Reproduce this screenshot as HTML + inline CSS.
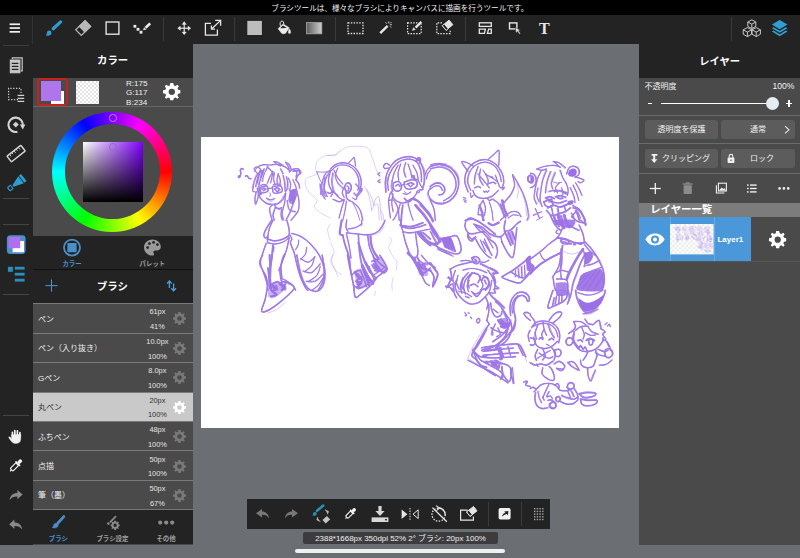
<!DOCTYPE html>
<html lang="ja"><head><meta charset="utf-8"><title>MediBang</title>
<style>
html,body{margin:0;padding:0;}
body{width:800px;height:558px;overflow:hidden;background:#6b6e73;position:relative;font-family:"Liberation Sans","Noto Sans CJK JP",sans-serif;color:#fff;}
.a{position:absolute;}
.t{position:absolute;white-space:nowrap;line-height:1;}
.c{transform:translate(-50%,-50%);}
svg{position:absolute;overflow:visible;}
#status{left:0;top:0;width:800px;height:14.5px;background:#000;}
#toolbar{left:0;top:14.5px;width:800px;height:29.5px;background:#232323;}
#sidebar{left:0;top:44px;width:32.5px;height:500.5px;background:#232323;}
.vsep{position:absolute;top:17px;width:1px;height:24px;background:#3a3a3a;}
.hsep{position:absolute;left:3px;width:26px;height:1px;background:#444;}
#lp{left:33px;top:44px;width:160px;height:500.5px;background:#4a4a4a;}
#rp{left:639px;top:44px;width:161px;height:500.5px;background:#4a4a4a;}
.hdr{position:absolute;left:0;top:0;width:100%;height:33.5px;background:#232323;}
.brow{position:absolute;left:0;width:160px;height:28.6px;border-top:1px solid #7a7a7a;background:#4a4a4a;}
.brow .n{position:absolute;left:5px;top:50%;margin-top:1.4px;transform:translateY(-50%);font-size:8px;line-height:1;color:#eee;white-space:nowrap;}
.brow .v{position:absolute;left:124.4px;transform:translate(-50%,-50%);font-size:7.4px;line-height:1;color:#e4e4e4;white-space:nowrap;}
.brow.sel{background:#c9c9c9;}
.brow.sel .n,.brow.sel .v{color:#333;}
.btn{position:absolute;height:19.3px;background:#5c5c5c;border-radius:3px;}
</style></head><body>
<svg width="0" height="0" style="position:absolute;left:0;top:0"><defs>
<symbol id="gear" viewBox="-10 -10 20 20"><path fill-rule="evenodd" d="M-1.7,-10H1.7L2.3,-7.3L4.1,-6.5L6.4,-8L8,-6.4L6.5,-4.1L7.3,-2.3L10,-1.7V1.7L7.3,2.3L6.5,4.1L8,6.4L6.4,8L4.1,6.5L2.3,7.3L1.7,10H-1.7L-2.3,7.3L-4.1,6.5L-6.4,8L-8,6.4L-6.5,4.1L-7.3,2.3L-10,1.7V-1.7L-7.3,-2.3L-6.5,-4.1L-8,-6.4L-6.4,-8L-4.1,-6.5L-2.3,-7.3ZM0,-3.6A3.6,3.6 0 1 0 0,3.6A3.6,3.6 0 1 0 0,-3.6Z"/></symbol>
<pattern id="chk" width="4" height="4" patternUnits="userSpaceOnUse"><rect width="4" height="4" fill="#fff"/><rect width="2" height="2" fill="#e3e3e3"/><rect x="2" y="2" width="2" height="2" fill="#e3e3e3"/></pattern>
<pattern id="chk2" width="44" height="44" patternUnits="userSpaceOnUse"><rect width="44" height="44" fill="#fff"/><rect width="22" height="22" fill="#ececec"/><rect x="22" y="22" width="22" height="22" fill="#ececec"/></pattern>
</defs></svg>

<div class="a" id="status"><div class="t c" style="left:399.8px;top:8.6px;font-size:7.6px;color:#f2f2f2;">ブラシツールは、様々なブラシによりキャンバスに描画を行うツールです。</div></div>
<div class="a" id="toolbar">
<div class="vsep" style="left:32px;top:1px;height:28px;background:#333"></div>
<div class="vsep" style="left:163px;top:2.5px"></div>
<div class="vsep" style="left:233.5px;top:2.5px"></div>
<div class="vsep" style="left:334.5px;top:2.5px"></div>
<div class="vsep" style="left:464.5px;top:2.5px"></div>
<div class="vsep" style="left:730.5px;top:2.5px"></div>
<svg style="left:0;top:-14.5px" width="800" height="44" viewBox="0 0 800 44">
<!-- hamburger -->
<g fill="#f0f0f0"><rect x="9.6" y="23.4" width="10.4" height="1.7"/><rect x="9.6" y="27.2" width="10.4" height="1.7"/><rect x="9.6" y="31" width="10.4" height="1.7"/></g>
<!-- brush -->
<g stroke="#2f9bd2" fill="#2f9bd2"><line x1="60.6" y1="21.9" x2="53.2" y2="28.7" stroke-width="3.3" stroke-linecap="round"/><circle cx="49.2" cy="32.9" r="2.3" stroke="none"/><path d="M47.4,33 C47.2,34.2 46.8,34.8 46,35.2 C47.4,35.8 49,35.6 50,34.8Z" stroke-width="0.5"/></g>
<!-- eraser -->
<g transform="translate(83.2,28.05) rotate(-44)"><rect x="-6.5" y="-4" width="13" height="8" fill="none" stroke="#b8b8b8" stroke-width="1.2"/><rect x="-2.2" y="-4.5" width="9.2" height="9" fill="#b8b8b8"/></g>
<!-- square -->
<rect x="106.1" y="22" width="12.8" height="12.2" fill="none" stroke="#e0e0e0" stroke-width="1.4"/>
<!-- polyline pen -->
<g fill="#ececec" stroke="#ececec"><rect x="133.5" y="24.9" width="2.8" height="2.8" stroke="none"/><rect x="136.6" y="27.9" width="2.8" height="2.8" stroke="none"/><rect x="139.6" y="30.8" width="2.8" height="2.8" stroke="none"/><line x1="145.6" y1="27.8" x2="150.2" y2="23.4" stroke-width="2.6"/><path d="M143.2,30 L144.2,27.4 L146.2,29.4Z" stroke-width="0.3"/></g>
<!-- move -->
<g fill="#e6e6e6" stroke="#e6e6e6" stroke-width="1.2"><line x1="178.6" y1="28.2" x2="189.8" y2="28.2"/><line x1="184.2" y1="22.6" x2="184.2" y2="33.8"/><path d="M184.2,21.6 L186.4,24.4 H182Z M184.2,34.8 L186.4,32 H182Z M177.6,28.2 L180.4,26 V30.4Z M190.8,28.2 L188,26 V30.4Z" stroke-width="0.3"/></g>
<!-- transform -->
<g fill="none" stroke="#e6e6e6" stroke-width="1.3"><path d="M211,23.4 H205.4 V35.2 H217.4 V29.4"/><path d="M211.6,29 L220.4,20.6 M215.2,20.4 H220.6 V25.8"/><path d="M211.4,25.6 V29.2 H215"/></g>
<!-- fill square -->
<rect x="247.3" y="20.9" width="14.6" height="14.1" fill="#bdbdbd"/>
<!-- bucket -->
<g fill="#ececec" stroke="#ececec"><path d="M278,28.8 L281.8,24.9 L283.4,24.1 L289.2,27.7 L288.6,28.8 L285.6,33.2 Q283.6,34.4 281.8,33.4 Z" stroke-width="0.4"/><path d="M280.2,28.3 L283,25.6 L286.8,27.9Z" fill="#232323" stroke="none"/><path d="M280.4,25.8 C279.6,23 280.4,21.4 281.8,21.1 C283.4,20.9 284,22.6 283.7,24.2" fill="none" stroke-width="1"/><path d="M288.9,28.6 C290.6,29.8 291,32 290.5,33.2 C289.7,33.9 288.4,33.5 288.2,32.4 C288.2,31 289,30 288.9,28.6Z" stroke-width="0.3"/></g>
<!-- gradient -->
<linearGradient id="tg" x1="0" x2="1" y1="0" y2="0"><stop offset="0" stop-color="#5a5a5a"/><stop offset="1" stop-color="#d0d0d0"/></linearGradient>
<rect x="306.4" y="22.6" width="15.4" height="11.2" fill="url(#tg)" stroke="#a8a8a8" stroke-width="0.8"/>
<!-- dotted select -->
<rect x="348" y="22.9" width="15" height="10.6" fill="none" stroke="#e0e0e0" stroke-width="1.3" stroke-dasharray="1.5 1.3"/>
<!-- magic wand -->
<g stroke="#e6e6e6" fill="#e6e6e6"><line x1="380.2" y1="33.2" x2="387.6" y2="25.8" stroke-width="2.4"/><g stroke-width="0.9"><line x1="388.8" y1="21.4" x2="388.8" y2="23.4"/><line x1="391.8" y1="24.8" x2="389.8" y2="24.8"/><line x1="385.6" y1="22.2" x2="386.8" y2="23.6"/><line x1="391.4" y1="22.2" x2="390.2" y2="23.4"/><line x1="391.2" y1="27.6" x2="390" y2="26.4"/></g></g>
<!-- select pen -->
<g stroke="#e6e6e6" fill="#e6e6e6"><rect x="407.6" y="22.8" width="13.6" height="10.8" fill="none" stroke-width="1.2" stroke-dasharray="1.5 1.3"/><line x1="415.4" y1="27.8" x2="421.6" y2="21.4" stroke-width="3.2" stroke="#232323"/><line x1="415.6" y1="27.6" x2="421.4" y2="21.8" stroke-width="2.4"/><path d="M412.4,30.6 L413.4,27.6 L415.4,29.6Z" stroke-width="0.4"/></g>
<!-- select eraser -->
<g stroke="#e6e6e6" fill="#e6e6e6"><path d="M442,22.8 H436.8 V33.6 H450.2 V30" fill="none" stroke-width="1.2" stroke-dasharray="1.5 1.3"/><g transform="translate(447.6,25.2) rotate(-40)"><rect x="-4.4" y="-3" width="8.8" height="6" stroke-width="0.8"/><rect x="-4.4" y="-3" width="2.6" height="6" fill="#232323" stroke-width="0.8"/></g></g>
<!-- panel layout -->
<g fill="none" stroke="#e6e6e6" stroke-width="1.3"><rect x="479.3" y="22.8" width="12" height="3.6"/><path d="M479.3,29.2 H485.4 L484.4,33.4 H479.3Z"/><path d="M488.6,29.2 H491.3 V33.4 H487.4Z"/></g>
<!-- select cursor -->
<g fill="none" stroke="#e6e6e6"><rect x="509.5" y="22.9" width="7.4" height="6" stroke-width="1.4"/><path d="M515.2,27.6 L516,33.2 L517.4,31.6 L519.6,34.2 L520.6,33.4 L518.6,30.8 L520.6,30.2Z" fill="#e6e6e6" stroke="#232323" stroke-width="0.5"/></g>
<!-- cubes -->
<g fill="none" stroke="#d8d8d8" stroke-width="0.9" stroke-linejoin="round"><path d="M751.8,19.8 L755.8,22 V26.4 L751.8,28.6 L747.8,26.4 V22Z M747.8,22 L751.8,24.2 L755.8,22 M751.8,24.2 V28.6"/><path d="M747.4,27.6 L751.6,29.8 V34.2 L747.4,36.6 L743.2,34.2 V29.8Z M743.2,29.8 L747.4,32 L751.6,29.8 M747.4,32 V36.6"/><path d="M756.2,27.6 L760.4,29.8 V34.2 L756.2,36.6 L752,34.2 V29.8Z M752,29.8 L756.2,32 L760.4,29.8 M756.2,32 V36.6"/></g>
<!-- layers -->
<g fill="#2f9fd4" stroke="none"><path d="M779.7,20 L787.5,24.6 L779.7,29.2 L771.9,24.6Z"/><path d="M773.6,27.2 L779.7,30.8 L785.8,27.2 L787.5,28.2 L779.7,32.8 L771.9,28.2Z"/><path d="M773.6,30.6 L779.7,34.2 L785.8,30.6 L787.5,31.6 L779.7,36.2 L771.9,31.6Z"/></g>
</svg>
<div class="t c" style="left:544.3px;top:14.1px;font-family:'Liberation Serif',serif;font-weight:bold;font-size:16px;color:#e8e8e8;">T</div>
</div>
<div class="a" id="sidebar">
<div class="hsep" style="top:1px;background:#3c3c3c"></div>
<div class="hsep" style="top:154px"></div>
<div class="hsep" style="top:179.5px"></div>
<div class="hsep" style="top:250px"></div>
<div class="hsep" style="top:371px"></div>
<svg style="left:0;top:-44px" width="33" height="545" viewBox="0 0 33 545">
<!-- pages -->
<g fill="none" stroke="#c8c8c8" stroke-width="1.2"><path d="M12.4,59 V57.8 H22.2 V70.8 H20.6"/><rect x="10.3" y="60" width="9.6" height="12.8" fill="#c8c8c8" stroke-width="1"/><g stroke="#232323" stroke-width="1.3"><line x1="11.8" y1="63.4" x2="18.4" y2="63.4"/><line x1="11.8" y1="66.4" x2="18.4" y2="66.4"/><line x1="11.8" y1="69.4" x2="18.4" y2="69.4"/></g></g>
<!-- select list -->
<g fill="none" stroke="#d0d0d0"><path d="M18,99.6 H8.6 V88.4 H21 V93" stroke-width="1.2" stroke-dasharray="1.3 1.5"/><g stroke-width="1.3"><line x1="17.6" y1="95.4" x2="24.2" y2="95.4"/><line x1="17.6" y1="98.4" x2="24.2" y2="98.4"/><line x1="17.6" y1="101.4" x2="24.2" y2="101.4"/></g></g>
<!-- rotate -->
<g fill="none" stroke="#d4d4d4"><path d="M22.6,126.6 A7.2,7.2 0 1 0 17.4,131.8" stroke-width="2.1"/><path d="M19.8,124.4 L25.4,124.6 L22.8,129.6Z" fill="#d4d4d4" stroke="none"/><rect x="-2.1" y="-2.1" width="4.2" height="4.2" transform="translate(15.8,124.6) rotate(45)" fill="#d4d4d4" stroke="none"/></g>
<!-- ruler -->
<g transform="translate(16.1,153.6) rotate(-38)" fill="none" stroke="#d4d4d4"><rect x="-8.8" y="-3.6" width="17.6" height="7.2" stroke-width="1.5" rx="0.6"/><g stroke-width="0.9"><line x1="-5.6" y1="-3.6" x2="-5.6" y2="-0.8"/><line x1="-2.8" y1="-3.6" x2="-2.8" y2="-1.4"/><line x1="0" y1="-3.6" x2="0" y2="-0.8"/><line x1="2.8" y1="-3.6" x2="2.8" y2="-1.4"/><line x1="5.6" y1="-3.6" x2="5.6" y2="-0.8"/></g></g>
<!-- marker -->
<g transform="translate(15.9,183.7) rotate(-38)" fill="#2f9bd0" stroke="none"><rect x="7.3" y="-4.5" width="2.7" height="9"/><path d="M6.5,-4.5 L6.5,4.5 L-3.6,1 L-3.6,-1Z"/><path d="M-4.8,-2.6 H-8.8 L-9.6,-1.8 V1.8 L-8.8,2.6 H-4.8Z M-5.8,-1.5 V1.5 H-8.4 V-1.5Z" fill-rule="evenodd"/></g>
<!-- color -->
<rect x="6.9" y="235.3" width="18.7" height="18.7" rx="3.4" fill="#4a90c9"/><rect x="12.6" y="241" width="11.4" height="11.2" fill="#fff"/><rect x="8.6" y="237" width="11.6" height="11.2" fill="#b26ef0"/>
<!-- list -->
<g fill="#2a8fba"><rect x="7.9" y="266.8" width="5" height="5"/><rect x="14.8" y="266.8" width="9.8" height="2.8"/><rect x="14.8" y="272.8" width="9.8" height="2.8"/><rect x="14.8" y="278.8" width="9.8" height="2.8"/></g>
<!-- hand -->
<g fill="#f2f2f2" stroke="#f2f2f2" stroke-linecap="round"><path d="M11.6,436.4 L11.6,440.2 C11.8,442.4 13.2,443.4 15.8,443.4 C18.6,443.4 20.4,442.4 20.6,439.6 L20.8,434.6 L11.6,434.8Z" stroke-width="0.5"/><line x1="12.4" y1="432.4" x2="12.6" y2="437" stroke-width="1.7"/><line x1="14.8" y1="430.6" x2="14.9" y2="437" stroke-width="1.7"/><line x1="17.4" y1="430.9" x2="17.3" y2="437" stroke-width="1.7"/><line x1="19.9" y1="432.6" x2="19.7" y2="437" stroke-width="1.7"/><path d="M11.8,440.6 L9.4,437.4" stroke-width="1.8"/></g>
<!-- eyedropper -->
<g transform="translate(15.8,465.6) rotate(45)" fill="none" stroke="#f2f2f2"><rect x="-1.9" y="-2" width="3.8" height="8" rx="0.8" stroke-width="1.2"/><path d="M0,6 V8" stroke-width="1.2"/><rect x="-3.2" y="-3.6" width="6.4" height="1.7" fill="#f2f2f2" stroke="none"/><rect x="-1.7" y="-8" width="3.4" height="4.6" rx="1.2" fill="#f2f2f2" stroke="none"/></g>
<!-- redo -->
<path d="M9.6,500 C10,495.4 13.4,493 17.4,493 V490 L22.6,494.6 L17.4,499.2 V496.4 C14.2,496.2 11.6,497.2 9.6,500Z" fill="#8a8a8a"/>
<!-- undo -->
<path d="M22.2,529.6 C21.8,525 18.4,522.6 14.4,522.6 V519.6 L9.2,524.2 L14.4,528.8 V526 C17.6,525.8 20.2,526.8 22.2,529.6Z" fill="#8a8a8a"/>
</svg>
</div>
<div class="a" id="lp">
<div class="hdr"><div class="t c" style="left:79.6px;top:17.4px;font-size:10.4px;font-weight:bold;">カラー</div></div>
<div class="a" style="left:0;top:62px;width:160px;height:1px;background:#666"></div>
<!-- swatches -->
<div class="a" style="left:4.3px;top:33.6px;width:31px;height:28.4px;border:2.1px solid #c4221e;border-radius:4px;box-sizing:border-box;"></div>
<div class="a" style="left:17.6px;top:47px;width:13.8px;height:13px;background:#fff;"></div>
<div class="a" style="left:7.7px;top:36.8px;width:20.8px;height:20px;background:#af75ea;"></div>
<svg style="left:42.8px;top:36.8px" width="23" height="23"><rect width="23" height="23" fill="url(#chk)"/></svg>
<div class="t" style="left:93px;top:34.6px;font-size:8.1px;line-height:9.7px;color:#f0f0f0;">R:175<br>G:117<br>B:234</div>
<svg style="left:129.6px;top:38.8px" width="17.6" height="17.6" fill="#fff"><use href="#gear"/></svg>
<!-- wheel -->
<div class="a" style="left:18.8px;top:67.5px;width:120.6px;height:120.6px;border-radius:50%;background:conic-gradient(from 90deg,#f00,#ff0,#0f0,#0ff,#00f,#f0f,#f00);"></div>
<div class="a" style="left:31.6px;top:80.3px;width:95px;height:95px;border-radius:50%;background:#4a4a4a;"></div>
<div class="a" style="left:49.6px;top:98px;width:60px;height:60px;background:linear-gradient(to bottom,rgba(0,0,0,0),#000),linear-gradient(to right,#fff,#7d00ff);"></div>
<div class="a" style="left:76.2px;top:70.4px;width:5.4px;height:5.4px;border:1.3px solid #b58ad8;border-radius:50%;"></div>
<div class="a" style="left:76.2px;top:99.4px;width:5.4px;height:5.4px;border:1.3px solid #8d70b0;border-radius:50%;"></div>
<!-- tabs -->
<div class="a" style="left:0;top:192.4px;width:160px;height:32.6px;background:#232323;"></div>
<svg style="left:0;top:192.4px" width="160" height="33" viewBox="0 0 160 33">
<circle cx="39" cy="11.6" r="8" fill="none" stroke="#4a8fc8" stroke-width="1.8"/><rect x="34.4" y="7" width="9.2" height="9.2" rx="1" fill="#4a8fc8"/>
<path d="M119.4,3.4 C114.4,3.4 111,7 111,11.6 C111,16.6 115.4,19.8 119.6,19.6 C121.4,19.4 121.2,17.8 120.6,17 C119.8,15.6 120.8,14.4 122.4,14.4 H124.4 C126.6,14.4 127.8,12.8 127.8,10.8 C127.8,6.6 124,3.4 119.4,3.4Z" fill="#9a9a9a"/>
<g fill="#232323"><circle cx="114.6" cy="11.6" r="1.4"/><circle cx="116.4" cy="7.6" r="1.4"/><circle cx="120.6" cy="6.4" r="1.4"/><circle cx="124.4" cy="8.6" r="1.4"/></g>
</svg>
<div class="t c" style="left:39px;top:220.3px;font-size:6.4px;font-weight:bold;color:#4a90d2;">カラー</div>
<div class="t c" style="left:119.4px;top:220.3px;font-size:6.4px;font-weight:bold;color:#9a9a9a;">パレット</div>
<div class="a" style="left:0;top:225px;width:160px;height:34.2px;background:#232323;border-top:1px solid #111;box-sizing:border-box;"></div>
<svg style="left:0;top:225px" width="160" height="34" viewBox="0 0 160 34"><g stroke="#4a8fc8" stroke-width="1.1" fill="none"><line x1="12.4" y1="16.6" x2="24.6" y2="16.6"/><line x1="18.5" y1="10.5" x2="18.5" y2="22.7"/></g>
<g stroke="#4a9fe0" stroke-width="1.3" fill="none"><path d="M136.4,19 V12.4 M134,14.6 L136.4,12 L138.8,14.6"/><path d="M140.6,14.6 V21.4 M138.2,19.2 L140.6,21.8 L143,19.2"/></g></svg>
<div class="t c" style="left:79.4px;top:242.8px;font-size:10.4px;font-weight:bold;">ブラシ</div>
<div class="brow" style="top:259.2px"><div class="n">ペン</div><div class="v" style="top:8.2px">61px</div><div class="v" style="top:22.9px">41%</div><svg style="left:140px;top:8.3px" width="13" height="13" fill="#787878"><use href="#gear"/></svg></div>
<div class="brow" style="top:288.7px"><div class="n">ペン（入り抜き）</div><div class="v" style="top:8.2px">10.0px</div><div class="v" style="top:22.9px">100%</div><svg style="left:140px;top:8.3px" width="13" height="13" fill="#787878"><use href="#gear"/></svg></div>
<div class="brow" style="top:318.2px"><div class="n">Gペン</div><div class="v" style="top:8.2px">8.0px</div><div class="v" style="top:22.9px">100%</div><svg style="left:140px;top:8.3px" width="13" height="13" fill="#787878"><use href="#gear"/></svg></div>
<div class="brow sel" style="top:347.6px"><div class="n">丸ペン</div><div class="v" style="top:8.2px">20px</div><div class="v" style="top:22.9px">100%</div><svg style="left:140px;top:8.3px" width="13" height="13" fill="#ffffff"><use href="#gear"/></svg></div>
<div class="brow" style="top:377.0px"><div class="n">ふちペン</div><div class="v" style="top:8.2px">48px</div><div class="v" style="top:22.9px">100%</div><svg style="left:140px;top:8.3px" width="13" height="13" fill="#787878"><use href="#gear"/></svg></div>
<div class="brow" style="top:406.4px"><div class="n">点描</div><div class="v" style="top:8.2px">50px</div><div class="v" style="top:22.9px">100%</div><svg style="left:140px;top:8.3px" width="13" height="13" fill="#787878"><use href="#gear"/></svg></div>
<div class="brow" style="top:435.8px"><div class="n">筆（墨）</div><div class="v" style="top:8.2px">50px</div><div class="v" style="top:22.9px">67%</div><svg style="left:140px;top:8.3px" width="13" height="13" fill="#787878"><use href="#gear"/></svg></div>

<div class="a" style="left:0;top:465.2px;width:160px;height:35.3px;background:#232323;border-top:1.5px solid #777;box-sizing:border-box;"></div>
<svg style="left:0;top:466px" width="160" height="34" viewBox="0 0 160 34">
<g stroke="#4a8fc8" fill="#4a8fc8"><line x1="30.8" y1="6.6" x2="25" y2="13" stroke-width="2.8" stroke-linecap="round"/><path d="M24.2,13.6 C23.4,12.8 21,13.2 20.6,15.2 C20.4,16.4 20,16.8 19.2,17.4 C20.6,18.4 23.6,18.2 24.8,16.6 C25.6,15.4 25.2,14.2 24.2,13.6Z" stroke-width="0.5"/></g>
<g stroke="#8a8a8a" fill="#8a8a8a"><line x1="82.6" y1="6.6" x2="77.4" y2="11.8" stroke-width="1.8" stroke-linecap="round"/><circle cx="75.4" cy="13.6" r="1.3" stroke="none"/></g>
<svg x="77.4" y="10.6" width="9.4" height="9.4" fill="#8a8a8a" style="position:static"><use href="#gear"/></svg>
<g fill="#8a8a8a"><circle cx="127.2" cy="12.6" r="2.1"/><circle cx="133.2" cy="12.6" r="2.1"/><circle cx="139.2" cy="12.6" r="2.1"/></g>
</svg>
<div class="t c" style="left:25.4px;top:495px;font-size:6.4px;font-weight:bold;color:#4a90d2;">ブラシ</div>
<div class="t c" style="left:79.4px;top:495px;font-size:6.4px;font-weight:bold;color:#a0a0a0;">ブラシ設定</div>
<div class="t c" style="left:133px;top:495px;font-size:6.4px;font-weight:bold;color:#a0a0a0;">その他</div>
</div>
<div class="a" id="rp">
<div class="hdr"><div class="t c" style="left:80.6px;top:17.7px;font-size:10.3px;font-weight:bold;">レイヤー</div></div>
<div class="t" style="left:5.6px;top:38.6px;font-size:8px;color:#f0f0f0;">不透明度</div>
<div class="t" style="right:5.6px;top:38px;font-size:8.6px;color:#f0f0f0;">100%</div>
<div class="a" style="left:22px;top:58.7px;width:110px;height:1.5px;background:#fff;"></div>
<div class="a" style="left:126.8px;top:53px;width:13px;height:13px;border-radius:50%;background:#e6edf2;"></div>
<div class="a" style="left:9.4px;top:58.6px;width:3.6px;height:1.7px;background:#fff;"></div>
<div class="a" style="left:146.6px;top:58.6px;width:6.4px;height:1.7px;background:#fff;"></div>
<div class="a" style="left:148.9px;top:56.2px;width:1.8px;height:6.4px;background:#fff;"></div>
<div class="a" style="left:0;top:70.6px;width:161px;height:1px;background:#6a6a6a;"></div>
<div class="btn" style="left:5.6px;top:75.5px;width:73.8px;"><div class="t c" style="left:36.9px;top:10.7px;font-size:8px;color:#f0f0f0;">透明度を保護</div></div>
<div class="btn" style="left:82px;top:75.5px;width:73.9px;"><div class="t c" style="left:37px;top:10.7px;font-size:8px;color:#f0f0f0;">通常</div>
<svg style="left:62px;top:5px" width="8" height="10"><path d="M2,1.2 L6,4.8 L2,8.4" fill="none" stroke="#e8e8e8" stroke-width="1.1"/></svg></div>
<div class="a" style="left:0;top:99.2px;width:161px;height:1px;background:#6a6a6a;"></div>
<div class="btn" style="left:5.6px;top:104.8px;width:73.8px;"><div class="t" style="left:17.4px;top:6.4px;font-size:8px;color:#f0f0f0;">クリッピング</div>
<svg style="left:4.6px;top:4.2px" width="10" height="11"><path d="M2.6,1 H8.4 V2.8 H6.2 V6.2 H8.4 L5.2,10 L2,6.2 H4.2 V2.8 H2.6Z" fill="#f0f0f0"/></svg></div>
<div class="btn" style="left:82px;top:104.8px;width:73.9px;"><div class="t c" style="left:41px;top:10.6px;font-size:8px;color:#f0f0f0;">ロック</div>
<svg style="left:6.2px;top:4.4px" width="8" height="11"><rect x="0.6" y="4.6" width="6.8" height="5.4" rx="0.8" fill="#f0f0f0"/><path d="M2.2,4.8 V3.2 A1.8,1.8 0 0 1 5.8,3.2 V4.8" fill="none" stroke="#f0f0f0" stroke-width="1.1"/><circle cx="4" cy="7.2" r="0.8" fill="#5c5c5c"/></svg></div>
<div class="a" style="left:0;top:129px;width:161px;height:1px;background:#6a6a6a;"></div>
<svg style="left:0;top:134px" width="161" height="22" viewBox="0 0 161 22">
<g stroke="#f0f0f0" stroke-width="1.3"><line x1="10.8" y1="10.5" x2="21.8" y2="10.5"/><line x1="16.3" y1="5" x2="16.3" y2="16"/></g>
<g fill="#8c8c8c"><rect x="44.6" y="7.2" width="8.2" height="8.8" rx="0.8"/><rect x="43.8" y="5.4" width="9.8" height="1.3"/><rect x="46.8" y="4.4" width="3.8" height="1.4"/></g>
<g fill="none" stroke="#f0f0f0" stroke-width="1.1"><path d="M77.4,7.2 V15 H85.4"/><rect x="79.4" y="5.2" width="8" height="7.8"/><path d="M80,12.4 L82.6,9.4 L84.2,11 L85.4,10 L87,12.4Z" fill="#f0f0f0" stroke="none"/></g>
<g fill="#f0f0f0"><rect x="108" y="6.4" width="1.6" height="1.4"/><rect x="111" y="6.4" width="6.6" height="1.4"/><rect x="108" y="9.8" width="1.6" height="1.4"/><rect x="111" y="9.8" width="6.6" height="1.4"/><rect x="108" y="13.2" width="1.6" height="1.4"/><rect x="111" y="13.2" width="6.6" height="1.4"/></g>
<g fill="#f0f0f0"><circle cx="140.6" cy="10.4" r="1.3"/><circle cx="144.9" cy="10.4" r="1.3"/><circle cx="149.2" cy="10.4" r="1.3"/></g>
</svg>
<div class="a" style="left:0;top:159.4px;width:161px;height:13.6px;background:#7c7c7c;"><div class="t" style="left:11.2px;top:1.2px;font-size:10.4px;font-weight:bold;">レイヤー一覧</div></div>
<div class="a" style="left:0;top:173px;width:111.8px;height:44.2px;background:#4a98d9;"></div>
<div class="a" style="left:30.8px;top:173px;width:1px;height:44.2px;background:#6aaae0;"></div>
<div class="a" style="left:75px;top:173px;width:1px;height:44.2px;background:#6aaae0;"></div>
<svg style="left:31.4px;top:180.3px;overflow:hidden" width="43.6" height="30.4" viewBox="0 0 418 291.4"><rect width="418" height="291.4" fill="url(#chk2)"/><use href="#skg" style="--k:1.2" opacity="0.5"/></svg>
<svg style="left:5.8px;top:189px" width="20" height="13" viewBox="0 0 20 13"><path d="M0.4,6.5 C3,2 6.4,0.6 10,0.6 C13.6,0.6 17,2 19.6,6.5 C17,11 13.6,12.4 10,12.4 C6.4,12.4 3,11 0.4,6.5Z" fill="#fff"/><circle cx="10" cy="6.5" r="4" fill="#4a98d9"/><circle cx="10" cy="6.5" r="2" fill="#fff"/></svg>
<div class="t" style="left:78.4px;top:191.6px;font-size:8px;font-weight:bold;color:#fff;">Layer1</div>
<svg style="left:130.4px;top:186.8px" width="17.4" height="17.4" fill="#fff"><use href="#gear"/></svg>
<div class="a" style="left:0;top:217.2px;width:161px;height:1px;background:#555;"></div>
</div>
<div class="a" id="canvas" style="left:200.7px;top:136.8px;width:418px;height:291.4px;background:#fff;overflow:hidden;"><!--SK0--><svg id="sk" style="left:0;top:0" width="418" height="291.4" viewBox="0 0 418 291.4"><g id="skg" fill="none" stroke="#a07ae6" stroke-linecap="round" stroke-linejoin="round"><path style="stroke-width:calc(var(--k,1)*0.59px)" d="M63.4,35.3C63.1,36.1 62.3,38.6 61.9,40.1C61.4,41.5 60.9,43.4 60.7,44.1M52.2,50.1C52.2,50.6 51.7,52.6 52.1,53.4C52.5,54.1 54.2,54.6 54.6,54.8M71.5,33.9C71.4,35.1 71.1,39.2 70.7,41.1C70.3,43.1 69.5,44.9 69.2,45.7M77.0,37.0C77.3,38.1 78.5,41.6 78.7,43.6C78.9,45.5 78.2,47.8 78.1,48.7M83.6,50.8C83.6,51.4 83.5,54.2 83.8,54.6C84.1,54.9 85.3,53.3 85.5,53.0M59.5,48.8C60.0,48.7 61.5,47.8 62.6,47.7C63.7,47.7 65.5,48.6 66.1,48.7M72.4,48.1C73.1,48.0 75.4,47.7 76.7,47.7C78.1,47.8 79.8,48.2 80.4,48.3M91.3,42.2C91.7,43.3 93.4,46.8 94.0,48.4C94.7,50.0 95.1,51.3 95.4,51.9M85.8,63.6C86.1,65.1 86.4,70.9 87.8,72.8C89.2,74.7 93.2,74.7 94.3,75.1M80.3,71.6C80.2,72.7 79.7,76.4 79.8,78.2C79.9,80.0 80.7,81.7 80.9,82.5M121.1,50.9C121.3,51.8 121.8,55.2 122.5,56.6C123.1,58.0 124.5,58.9 124.9,59.3M146.7,26.9C147.4,26.2 149.7,23.5 150.8,22.3C151.8,21.2 152.5,19.8 153.0,20.3C153.6,20.7 153.7,23.7 153.9,25.1C154.1,26.6 154.2,28.3 154.2,29.0M129.1,50.6C129.4,51.4 131.1,54.2 131.1,55.7C131.2,57.2 129.5,58.8 129.2,59.4M132.5,32.6C133.1,34.0 134.8,38.5 136.3,40.8C137.8,43.2 140.6,45.6 141.4,46.5M155.7,58.9C155.5,59.5 154.8,62.4 154.1,62.8C153.4,63.1 152.1,61.2 151.7,60.9M145.1,64.0C144.9,65.4 144.5,68.9 144.0,72.3C143.4,75.6 142.2,81.9 141.8,83.9M219.0,52.1C218.9,52.7 218.8,55.0 218.3,55.4C217.7,55.7 216.1,54.6 215.7,54.4M187.7,63.2C188.4,63.1 190.6,62.3 191.6,62.6C192.6,63.0 193.4,64.8 193.8,65.2M206.6,66.8C207.1,68.4 208.6,73.6 209.5,76.4C210.4,79.2 211.6,82.4 212.1,83.6M230.1,32.9C229.6,33.5 227.8,35.4 227.1,36.8C226.4,38.2 226.1,40.5 225.9,41.2M229.8,27.7C231.2,27.5 235.2,26.5 237.8,26.4C240.4,26.2 244.1,26.8 245.4,26.9M288.7,39.4C289.4,39.8 291.7,41.3 293.0,42.1C294.2,42.9 295.8,43.9 296.4,44.3M281.9,32.9C282.6,33.7 284.5,36.8 286.1,38.0C287.8,39.2 290.9,39.7 291.9,40.0M262.8,60.4L264.9,61.4M262.6,62.6L264.5,63.2M263.7,65.2L265.2,65.4M288.6,65.7C289.0,67.0 290.4,70.8 291.0,73.8C291.6,76.9 291.9,82.3 292.1,84.0M280.1,71.7C280.4,72.3 281.7,73.6 282.1,75.0C282.6,76.5 282.7,79.6 282.8,80.5M307.7,81.3C308.5,80.8 310.7,78.5 312.4,78.1C314.2,77.7 317.2,78.7 318.1,78.8M337.6,51.0C337.3,52.3 336.2,56.4 336.3,58.8C336.4,61.2 337.8,64.3 338.1,65.4M360.4,50.4C360.7,51.3 361.8,54.2 361.9,55.5C361.9,56.9 360.9,58.0 360.7,58.5M376.3,75.3L379.3,81.6M334.1,71.2L338.6,81.5M331.8,77.7L340.5,74.6M97.7,102.6C97.7,103.4 97.9,105.7 97.4,107.3C96.8,108.9 95.1,111.5 94.6,112.4M105.1,110.5C105.0,111.6 105.1,115.4 104.1,117.4C103.2,119.4 100.1,121.7 99.2,122.5M113.7,119.7C113.2,121.2 112.6,125.9 110.9,128.4C109.2,130.9 104.5,133.7 103.3,134.8M119.7,129.2C119.1,130.7 118.2,135.6 116.1,138.2C114.0,140.7 108.7,143.2 107.2,144.3M122.4,141.2C121.5,142.4 119.2,146.4 117.2,148.4C115.3,150.5 111.9,152.6 110.8,153.4M161.0,83.4L160.8,88.8M172.0,138.1C173.1,137.3 176.6,135.0 178.6,133.7C180.6,132.4 183.2,130.8 184.1,130.2M237.1,112.8C238.4,113.3 242.3,114.9 244.9,116.0C247.4,117.1 251.1,118.9 252.3,119.5M291.0,190.6L292.0,196.4M382.1,177.1C383.4,177.1 387.1,177.5 389.7,176.6C392.3,175.8 396.3,172.9 397.7,172.2M345.4,207.2L347.9,208.4M337.6,254.0C337.7,255.1 337.9,258.5 338.4,260.3C339.0,262.1 340.4,264.2 340.8,265.0M236.3,111.2C237.7,111.8 241.9,113.6 244.3,114.8C246.7,116.1 249.6,118.0 250.7,118.6M136.7,31.7C136.2,32.8 133.9,36.2 133.9,38.7C134.0,41.2 135.7,44.5 136.9,46.7C138.2,48.9 140.7,50.9 141.4,51.7"/>
<path style="stroke-width:calc(var(--k,1)*0.6px)" stroke-opacity="0.55" d="M129.3,18.2C128.1,18.4 124.6,18.4 122.4,19.5C120.2,20.5 117.4,22.4 116.1,24.5C114.8,26.6 114.8,29.9 114.7,32.0C114.7,34.1 116.8,35.8 116.0,37.0C115.2,38.3 111.6,38.7 109.7,39.5C107.8,40.4 105.5,40.6 104.7,42.3C103.9,44.0 103.9,47.1 104.7,49.6C105.5,52.1 107.8,54.8 109.7,57.1C111.6,59.4 115.4,61.3 116.0,63.4C116.6,65.5 112.9,67.6 113.5,69.7C114.1,71.8 117.1,74.1 119.8,75.9C122.4,77.8 127.7,80.1 129.3,81.0M129.3,18.2C130.1,18.1 132.6,18.4 134.3,17.6C136.0,16.8 138.5,13.9 139.3,13.2M129.3,87.0C128.9,87.8 126.9,89.9 126.7,92.0C126.4,94.1 127.5,97.6 127.9,99.5C128.4,101.4 129.1,102.6 129.3,103.3M129.3,105.8C129.9,107.2 132.9,111.6 133.1,114.6C133.3,117.5 130.3,120.2 130.6,123.4C130.8,126.5 133.3,130.7 134.3,133.4C135.4,136.1 136.4,138.6 136.8,139.7M188.3,100.8C188.7,101.2 190.9,101.6 190.8,103.3C190.7,104.9 187.6,108.1 187.8,110.8C188.0,113.5 190.7,117.3 192.0,119.6C193.4,121.9 195.3,122.3 195.8,124.6C196.3,126.9 195.4,131.9 195.3,133.4M192.0,140.9C191.8,142.2 190.9,146.4 190.8,148.4C190.7,150.5 191.4,152.4 191.5,153.2M174.4,154.1L173.6,158.5M131.6,118.2C131.3,119.4 129.2,122.6 129.8,125.2C130.4,127.8 133.3,131.9 135.1,134.0C136.8,136.0 139.4,136.9 140.3,137.5M126.9,18.3C128.2,18.3 131.9,19.3 134.4,18.3C136.9,17.2 139.5,13.4 142.0,12.0C144.5,10.5 146.6,9.9 149.5,9.5C152.4,9.1 156.6,9.2 159.5,9.5C162.5,9.8 165.2,9.7 167.1,11.4C168.9,13.0 169.6,16.3 170.8,19.5C172.1,22.8 173.5,27.9 174.6,30.8C175.6,33.7 176.7,36.0 177.1,37.1"/>
<path style="stroke-width:calc(var(--k,1)*0.66px)" d="M60.5,34.6C60.3,34.2 59.9,32.7 59.1,31.9C58.4,31.1 57.0,29.8 56.0,29.7C54.9,29.6 53.3,30.4 52.9,31.1C52.5,31.8 53.0,33.1 53.5,33.8C53.9,34.6 55.3,35.4 55.6,35.7M58.1,29.4C59.0,29.1 61.8,28.0 63.7,27.8C65.6,27.6 67.5,28.1 69.4,28.0C71.4,28.0 73.3,27.5 75.4,27.6C77.6,27.8 80.5,28.3 82.4,29.1C84.4,29.8 86.1,31.3 87.1,32.3C88.2,33.3 88.4,34.6 88.6,35.1M72.3,24.6C72.9,24.7 74.9,24.7 76.4,25.3C77.9,25.9 80.4,27.6 81.2,28.0M73.3,25.2C73.7,25.4 74.2,26.1 75.2,26.8C76.3,27.5 78.9,28.8 79.6,29.3M84.4,25.6C84.9,26.0 86.3,27.1 87.0,28.1C87.8,29.2 88.4,31.3 88.7,31.9M84.3,25.4C84.9,25.8 87.2,26.7 88.2,28.0C89.2,29.3 89.9,32.3 90.2,33.2M91.5,34.4C92.2,34.4 95.0,33.5 95.6,34.5C96.1,35.4 94.9,39.1 94.7,40.0M93.2,34.0C94.1,34.0 97.7,33.8 98.6,34.4C99.6,34.9 99.0,36.8 99.1,37.2M59.9,33.7C59.0,34.4 56.2,36.1 55.0,38.0C53.8,39.8 53.2,42.7 52.6,44.8C51.9,47.0 51.3,49.9 51.1,50.9M59.5,35.5C59.1,36.7 57.8,40.3 57.0,42.7C56.3,45.1 55.4,48.7 55.1,49.9M61.3,35.6C60.8,37.0 59.1,41.2 58.4,43.8C57.6,46.4 57.1,50.0 56.8,51.2M56.0,54.1C55.8,55.2 54.6,58.3 54.4,60.3C54.2,62.4 54.4,66.2 54.8,66.5C55.2,66.8 56.4,63.6 56.9,62.0C57.3,60.5 57.5,57.9 57.6,57.1M71.4,34.7C70.9,35.8 69.3,39.4 68.5,41.4C67.6,43.4 66.6,45.7 66.2,46.6M73.6,36.1C73.4,37.0 72.1,40.0 72.1,41.9C72.2,43.7 73.6,46.3 73.9,47.2M77.3,36.5C77.1,37.6 76.2,40.9 76.2,42.8C76.2,44.8 77.1,47.3 77.3,48.2M82.7,38.7C82.9,39.8 83.8,43.1 84.2,45.3C84.6,47.4 84.9,50.6 85.0,51.7M85.9,40.0C86.1,41.2 87.1,44.7 87.3,46.8C87.5,48.9 87.1,51.7 87.0,52.7M67.3,51.5L71.5,51.1M65.5,60.7C66.2,61.0 68.2,62.5 69.7,62.6C71.1,62.7 73.2,61.6 73.9,61.4M74.4,66.9C74.6,67.5 74.6,69.7 75.6,70.4C76.6,71.2 79.6,71.1 80.4,71.2M75.4,69.9C75.9,70.4 77.2,72.6 78.2,72.7C79.1,72.8 80.5,70.7 81.0,70.4M87.7,40.9C88.0,41.9 89.3,45.1 89.5,47.0C89.7,49.0 89.0,51.9 89.0,52.8M95.6,42.8C96.1,43.5 97.8,45.6 98.3,47.0C98.9,48.5 98.8,50.7 98.9,51.5M89.3,53.7C90.1,53.5 93.1,52.4 94.1,52.8C95.2,53.1 96.0,53.6 95.6,55.8C95.2,58.0 93.0,64.6 91.7,65.9C90.5,67.3 88.4,66.0 87.9,63.9C87.5,61.9 89.0,55.3 89.2,53.5M84.9,56.2C84.7,57.9 84.3,62.7 83.7,65.9C83.1,69.2 81.6,72.9 81.4,75.8C81.3,78.7 82.7,82.0 82.9,83.3M96.2,55.8C96.5,57.1 97.8,60.6 98.0,63.6C98.1,66.7 98.7,70.7 97.4,74.0C96.1,77.4 91.5,82.0 90.3,83.5M92.8,66.3C92.2,67.9 90.6,73.3 89.3,76.1C88.1,79.0 86.0,82.1 85.3,83.3M71.1,68.7C70.7,69.3 68.8,69.6 68.9,72.1C68.9,74.5 71.0,81.4 71.5,83.3M73.8,70.7C73.4,71.9 71.6,76.0 71.4,78.1C71.3,80.1 72.8,82.2 73.1,83.0M128.6,33.9C127.9,34.3 125.4,35.0 124.2,36.7C122.9,38.4 121.9,41.6 121.2,44.0C120.6,46.4 120.6,48.8 120.3,51.1C120.0,53.4 119.6,56.8 119.5,57.9M128.7,34.3C128.1,35.3 125.7,37.6 124.7,40.1C123.7,42.6 123.0,46.4 122.8,49.2C122.5,51.9 122.9,55.3 123.0,56.5M129.6,34.3C130.5,33.5 133.1,30.5 135.2,29.4C137.2,28.3 139.6,27.6 141.8,27.5C144.1,27.5 146.6,28.3 148.7,29.3C150.7,30.4 152.5,31.8 154.0,33.7C155.6,35.7 157.1,38.5 157.8,40.8C158.5,43.1 158.2,45.6 158.2,47.6C158.1,49.6 157.5,51.9 157.3,52.8M132.7,36.2C132.6,37.6 131.5,42.1 131.6,45.0C131.7,48.0 132.3,51.4 133.3,53.9C134.3,56.4 136.0,58.4 137.5,59.9C139.0,61.5 141.5,62.7 142.3,63.3M157.9,53.8C158.3,53.7 160.4,52.7 160.4,53.1C160.4,53.5 158.7,55.3 157.9,56.3C157.0,57.4 156.2,59.4 155.3,59.4C154.4,59.4 152.9,56.9 152.4,56.4M143.3,50.6C143.0,51.4 141.5,54.0 141.5,55.6C141.5,57.2 143.1,59.6 143.4,60.4M147.3,62.7C148.3,63.3 151.5,64.8 153.4,66.5C155.3,68.2 157.5,70.3 158.8,73.0C160.1,75.7 160.8,81.1 161.2,82.7M143.0,63.6C142.7,65.0 141.7,68.7 140.8,71.6C140.0,74.5 138.4,79.5 138.0,81.1M178.9,35.6C178.7,35.9 177.5,36.8 177.5,37.3C177.6,37.9 178.8,38.7 179.1,39.0M179.5,42.7C179.1,42.9 177.0,43.5 177.0,43.9C177.1,44.3 179.4,44.9 179.9,45.1M197.2,27.7C196.5,29.0 194.0,33.0 193.0,35.6C192.0,38.2 191.7,41.9 191.4,43.2M199.9,27.0C199.5,28.5 197.6,33.1 197.2,35.9C196.9,38.6 197.8,42.4 197.9,43.7M205.0,25.4C204.7,26.6 203.3,30.0 203.3,32.4C203.4,34.8 204.9,38.7 205.3,39.9M206.9,27.1C207.4,28.5 209.2,32.9 209.8,35.2C210.4,37.5 210.6,40.0 210.7,41.0M211.5,28.1C212.3,29.4 215.0,33.3 216.0,35.7C216.9,38.1 217.0,41.2 217.2,42.3M210.2,41.0C210.5,40.6 211.9,38.2 212.5,38.5C213.0,38.8 213.4,42.2 213.5,42.9M190.6,43.3C190.5,44.5 189.9,48.2 190.0,50.1C190.1,52.0 190.9,54.1 191.1,54.9M216.9,43.0C217.4,44.0 218.9,47.3 219.8,48.9C220.7,50.5 222.4,52.0 222.3,52.8C222.1,53.7 219.5,53.6 219.0,53.7M190.6,54.2C191.1,55.4 191.9,59.6 193.4,61.4C195.0,63.3 197.6,65.0 200.0,65.4C202.4,65.8 205.6,64.8 208.0,63.7C210.3,62.6 212.5,60.5 214.1,58.7C215.6,56.9 216.8,53.9 217.4,52.9M200.4,48.5L204.3,47.5M202.9,56.4C203.5,56.5 205.5,57.2 206.6,56.9C207.8,56.6 209.2,55.0 209.8,54.6M189.4,55.6C189.1,56.9 187.8,60.6 187.6,63.3C187.4,66.1 188.1,69.1 188.4,72.1C188.7,75.0 189.1,79.5 189.3,81.0M191.9,56.8C191.7,58.2 190.5,62.6 190.6,65.4C190.7,68.3 192.2,72.5 192.5,74.0M194.5,65.4C194.9,66.4 196.8,69.2 196.7,71.4C196.7,73.7 195.1,77.2 194.3,79.1C193.5,81.0 192.3,82.1 191.9,82.7M199.5,66.2C199.2,67.5 197.6,71.0 197.4,73.9C197.2,76.7 198.1,81.8 198.2,83.4M230.0,28.8C229.4,29.5 227.3,31.3 226.5,32.7C225.6,34.2 225.1,36.7 224.8,37.5M228.8,51.8C228.4,52.6 226.3,54.6 226.3,56.5C226.2,58.4 228.1,61.9 228.5,63.0M228.7,52.7C229.6,52.1 232.1,49.6 233.8,49.1C235.4,48.6 237.3,48.7 238.5,49.5C239.7,50.2 240.5,52.9 240.9,53.6M229.3,79.2L232.2,83.8M269.9,53.3C269.4,51.9 267.5,47.6 267.3,44.7C267.2,41.7 267.8,38.2 269.0,35.5C270.2,32.7 272.1,29.9 274.7,28.1C277.3,26.4 281.7,25.1 284.8,25.1C288.0,25.2 291.5,26.6 293.8,28.5C296.0,30.3 297.4,33.6 298.5,36.3C299.6,38.9 300.3,43.2 300.6,44.6M267.5,34.0C266.4,32.5 261.0,26.1 260.7,24.7C260.5,23.3 264.3,24.8 266.2,25.5C268.0,26.2 270.9,28.4 271.8,29.0M287.1,22.7C288.2,21.8 291.7,18.7 293.4,17.3C295.2,15.8 297.0,13.3 297.8,13.9C298.6,14.6 298.3,18.8 298.3,21.2C298.3,23.6 297.9,27.2 297.8,28.4M277.5,29.2C277.0,30.7 275.5,35.1 274.9,38.0C274.2,40.9 273.8,45.2 273.6,46.7M279.7,31.9C279.6,33.4 278.6,38.2 279.0,40.9C279.5,43.6 281.7,46.9 282.2,48.1M277.1,36.9C278.3,38.4 282.5,43.4 284.3,45.8C286.2,48.1 287.6,50.2 288.3,51.1M285.5,37.0C285.8,38.0 287.3,41.2 287.6,43.1C287.9,45.0 287.3,47.3 287.2,48.1M294.4,38.2C294.8,39.4 296.0,43.3 296.8,45.4C297.6,47.5 298.1,49.9 299.1,50.7C300.1,51.6 302.6,50.3 303.0,50.6C303.3,50.9 301.4,52.2 301.1,52.5M282.7,54.0C282.9,54.1 283.6,54.9 284.0,54.9C284.4,54.9 284.7,53.7 285.2,53.8C285.6,53.8 286.3,55.2 286.8,55.1C287.3,55.1 288.1,53.7 288.4,53.4M269.2,56.2C269.4,56.9 269.6,59.9 270.0,60.2C270.5,60.6 271.6,58.6 271.9,58.2M282.4,63.9C281.7,64.9 279.3,67.6 278.4,69.9C277.5,72.2 277.5,76.3 277.3,77.6M282.4,63.4C282.7,64.7 284.1,68.4 284.3,71.0C284.5,73.6 283.7,77.7 283.5,79.0M291.6,63.0C292.5,63.6 295.5,64.8 296.9,66.4C298.3,68.0 299.1,70.3 300.1,72.6C301.1,74.9 302.6,78.8 303.1,80.1M276.8,78.1C277.4,78.2 279.5,78.1 280.6,79.0C281.7,79.9 282.9,82.8 283.4,83.6M311.9,37.8C312.6,39.1 314.8,42.5 316.4,45.3C318.1,48.2 320.2,51.3 321.7,54.8C323.2,58.3 324.5,62.3 325.6,66.4C326.7,70.4 328.2,76.3 328.3,79.2C328.5,82.0 327.0,82.6 326.7,83.3M266.4,81.4C267.1,81.3 269.3,80.4 270.6,80.8C271.9,81.2 273.4,83.1 274.0,83.5M335.4,32.6C336.6,32.1 339.8,30.3 342.7,29.6C345.6,28.8 350.1,28.1 352.8,28.2C355.6,28.3 358.3,30.0 359.4,30.3M351.7,24.6C352.7,24.8 355.3,24.6 357.3,25.7C359.4,26.9 362.7,30.4 363.7,31.3M353.2,24.6C353.8,25.1 355.8,26.8 356.8,27.8C357.8,28.7 359.0,29.9 359.4,30.3M335.9,31.5C336.8,31.7 339.5,33.1 341.1,33.0C342.7,33.0 344.8,31.6 345.5,31.3M341.0,32.8C340.4,34.0 338.3,37.2 337.3,40.1C336.3,43.0 335.5,47.0 334.8,50.4C334.2,53.8 333.2,58.0 333.4,60.6C333.7,63.3 335.8,65.3 336.3,66.2M344.9,32.6C344.4,34.3 342.2,39.2 341.4,42.6C340.5,45.9 340.2,49.4 339.7,52.8C339.3,56.2 338.5,60.3 338.6,63.0C338.8,65.8 340.2,68.3 340.6,69.4M350.4,34.3C349.8,36.1 347.4,41.6 346.5,45.1C345.6,48.7 345.2,54.0 344.9,55.8M353.6,34.9C353.0,36.6 350.5,42.2 350.0,45.0C349.6,47.8 351.0,50.4 351.2,51.5M358.5,33.0C359.0,34.3 360.3,38.2 361.5,40.5C362.7,42.8 364.8,45.7 365.5,46.8M358.2,46.3C357.6,47.0 354.9,49.2 354.6,50.8C354.4,52.5 356.4,55.1 356.7,56.0M364.8,45.4C365.3,46.7 367.3,50.6 367.5,52.8C367.8,55.1 366.6,57.8 366.5,58.8M374.5,40.2C375.4,40.4 378.4,40.8 379.9,41.3C381.3,41.8 383.3,42.5 383.4,43.2C383.4,43.8 381.2,45.2 380.3,45.4C379.4,45.6 378.2,44.6 377.8,44.5M374.7,45.8C375.3,46.8 377.2,49.8 378.3,51.8C379.3,53.9 380.5,57.2 380.9,58.3M372.4,47.7C373.0,49.0 374.7,53.4 375.6,55.9C376.5,58.5 377.3,61.7 377.7,62.8M368.7,50.4C369.3,51.9 371.7,56.7 372.5,59.2C373.3,61.7 373.5,64.3 373.7,65.4M374.2,73.6C374.6,74.5 375.9,77.0 376.5,78.6C377.0,80.2 377.4,82.5 377.6,83.2M369.8,76.4C370.3,77.3 372.2,80.6 372.8,81.8C373.4,83.0 373.3,83.4 373.4,83.8M66.1,102.5L66.2,106.1M84.7,116.2C84.0,117.9 81.7,123.3 80.6,126.3C79.5,129.3 78.4,132.8 78.0,134.1M147.1,91.7C148.3,91.5 152.1,91.2 154.5,90.3C156.9,89.5 160.2,87.2 161.4,86.5M145.2,97.4C145.7,99.3 147.2,105.0 148.0,109.0C148.8,113.1 149.6,119.5 150.0,121.6M170.7,123.7L177.8,121.9M201.2,95.1C202.6,95.3 206.3,96.5 209.2,96.4C212.1,96.2 215.4,95.2 218.7,94.5C222.0,93.8 227.3,92.7 229.0,92.3M275.3,89.3C276.1,90.2 278.9,93.6 280.3,94.6C281.8,95.7 283.5,95.3 284.1,95.4M279.2,102.6L283.6,113.9M283.6,101.9L289.0,113.2M286.2,101.3L292.1,111.3M299.6,99.6L301.3,106.3M260.2,124.1C261.1,124.0 264.0,123.3 265.8,123.5C267.6,123.6 270.2,124.8 271.1,125.0M278.3,124.4C279.2,124.5 282.1,125.4 283.7,125.1C285.3,124.9 287.4,123.2 288.1,122.9M247.5,140.3L251.3,144.0M262.3,132.7C263.4,132.5 266.4,131.4 269.0,131.3C271.6,131.2 275.0,131.5 277.8,132.2C280.6,132.8 284.5,134.9 285.8,135.4M244.6,148.9C245.4,149.1 247.8,149.6 249.2,150.2C250.6,150.8 252.3,152.0 252.9,152.4M314.3,134.2L314.0,139.9M317.7,131.4L318.5,140.4M321.1,129.4L321.3,140.7M323.5,128.0L323.9,139.0M355.9,92.4C355.7,93.0 354.7,94.8 354.9,95.5C355.1,96.1 356.7,96.3 357.0,96.4M339.0,116.7C339.4,117.3 340.5,119.3 341.3,120.4C342.1,121.5 343.3,123.0 343.7,123.5M359.1,133.3L359.8,142.1M381.8,112.7C382.2,114.2 383.8,118.8 384.0,121.6C384.2,124.5 383.1,128.5 382.9,129.9M383.2,107.8C384.0,108.8 386.1,111.7 387.9,113.6C389.8,115.5 393.0,118.2 394.1,119.2M384.1,129.2C385.3,128.9 388.7,128.4 391.2,127.6C393.7,126.7 397.7,124.6 399.1,124.0M381.9,137.5C383.7,136.8 389.5,134.9 392.7,133.7C395.8,132.6 399.5,131.1 400.8,130.6M99.5,121.8C100.8,122.4 104.8,125.5 107.1,125.3C109.4,125.0 112.3,121.1 113.4,120.3M102.3,133.7C103.7,133.9 108.2,136.4 111.0,135.2C113.8,133.9 117.9,127.8 119.2,126.3M104.9,143.9C106.4,143.9 111.0,144.9 113.8,143.8C116.6,142.6 120.4,138.2 121.7,137.1M244.9,149.2C245.5,149.5 247.8,149.7 248.9,150.6C250.0,151.5 251.1,154.0 251.5,154.7M246.2,140.8L250.3,143.2M264.7,159.0L268.6,160.4M257.5,154.0C258.6,154.3 261.9,154.9 264.1,155.8C266.2,156.8 269.3,159.1 270.3,159.7M291.8,172.4L296.9,176.3M264.0,175.1C264.2,175.6 265.5,177.6 265.5,178.2C265.5,178.7 264.2,178.3 264.0,178.4M267.4,175.1L268.5,176.1M269.6,179.8L270.7,180.8M276.1,183.3C276.3,183.1 277.0,181.7 277.4,181.7C277.8,181.8 278.5,183.1 278.6,183.9C278.6,184.7 278.3,186.3 277.8,186.5C277.2,186.8 275.7,185.9 275.3,185.4C275.0,184.9 275.7,183.7 275.8,183.4M289.9,190.2C291.2,191.0 295.0,193.7 297.6,194.6C300.2,195.5 304.2,195.4 305.6,195.5M311.3,176.5C311.2,175.3 310.6,171.5 311.0,169.3C311.3,167.0 312.4,164.6 313.5,162.9C314.5,161.2 316.6,159.7 317.2,159.0M376.9,155.6C378.4,156.0 382.9,157.6 385.8,157.7C388.8,157.9 391.9,157.3 394.5,156.5C397.2,155.6 400.5,153.4 401.7,152.8M331.6,189.9C332.8,189.5 336.3,187.6 339.0,187.1C341.7,186.7 345.4,186.5 347.9,187.3C350.5,188.2 352.9,190.1 354.4,192.2C355.9,194.4 356.5,199.1 356.9,200.4M337.9,216.5C339.4,217.4 344.5,220.8 346.8,221.4C349.1,222.0 350.8,220.5 351.7,220.4M336.1,221.8C337.5,221.0 341.9,218.2 344.1,216.9C346.2,215.6 348.2,214.3 349.0,213.8M405.7,204.6L407.8,209.5M404.3,187.9L406.9,185.5M406.5,189.1C406.9,188.7 408.3,187.1 408.8,187.2C409.4,187.3 409.6,189.3 409.7,189.7M310.5,231.3L311.9,246.8M336.0,226.7L337.5,229.6M356.1,231.1C356.7,231.5 358.5,233.2 359.7,233.4C360.9,233.6 362.6,232.4 363.2,232.2M341.7,259.5L343.5,263.2M273.9,88.0C275.2,88.8 279.3,91.2 281.9,93.2C284.4,95.2 287.9,99.0 289.1,100.2M293.9,186.6C293.3,188.2 290.7,194.0 290.2,196.0C289.7,198.0 290.8,198.2 290.9,198.7M296.5,191.6C296.9,192.5 299.0,195.8 298.8,197.2C298.7,198.5 296.1,199.5 295.5,200.0M128.7,33.9C128.5,35.7 127.0,41.0 127.2,44.2C127.4,47.3 128.6,50.6 130.1,52.8C131.5,55.1 135.0,56.9 136.0,57.7M123.7,40.5C123.5,42.2 122.4,47.5 122.8,50.6C123.1,53.7 125.2,57.7 125.7,59.2M118.6,46.8C118.8,48.3 119.1,53.3 119.9,55.8C120.7,58.3 122.8,60.7 123.4,61.7M132.6,62.3C133.6,62.8 136.6,65.0 138.5,65.1C140.4,65.1 143.1,63.2 144.0,62.8M155.1,46.4C155.6,47.0 157.3,49.3 158.3,50.1C159.3,50.9 161.3,50.5 161.3,51.2C161.4,51.9 159.2,53.4 158.3,54.4C157.4,55.5 156.5,57.1 156.1,57.7M66.4,28.9L64.4,34.3M67.2,30.1C67.8,30.7 70.2,32.7 71.1,33.9C72.0,35.2 72.3,36.9 72.5,37.6M80.1,31.7L82.5,36.7"/>
<path style="stroke-width:calc(var(--k,1)*0.72px)" stroke-opacity="0.55" d="M163.2,49.6C163.8,50.6 165.9,53.1 166.9,55.9C168.0,58.6 168.8,63.0 169.5,65.9C170.1,68.8 170.5,72.2 170.7,73.4M165.7,52.1C166.5,53.6 169.6,58.2 170.7,60.9C171.9,63.6 172.3,67.2 172.6,68.4M170.7,73.4C171.1,72.6 172.3,69.5 173.2,68.4C174.2,67.4 175.6,66.3 176.4,67.2C177.1,68.0 177.3,70.7 177.6,73.4C177.9,76.1 178.1,81.6 178.2,83.2M179.5,73.4C179.9,74.1 181.5,75.6 182.0,77.2C182.5,78.8 182.5,82.2 182.6,83.2M66.8,176.0C68.3,175.4 72.6,174.2 75.6,172.5C78.5,170.7 82.8,166.6 84.3,165.5M285.8,188.3C284.7,189.8 281.8,193.6 279.5,197.1C277.2,200.7 274.1,205.7 272.0,209.7C269.9,213.6 267.8,219.1 266.9,221.0M266.8,220.8C268.3,221.9 272.5,225.0 275.6,227.1C278.7,229.2 284.0,232.3 285.6,233.4"/>
<path style="stroke-width:calc(var(--k,1)*0.73px)" d="M56.9,54.0C57.1,55.1 57.1,58.8 58.4,60.7C59.6,62.6 62.4,64.4 64.5,65.4C66.5,66.5 68.5,66.8 70.5,66.9C72.6,67.0 74.9,67.0 76.6,66.1C78.4,65.2 79.8,63.3 81.0,61.5C82.3,59.8 83.7,56.7 84.3,55.7M59.0,50.5C60.1,50.2 64.2,48.3 65.4,48.9C66.6,49.5 67.2,53.1 66.3,54.2C65.4,55.3 61.3,56.1 60.0,55.5C58.6,54.9 58.6,51.4 58.3,50.6M71.6,49.5C72.9,49.4 78.1,48.1 79.6,48.9C81.1,49.7 81.7,53.2 80.6,54.3C79.4,55.5 74.2,56.6 72.7,55.8C71.2,54.9 71.6,50.4 71.4,49.4M60.5,52.0C60.9,51.9 62.4,51.2 63.0,51.3C63.7,51.5 64.1,52.7 64.3,52.9M61.7,52.4C61.9,52.6 62.2,53.7 62.5,53.8C62.8,53.8 63.4,52.7 63.6,52.5M129.9,31.9C130.6,31.3 132.4,29.2 134.3,28.2C136.2,27.3 138.8,26.4 141.1,26.2C143.4,26.0 145.7,25.9 148.1,26.9C150.5,27.9 153.7,30.1 155.6,32.3C157.5,34.5 158.8,37.7 159.6,40.1C160.4,42.6 160.3,44.7 160.1,47.1C159.9,49.4 158.7,53.2 158.4,54.4M146.0,49.4C146.3,49.7 147.8,50.4 148.0,51.2C148.2,52.0 147.3,53.5 147.2,54.0M187.2,52.8C187.1,51.3 186.2,46.6 186.5,43.8C186.7,40.9 187.1,38.8 188.7,35.8C190.2,32.9 192.6,28.4 195.7,26.1C198.7,23.8 203.5,22.0 206.8,21.8C210.0,21.6 212.9,22.8 215.1,24.8C217.2,26.8 218.6,30.6 219.5,33.8C220.3,37.0 220.1,42.3 220.2,44.0M195.1,49.4C195.5,49.0 196.8,47.1 197.6,47.2C198.4,47.3 199.6,49.6 200.0,50.1M229.3,31.4C231.0,31.1 236.3,29.3 239.5,29.5C242.6,29.7 246.0,30.7 248.4,32.5C250.8,34.3 252.9,37.3 254.0,40.3C255.1,43.3 255.6,47.7 255.1,50.7C254.5,53.7 252.9,56.2 250.8,58.4C248.7,60.6 243.8,62.9 242.4,63.8M229.1,63.0C229.7,64.5 231.9,68.9 232.8,72.3C233.6,75.7 234.0,81.6 234.2,83.4M271.5,53.1C272.1,54.0 273.0,57.0 274.7,58.3C276.3,59.7 278.9,61.0 281.5,61.1C284.1,61.2 287.7,60.3 290.4,59.0C293.0,57.7 296.3,54.2 297.5,53.2M311.6,38.5C311.9,40.2 313.8,45.3 313.5,48.6C313.3,51.9 311.4,55.5 309.9,58.1C308.4,60.8 305.8,62.6 304.5,64.3C303.2,66.1 302.3,67.8 301.9,68.5M299.7,83.1C300.4,82.4 302.5,80.2 304.4,78.8C306.3,77.4 309.0,75.1 311.1,74.6C313.2,74.1 315.6,74.8 317.1,75.7C318.6,76.5 319.7,79.1 320.2,79.7M329.6,36.1C330.3,36.3 332.7,36.2 333.7,37.3C334.8,38.4 336.0,41.0 336.0,42.8C336.1,44.6 335.0,47.0 334.0,48.2C333.0,49.5 330.7,49.9 330.1,50.2M347.1,55.0C348.0,54.8 350.4,53.8 352.3,53.7C354.3,53.7 356.7,54.0 358.8,54.6C360.9,55.1 363.8,56.7 364.8,57.2M350.5,65.0C351.7,65.3 355.4,67.0 357.8,66.8C360.3,66.7 364.0,64.4 365.3,64.0M376.2,74.9L378.5,83.8M371.4,69.0C372.5,69.6 376.2,71.1 377.9,72.8C379.7,74.6 380.8,77.5 381.9,79.4C383.0,81.2 384.0,83.0 384.4,83.8M72.0,83.5C71.4,84.9 69.0,88.9 68.1,92.0C67.2,95.1 66.9,100.4 66.7,102.1M86.2,83.3C86.6,84.6 88.0,89.1 88.4,91.4C88.8,93.8 88.6,96.6 88.6,97.6M66.8,105.6C68.0,105.8 71.7,107.1 74.4,106.9C77.1,106.7 80.7,105.4 82.8,104.4C85.0,103.4 86.6,101.4 87.3,100.8M79.7,141.3C80.6,141.7 82.8,142.3 84.8,143.5C86.9,144.8 90.5,147.2 92.2,148.9C93.8,150.6 94.4,153.0 94.9,153.8M145.9,82.3C145.7,83.6 144.7,88.0 144.9,89.9C145.1,91.8 146.6,93.2 146.9,93.8M145.0,96.3C146.9,96.4 152.3,96.6 156.1,96.9C159.8,97.2 164.1,98.6 167.4,98.3C170.8,98.0 173.9,96.7 176.2,95.0C178.5,93.4 180.0,90.1 181.2,88.2C182.4,86.4 183.1,84.5 183.5,83.7M150.8,138.5C151.3,137.8 152.5,135.5 153.9,134.7C155.4,133.9 158.7,133.7 159.7,133.5M151.9,148.6C152.8,149.1 155.1,151.8 157.5,151.7C159.9,151.5 163.8,149.0 166.3,147.5C168.8,146.0 171.6,143.6 172.7,142.8M198.9,82.5C199.1,83.5 199.7,86.7 200.2,88.6C200.7,90.5 201.5,93.1 201.8,94.0M214.1,95.2C214.3,97.0 215.0,102.7 215.5,105.8C215.9,109.0 216.7,111.9 216.7,114.1C216.7,116.4 216.2,118.3 215.4,119.3C214.7,120.4 212.7,120.2 212.1,120.4M215.2,120.3C215.9,121.1 218.0,123.8 219.5,125.1C221.0,126.4 222.5,127.9 224.1,128.2C225.7,128.5 228.4,126.9 229.2,126.6M273.0,122.2C273.6,122.6 276.2,123.8 276.4,124.3C276.5,124.9 274.0,125.6 273.8,125.3C273.6,125.1 274.8,123.2 275.0,122.8M254.1,133.5C253.7,135.0 251.5,139.8 251.6,142.4C251.7,144.9 254.2,147.6 254.7,148.7M279.3,142.0C279.7,143.1 282.0,147.0 281.9,148.9C281.8,150.8 279.2,152.6 278.7,153.4M257.0,138.8C256.8,140.0 255.3,143.8 255.5,146.1C255.7,148.4 257.8,151.6 258.3,152.7M308.9,134.7C311.0,135.8 318.1,141.3 321.5,141.1C324.9,140.9 328.0,134.8 329.3,133.6M359.5,103.6C360.8,103.9 365.5,105.1 367.4,105.5C369.3,105.9 370.3,106.0 370.9,106.1M354.2,136.3C355.3,135.8 358.8,133.8 360.8,133.7C362.9,133.5 365.6,135.0 366.6,135.2M355.3,141.4C357.0,141.7 363.7,141.2 365.6,143.1C367.6,145.0 366.7,151.2 366.9,152.8M289.4,131.2C290.5,131.7 295.3,133.4 295.8,134.3C296.4,135.3 293.2,136.6 292.6,137.0M290.8,143.3C290.5,144.6 289.8,148.9 289.3,151.0C288.9,153.2 288.3,155.4 288.1,156.3M284.0,142.7L285.4,146.6M268.2,143.1C267.8,144.0 266.1,146.9 266.0,148.8C265.9,150.6 267.3,153.3 267.6,154.2M283.9,160.0C284.4,161.1 286.2,164.2 286.5,166.2C286.8,168.2 285.8,171.1 285.7,172.0M285.4,183.7L288.3,187.3M306.7,209.9L309.2,218.3M317.8,208.6L322.3,218.7M328.6,192.9C328.3,193.8 326.9,196.6 326.9,198.5C326.9,200.4 328.2,203.4 328.5,204.4M353.6,161.0L352.2,167.9M355.0,159.7L353.5,167.2M358.5,158.8L358.2,166.2M361.3,157.2L361.2,163.9M342.4,185.1C342.5,186.3 342.6,190.2 343.1,192.4C343.6,194.6 345.1,197.5 345.5,198.5M347.4,186.0C347.9,187.3 349.1,191.2 350.2,193.6C351.2,196.0 353.1,199.2 353.7,200.3M336.2,189.1C335.8,190.4 333.8,194.4 333.5,196.7C333.2,198.9 334.5,201.7 334.7,202.7M343.8,192.0C343.3,192.8 341.2,195.8 340.9,197.3C340.7,198.8 342.1,200.2 342.3,200.8M341.6,211.8C341.9,212.8 343.6,215.8 343.5,217.6C343.4,219.4 341.5,221.9 341.1,222.7M374.9,193.9C375.8,193.2 377.9,190.7 380.0,190.0C382.2,189.2 386.5,189.6 387.8,189.5M373.3,195.5C373.3,196.7 372.3,200.5 373.0,202.7C373.6,205.0 376.3,208.2 377.0,209.2M381.0,190.4C381.4,191.5 383.2,195.3 383.4,197.3C383.5,199.2 382.2,201.2 382.0,202.0M387.4,190.4C388.0,191.2 389.0,193.9 390.7,195.0C392.4,196.2 396.5,197.1 397.6,197.5M384.7,195.8C385.5,196.3 387.7,198.0 389.4,198.3C391.1,198.6 393.8,197.9 394.7,197.8M404.8,204.0C405.4,204.8 407.7,207.4 408.5,209.1C409.3,210.8 409.5,213.3 409.7,214.2M300.6,231.5C300.8,233.0 301.6,238.4 301.4,240.2C301.1,242.0 299.6,242.0 299.2,242.3M367.1,224.7C367.8,225.3 369.2,227.1 370.8,228.4C372.4,229.7 375.8,231.8 376.8,232.5M387.2,231.6C387.2,232.8 386.8,236.6 387.2,238.7C387.6,240.7 389.2,243.2 389.6,244.1M394.1,232.9C393.6,233.9 392.0,237.4 391.3,239.1C390.6,240.8 390.0,242.5 389.8,243.1M398.9,228.0C399.9,227.9 403.1,228.1 405.2,227.2C407.3,226.4 410.4,223.4 411.4,222.7M347.8,247.6C347.3,248.9 345.6,252.9 344.5,255.2C343.5,257.5 342.1,260.3 341.6,261.3M348.1,255.0C347.7,255.9 345.5,259.4 345.8,260.1C346.0,260.8 348.7,259.0 349.7,259.3C350.6,259.6 351.2,261.4 351.5,261.8M367.1,254.3L369.9,261.1M369.7,253.9L372.4,260.0"/>
<path style="stroke-width:calc(var(--k,1)*0.79px)" d="M44.1,38.8C44.4,38.8 45.4,38.4 46.0,38.8C46.5,39.2 46.8,40.7 47.5,41.2C48.1,41.7 49.4,41.6 49.8,41.6M88.4,35.2C89.0,34.7 90.6,32.5 92.2,32.0C93.8,31.5 96.5,31.4 97.8,32.1C99.0,32.8 99.9,35.1 99.8,36.1C99.7,37.1 97.9,37.1 97.2,38.2C96.5,39.4 95.7,42.0 95.4,42.8M72.9,52.0C73.4,51.8 75.2,50.5 76.0,50.5C76.9,50.4 77.7,51.5 78.0,51.7M74.9,52.9C75.3,53.3 76.6,55.5 77.2,55.6C77.8,55.6 78.2,53.4 78.4,53.0M90.0,55.2L88.3,63.5M91.6,53.5L89.9,64.1M92.9,53.9L91.2,65.4M95.0,53.9L93.1,65.4M145.4,56.0C145.5,56.8 145.4,59.8 146.0,61.2C146.5,62.6 148.1,63.7 148.5,64.2M185.3,55.2C185.3,53.4 184.9,47.8 185.2,44.4C185.4,40.9 185.0,38.0 186.7,34.5C188.5,31.0 192.2,25.9 195.6,23.3C199.1,20.8 203.9,19.2 207.6,19.2C211.2,19.1 214.8,20.8 217.4,23.0C220.1,25.3 222.4,29.3 223.5,32.9C224.5,36.4 224.0,41.5 223.8,44.4C223.6,47.4 222.7,49.5 222.4,50.6M188.6,28.3C188.1,28.0 186.6,26.3 185.6,26.5C184.6,26.6 182.8,28.2 182.5,29.1C182.2,29.9 182.8,31.2 183.5,31.6C184.3,31.9 186.3,31.3 186.8,31.2M215.5,23.9C215.8,23.6 216.5,22.1 217.1,22.0C217.6,21.9 218.4,23.0 218.7,23.2M192.2,46.2C193.0,45.9 195.7,44.1 197.0,44.3C198.4,44.5 200.0,45.9 200.4,47.3C200.8,48.7 200.3,51.8 199.4,52.9C198.6,54.0 196.4,54.4 195.3,54.0C194.1,53.7 192.9,52.2 192.4,50.8C191.9,49.4 192.4,46.4 192.4,45.5M203.1,45.1C204.4,44.7 208.6,42.7 210.7,42.6C212.8,42.5 215.0,43.4 215.7,44.6C216.3,45.8 216.0,48.8 214.5,50.0C213.1,51.3 209.0,52.1 207.1,52.1C205.2,52.0 204.0,50.9 203.3,49.7C202.6,48.5 203.2,45.7 203.1,44.9M206.0,47.8C206.5,47.6 208.2,46.3 209.3,46.2C210.5,46.2 212.3,47.2 212.9,47.4M207.3,47.9C207.7,48.3 208.9,50.1 209.7,50.0C210.4,49.9 211.3,47.8 211.6,47.4M211.2,62.0C212.3,62.4 216.1,62.7 218.0,64.1C219.9,65.6 220.7,68.4 222.6,70.9C224.5,73.4 228.4,77.8 229.5,79.2M212.4,60.2C213.5,61.1 216.9,63.2 219.3,65.5C221.7,67.9 225.1,72.2 226.7,74.2C228.3,76.2 228.5,76.9 228.9,77.4M266.8,54.6C266.3,53.0 264.0,48.1 263.7,44.8C263.5,41.4 263.8,37.5 265.4,34.3C267.0,31.2 270.2,28.0 273.4,26.0C276.6,24.0 281.0,22.3 284.5,22.5C288.1,22.7 291.9,25.0 294.6,27.2C297.4,29.4 299.7,32.8 301.1,35.8C302.4,38.7 302.6,42.3 302.7,44.8C302.7,47.4 301.5,50.1 301.3,51.1M273.9,50.9C274.4,50.6 275.9,49.1 276.9,49.0C277.8,48.9 279.3,50.1 279.7,50.3M287.9,46.3C288.6,46.1 290.9,45.3 292.1,45.4C293.2,45.5 294.1,46.7 294.5,47.0M286.2,61.5C286.6,61.8 287.5,63.3 288.3,63.5C289.0,63.6 290.4,62.5 290.8,62.3M299.9,67.0C300.3,68.3 301.3,72.2 302.2,74.5C303.0,76.9 304.4,80.1 304.9,81.2M365.6,37.2C366.0,36.2 366.6,32.4 367.8,31.1C368.9,29.8 371.0,29.2 372.5,29.4C374.1,29.6 376.3,30.9 377.1,32.3C378.0,33.7 378.2,36.4 377.6,37.7C377.0,39.0 374.2,39.7 373.6,40.1M353.1,54.9C354.2,54.7 357.0,53.3 359.2,53.5C361.4,53.7 365.1,55.8 366.3,56.2M356.2,71.5L357.3,77.5M363.2,68.8L364.9,75.2M350.9,70.9L352.0,77.6M370.5,80.3L376.0,73.7M368.9,88.9C369.7,89.4 371.8,91.0 373.3,91.8C374.8,92.6 377.3,93.3 378.0,93.7M71.6,83.6C70.6,84.9 67.1,89.2 65.8,91.5C64.4,93.9 63.6,96.1 63.3,97.7C63.0,99.3 63.3,100.7 64.0,101.1C64.8,101.5 67.1,100.2 67.7,100.0M64.9,106.3C64.4,107.9 62.7,112.8 61.8,116.1C60.8,119.3 59.0,122.4 59.1,125.7C59.2,129.1 61.5,132.9 62.6,136.1C63.6,139.3 64.5,142.2 65.3,145.0C66.0,147.8 66.7,151.7 66.9,153.1M87.8,101.3C87.4,103.1 86.6,108.6 85.7,112.1C84.7,115.6 83.1,118.9 82.0,122.5C80.9,126.1 79.3,130.0 79.1,133.6C78.8,137.1 80.0,141.2 80.5,143.7C80.9,146.2 81.5,147.7 81.7,148.6M90.3,96.4C91.8,96.8 96.2,97.2 99.4,99.0C102.5,100.7 105.9,103.7 109.1,107.0C112.2,110.2 115.8,114.4 118.1,118.5C120.4,122.5 122.1,126.9 122.7,131.0C123.3,135.2 122.7,139.8 121.8,143.5C120.8,147.3 117.8,151.7 117.0,153.3M88.0,97.5C88.5,98.3 90.7,100.8 90.9,102.3C91.2,103.7 89.0,103.8 89.4,106.2C89.8,108.5 92.2,113.0 93.3,116.7C94.4,120.3 94.8,124.1 95.8,128.1C96.8,132.0 97.8,136.5 99.3,140.4C100.7,144.2 103.5,149.0 104.7,151.2C105.9,153.4 106.4,153.2 106.7,153.6M157.2,97.4C157.2,99.1 157.1,104.1 157.4,107.9C157.6,111.6 158.2,116.4 158.8,119.9C159.3,123.4 159.7,125.8 160.5,128.6C161.4,131.4 162.8,133.9 163.9,136.8C165.1,139.6 166.9,144.1 167.5,145.5M166.3,97.2C166.5,99.0 167.1,105.0 167.8,108.0C168.5,111.1 169.4,113.2 170.4,115.4C171.3,117.6 172.1,119.3 173.6,121.1C175.0,122.9 177.1,124.5 179.0,126.1C180.9,127.8 184.0,130.2 185.0,131.1M159.1,132.8C159.7,134.3 161.7,138.9 162.7,141.7C163.6,144.4 164.4,148.0 164.7,149.3M168.0,130.4C168.4,131.6 169.5,135.3 170.5,137.3C171.4,139.3 173.1,141.6 173.7,142.4M173.3,142.5C174.4,141.7 177.7,139.5 179.9,137.8C182.2,136.0 185.7,133.0 186.8,132.0M202.2,95.6C202.6,97.2 203.9,102.3 204.9,105.5C205.9,108.6 207.1,111.9 208.1,114.4C209.1,117.0 209.9,119.6 210.9,120.8C212.0,122.0 214.1,121.5 214.7,121.6M210.6,120.6C211.1,121.6 212.4,124.1 213.9,126.6C215.3,129.0 217.6,132.1 219.3,135.3C221.0,138.5 222.8,143.7 224.2,145.8C225.7,147.9 227.2,147.6 227.8,147.9M218.7,133.2C219.4,133.6 221.2,135.8 222.9,135.4C224.6,135.0 227.9,131.7 228.9,131.0M229.7,94.5C230.4,95.7 233.0,99.8 234.1,101.9C235.3,104.0 236.2,106.0 236.6,106.9M239.1,101.5C240.6,101.3 245.0,100.4 247.8,100.0C250.6,99.6 253.9,97.0 255.9,99.1C257.9,101.2 260.0,109.6 259.7,112.5C259.5,115.4 258.2,117.1 254.3,116.6C250.3,116.2 239.6,111.5 236.1,109.8C232.7,108.2 234.0,107.4 233.6,106.9M241.1,101.6L245.7,110.4M243.5,101.5L248.8,111.9M246.7,100.5L251.7,112.7M248.7,100.8L254.0,114.6M265.1,83.3C264.9,84.3 263.9,87.2 264.2,89.2C264.6,91.2 266.0,94.1 267.3,95.3C268.6,96.5 269.6,96.5 272.0,96.3C274.4,96.1 280.2,94.5 281.8,94.2M267.6,96.1C267.6,97.0 267.0,99.8 267.6,101.2C268.2,102.6 270.2,104.4 271.2,104.4C272.3,104.3 273.4,101.5 273.8,100.9M272.7,88.0C274.2,88.5 279.0,89.7 281.8,91.3C284.5,93.0 286.1,96.4 289.0,97.9C292.0,99.4 296.9,100.8 299.5,100.3C302.1,99.7 303.8,95.6 304.7,94.7M275.3,102.5C276.2,104.0 278.5,108.8 280.3,111.5C282.1,114.2 284.5,117.0 286.2,118.6C287.8,120.1 289.6,120.6 290.3,121.0M282.4,96.3C283.4,97.4 286.7,100.9 288.7,102.8C290.7,104.7 293.2,105.7 294.4,107.8C295.7,109.8 296.3,112.8 296.4,115.1C296.5,117.3 295.1,120.4 294.9,121.5M303.4,94.2C304.4,93.9 307.3,93.7 309.3,92.4C311.4,91.1 314.1,87.8 315.8,86.4C317.4,84.9 318.6,84.2 319.2,83.7M300.5,104.7C301.1,106.0 302.8,109.8 304.3,112.4C305.7,114.9 307.6,118.9 309.0,119.8C310.4,120.7 311.7,122.4 312.8,117.6C313.8,112.8 315.0,95.6 315.4,91.2M303.8,83.9C303.7,85.1 302.7,89.1 302.8,91.2C302.8,93.3 303.9,95.6 304.1,96.5M248.9,132.3C250.1,131.6 253.7,129.3 256.5,128.2C259.4,127.2 263.2,126.7 265.9,126.0C268.6,125.4 271.5,124.7 272.7,124.4M279.0,127.3C280.5,128.0 285.1,130.2 288.0,131.7C290.9,133.2 295.9,135.7 296.4,136.4C296.9,137.2 292.0,136.4 291.1,136.4M248.9,132.0C249.2,133.3 250.7,137.4 250.5,139.8C250.4,142.1 249.1,144.3 248.2,146.2C247.4,148.0 245.9,150.0 245.4,150.7M267.9,135.1C267.0,136.3 263.6,139.6 262.5,141.9C261.5,144.2 261.2,147.2 261.4,149.0C261.7,150.9 263.4,152.3 263.8,152.9M271.0,136.5C270.4,137.6 267.7,140.6 267.2,142.9C266.6,145.2 267.8,148.9 268.0,150.1M273.1,135.6C274.1,136.2 278.5,137.6 279.1,139.2C279.8,140.8 277.1,144.2 276.7,145.2M282.2,139.4C283.0,140.0 285.9,141.4 286.9,143.0C288.0,144.6 288.8,147.4 288.4,149.1C288.1,150.9 285.5,152.8 284.9,153.5M291.4,136.4C291.9,137.7 294.1,141.4 294.4,144.1C294.7,146.8 293.2,151.1 293.0,152.6M379.6,83.5L384.4,87.3M361.2,90.4C360.8,91.5 359.6,95.6 358.7,97.4C357.8,99.2 356.1,100.5 355.6,101.1M378.1,87.8C378.7,89.4 380.9,94.3 381.8,97.0C382.8,99.7 383.4,102.8 383.7,104.0M360.9,101.3C361.9,101.5 366.0,101.8 367.1,102.7C368.1,103.7 368.1,106.4 367.1,106.9C366.1,107.4 362.1,106.7 361.0,105.8C359.9,104.9 360.5,102.2 360.4,101.4M356.5,101.4C355.1,102.4 350.8,105.0 347.9,107.2C345.1,109.5 342.6,112.2 339.4,114.8C336.3,117.4 330.8,121.5 329.0,122.8M361.0,108.5C360.7,110.3 359.8,115.6 359.3,119.0C358.8,122.4 358.7,126.0 357.8,128.9C356.9,131.7 355.0,134.3 353.9,136.2C352.8,138.1 351.5,139.6 351.1,140.3M385.5,116.8C384.6,118.4 381.4,123.1 379.9,126.4C378.4,129.7 377.5,133.5 376.3,136.7C375.1,140.0 373.6,143.3 372.7,146.1C371.9,148.9 371.5,152.4 371.2,153.6M352.2,140.4C352.4,141.9 353.2,147.0 353.6,149.1C354.1,151.3 354.6,152.6 354.8,153.3M383.4,104.1C384.5,105.2 387.4,107.6 389.8,110.5C392.2,113.5 395.6,118.0 397.8,121.8C399.9,125.6 401.6,129.6 402.6,133.2C403.6,136.9 403.8,140.4 403.6,143.7C403.4,147.0 401.7,151.4 401.3,153.0M61.7,117.8C61.1,119.2 57.8,122.7 58.3,126.2C58.8,129.8 63.2,135.5 64.5,139.1C65.8,142.6 66.0,146.2 66.3,147.6M83.5,118.0C83.0,119.7 80.7,124.6 80.3,128.5C79.9,132.3 81.0,139.0 81.1,141.1M254.8,143.5C254.7,144.7 253.7,148.2 254.2,150.7C254.6,153.2 255.9,156.3 257.5,158.7C259.1,161.0 261.7,163.2 263.8,164.6C265.9,166.0 267.6,167.0 269.8,167.1C272.1,167.2 274.9,166.4 277.3,165.1C279.7,163.8 282.6,160.9 284.3,159.4C285.9,157.9 286.7,156.7 287.2,156.1M249.1,132.3C249.3,133.7 250.6,138.0 250.2,140.8C249.9,143.6 246.8,148.2 247.0,149.2C247.2,150.2 250.4,146.0 251.4,147.0C252.5,148.1 252.6,153.3 253.3,155.6C254.0,157.9 255.4,159.9 255.8,160.8M286.5,132.8C287.3,134.0 289.9,137.6 291.2,140.2C292.4,142.9 293.2,146.6 294.2,148.5C295.2,150.4 297.3,150.8 297.1,151.4C296.8,152.0 293.2,151.3 292.7,152.0C292.2,152.7 294.7,154.9 294.2,155.6C293.6,156.3 290.2,155.9 289.5,156.0M269.9,136.7C269.0,137.6 265.9,140.1 264.7,142.4C263.5,144.7 262.7,148.2 262.7,150.5C262.8,152.9 264.6,155.7 265.0,156.7M270.4,136.3C271.5,136.6 275.5,136.8 277.0,137.8C278.5,138.7 278.9,141.4 279.3,142.1M262.7,140.5C262.3,141.8 260.1,145.7 259.9,148.3C259.7,150.9 261.1,154.9 261.3,156.2M271.5,155.6C272.1,156.3 273.7,159.3 275.0,159.3C276.3,159.3 278.4,156.3 279.1,155.7M288.1,167.1C288.1,168.4 288.0,172.1 287.7,174.9C287.3,177.6 286.4,182.1 286.1,183.6M289.9,166.0C290.1,167.2 290.4,170.9 291.2,173.3C292.0,175.6 293.2,179.3 294.7,180.1C296.2,181.0 299.3,179.3 300.3,178.4C301.3,177.4 300.7,175.3 300.8,174.7M304.4,177.1C305.2,178.3 308.4,182.1 309.4,184.5C310.4,187.0 310.3,190.5 310.5,191.6M272.4,212.4C273.0,213.4 274.6,217.0 275.8,218.9C277.0,220.8 279.1,222.8 279.7,223.6M329.8,177.4C329.2,177.2 327.3,176.2 326.2,176.1C325.2,175.9 323.9,175.9 323.6,176.5C323.4,177.2 323.8,178.6 324.8,179.8C325.7,181.1 328.8,183.3 329.6,184.0M367.6,153.5C367.8,154.8 368.9,159.1 368.7,161.3C368.6,163.5 367.0,166.0 366.7,167.0M370.5,153.5C370.3,154.5 369.8,157.5 369.2,159.6C368.5,161.6 366.9,164.7 366.4,165.7M348.1,183.6C349.0,182.6 351.4,179.2 353.1,177.8C354.9,176.3 357.3,175.1 358.6,175.0C359.8,175.0 360.8,176.3 360.5,177.5C360.3,178.7 358.7,180.6 357.3,182.0C355.9,183.5 353.1,185.5 352.2,186.2M329.1,178.5C329.8,179.3 332.6,181.8 333.5,183.2C334.4,184.5 334.3,186.2 334.5,186.9M330.4,190.7C331.1,189.9 332.7,186.9 334.5,185.8C336.4,184.6 338.9,184.0 341.6,183.9C344.2,183.9 348.0,184.6 350.5,185.7C353.0,186.7 355.2,188.1 356.5,190.2C357.9,192.4 358.2,195.9 358.4,198.4C358.6,200.9 357.8,204.1 357.7,205.2M332.4,199.8C332.8,201.2 333.1,205.9 334.8,207.8C336.5,209.7 340.2,210.9 342.8,211.2C345.4,211.4 348.1,210.3 350.3,209.2C352.5,208.0 355.1,205.0 356.1,204.2M336.3,212.4C335.9,213.5 334.2,217.2 334.0,219.1C333.9,221.0 334.9,223.1 335.1,223.9M350.9,210.4C351.5,211.3 354.3,213.7 354.6,215.8C355.0,217.8 353.2,221.7 352.9,222.9M372.8,184.8C373.1,185.7 374.5,188.6 374.4,190.2C374.2,191.8 373.2,193.1 372.0,194.2C370.8,195.3 368.1,196.3 367.3,196.8M373.3,184.8C374.5,184.8 378.1,184.3 380.1,184.8C382.1,185.3 384.3,187.2 385.2,187.7M384.5,182.2C385.0,182.9 385.9,185.8 387.3,186.7C388.6,187.6 391.8,187.4 392.7,187.5M392.0,188.2C392.9,187.4 396.3,183.5 397.5,183.7C398.7,183.8 398.7,187.5 399.0,189.0C399.4,190.4 399.7,191.8 399.8,192.3M401.3,192.1C401.8,192.5 404.3,194.1 404.5,195.0C404.6,196.0 402.1,196.6 402.2,197.8C402.3,199.0 404.9,201.3 405.0,202.3C405.1,203.3 403.2,203.7 402.8,204.0M387.0,215.2C386.6,216.0 385.5,218.6 384.7,220.0C383.9,221.4 382.5,222.9 382.1,223.5M395.0,212.5C395.2,213.4 396.5,216.3 396.5,217.9C396.5,219.5 395.2,221.6 394.9,222.4M396.7,212.1C397.7,212.5 401.1,214.4 402.8,214.6C404.5,214.8 406.1,213.5 406.8,213.3M394.8,215.5C395.7,215.9 398.4,217.6 399.9,218.2C401.5,218.8 403.6,218.9 404.3,219.1M266.9,223.3C269.0,224.4 275.1,227.8 279.2,230.0C283.4,232.1 287.2,233.5 291.8,236.2C296.4,238.8 304.1,244.4 306.6,246.0M274.8,222.6C275.5,223.6 277.1,227.2 278.9,228.4C280.6,229.6 284.3,229.5 285.4,229.7M279.2,223.3C280.8,224.3 285.3,226.9 288.6,228.8C292.0,230.8 296.0,232.1 299.2,234.8C302.3,237.6 306.0,246.0 307.7,245.3C309.4,244.7 310.7,234.2 309.2,231.0C307.8,227.7 301.6,227.2 299.1,226.0C296.5,224.8 294.8,224.1 293.9,223.7M322.7,244.6C323.2,244.5 325.7,243.2 325.9,243.7C326.2,244.2 323.8,246.6 324.3,247.5C324.7,248.5 328.0,249.1 328.7,249.4M341.7,231.0C341.6,232.0 340.1,234.8 340.9,236.7C341.8,238.5 344.8,241.1 346.7,242.2C348.6,243.2 351.4,243.6 352.4,243.0C353.4,242.4 353.3,240.5 353.0,238.6C352.6,236.7 350.9,233.2 350.1,231.7C349.4,230.2 348.6,229.9 348.2,229.5M353.6,226.7C354.4,226.2 356.5,223.8 358.2,223.9C359.9,224.1 363.0,226.4 363.8,227.7C364.5,229.0 364.0,231.3 362.6,231.8C361.2,232.4 356.7,231.3 355.5,231.1M367.3,225.6C367.8,225.4 369.3,224.2 370.5,224.4C371.7,224.6 373.2,225.2 374.4,226.8C375.7,228.3 377.5,232.4 378.1,233.6M379.4,222.9C379.5,223.7 379.2,226.3 380.1,227.6C381.1,228.9 383.2,230.3 385.2,230.5C387.1,230.7 390.2,230.2 391.8,228.9C393.3,227.7 394.1,223.8 394.6,222.7M335.2,251.8C335.9,251.1 337.7,248.5 339.7,247.6C341.7,246.7 345.0,246.4 347.3,246.4C349.7,246.4 351.9,246.7 353.8,247.8C355.6,248.9 357.7,252.2 358.5,253.1M335.0,255.5C334.9,256.5 334.1,259.5 334.3,261.6C334.5,263.7 335.1,266.5 336.2,268.1C337.3,269.7 339.1,270.7 340.9,271.1C342.7,271.4 346.1,270.4 347.1,270.3M329.1,251.9C329.5,251.6 330.6,250.3 331.5,250.5C332.5,250.7 334.7,252.6 334.8,253.4C335.0,254.1 333.0,254.7 332.7,254.9M354.1,248.8C354.5,248.5 356.0,247.1 356.6,247.2C357.2,247.3 357.4,248.6 357.7,249.4C357.9,250.1 357.9,251.3 357.9,251.7M359.1,253.2C359.9,253.3 362.5,254.0 364.3,253.9C366.0,253.8 368.7,252.9 369.6,252.7M360.4,258.9C361.4,259.4 364.3,261.0 366.4,261.6C368.6,262.2 371.4,262.6 373.2,262.3C375.0,261.9 376.6,260.1 377.2,259.6M372.9,252.1C373.4,253.0 375.5,255.9 376.2,257.7C376.9,259.5 377.0,262.0 377.1,262.8M220.2,117.8C221.3,119.1 224.3,123.8 226.7,125.9C229.0,128.1 233.1,130.0 234.4,130.8M216.7,120.9C217.1,122.0 218.0,126.9 219.3,127.7C220.6,128.5 223.6,126.2 224.4,125.9M282.5,104.1C283.4,105.4 286.2,109.8 287.6,112.1C289.0,114.3 290.4,116.8 290.9,117.8M282.2,213.9C284.8,213.6 292.3,212.5 297.4,212.0C302.5,211.4 310.2,210.9 312.8,210.7M284.9,224.0C286.5,224.2 291.8,224.9 294.5,225.4C297.1,225.8 299.7,226.4 300.7,226.6M301.5,229.6C301.5,230.9 301.9,235.0 301.6,237.1C301.3,239.2 300.0,241.3 299.6,242.1M310.0,230.9C310.1,232.2 310.0,236.1 310.4,238.6C310.9,241.2 312.4,245.0 312.8,246.2M126.1,55.0C126.5,55.2 128.0,56.4 128.8,56.3C129.6,56.2 130.5,54.6 130.8,54.3M62.7,31.8L60.7,38.4"/>
<path style="stroke-width:calc(var(--k,1)*0.84px)" stroke-opacity="0.55" d="M66.9,63.6C67.4,63.8 68.6,64.4 69.5,64.4C70.3,64.4 71.5,63.8 72.0,63.6M172.6,68.4C172.9,67.4 173.6,63.6 174.5,62.1C175.3,60.7 176.9,59.0 177.6,59.6C178.3,60.3 178.5,63.6 178.9,65.9C179.2,68.2 179.2,70.5 179.5,73.4C179.8,76.3 180.5,81.6 180.7,83.2M315.9,45.2C316.1,46.8 317.4,52.0 317.4,54.6C317.4,57.2 316.1,59.8 315.9,60.9M322.1,58.4C322.6,60.0 324.1,65.1 324.7,68.4C325.2,71.8 325.2,76.8 325.3,78.4M170.7,98.3C172.0,97.8 176.1,97.2 178.2,95.7C180.3,94.3 182.4,90.5 183.3,89.5M363.2,114.6C364.4,115.0 368.0,117.1 370.7,117.1C373.4,117.1 378.0,115.0 379.5,114.6M319.5,208.3C319.9,209.3 321.0,211.8 322.0,214.6C323.1,217.3 325.2,222.9 325.8,224.6"/>
<path style="stroke-width:calc(var(--k,1)*0.86px)" d="M42.2,32.0C41.9,31.9 40.8,31.3 40.4,31.5C39.9,31.8 39.6,32.6 39.6,33.5C39.5,34.3 40.1,35.6 39.9,36.5C39.8,37.4 39.0,38.1 38.6,38.7C38.3,39.2 38.1,39.6 38.0,39.8M144.0,49.6C144.4,49.0 145.2,46.6 146.0,46.2C146.8,45.7 148.3,46.3 149.0,47.2C149.6,48.2 150.4,50.4 150.1,51.9C149.8,53.4 147.9,56.0 147.1,56.3C146.3,56.6 145.8,54.7 145.2,53.5C144.6,52.4 143.8,50.1 143.5,49.4M214.7,24.3C215.2,23.9 216.5,21.8 217.3,21.6C218.1,21.3 219.4,22.1 219.6,22.8C219.9,23.6 219.0,25.7 218.9,26.2M203.5,60.9C204.0,61.4 205.1,63.4 206.4,63.5C207.7,63.6 210.6,61.7 211.4,61.3M205.1,62.5C205.6,62.9 206.9,64.7 207.9,64.8C208.8,64.8 210.3,63.1 210.8,62.7M229.9,29.2C231.6,28.9 236.8,27.3 240.2,27.4C243.6,27.5 247.3,27.9 250.2,29.9C253.0,31.9 256.1,35.9 257.3,39.3C258.4,42.7 258.1,46.8 257.3,50.3C256.5,53.8 254.5,58.1 252.3,60.6C250.1,63.2 246.9,64.8 244.0,65.6C241.1,66.3 237.3,65.9 234.9,65.3C232.5,64.6 230.6,62.1 229.8,61.5M228.9,49.3C229.8,48.7 232.3,46.3 234.1,45.8C236.0,45.3 238.3,45.3 239.9,46.3C241.5,47.3 243.3,50.1 243.6,51.9C243.8,53.7 242.4,56.1 241.5,57.0C240.5,58.0 238.3,57.5 237.7,57.5M344.3,61.1C345.1,61.0 347.6,60.0 349.1,60.1C350.6,60.1 352.7,61.2 353.4,61.5M372.9,70.3C373.9,70.7 377.1,70.7 378.9,72.5C380.7,74.3 382.6,78.7 383.7,81.2C384.8,83.8 385.1,86.8 385.4,87.9M370.4,79.0C371.5,79.9 374.9,83.2 377.0,84.3C379.1,85.5 381.9,85.6 382.8,85.9M70.9,146.5C71.9,146.2 75.4,144.0 76.9,144.2C78.3,144.4 78.4,147.4 79.7,147.8C81.0,148.2 83.9,146.9 84.7,146.7M141.2,98.5C141.7,100.3 142.9,105.4 144.0,109.0C145.0,112.6 146.8,116.4 147.7,120.1C148.5,123.8 148.8,128.1 149.2,131.2C149.6,134.4 149.8,135.8 150.3,138.8C150.9,141.8 152.1,146.7 152.5,149.1C152.9,151.6 152.7,152.8 152.7,153.5M200.3,89.7C201.7,90.0 205.9,91.6 208.8,91.6C211.6,91.7 214.9,90.7 217.5,90.0C220.1,89.4 223.3,88.1 224.5,87.7M218.5,126.9C218.9,127.4 219.9,129.6 220.6,129.7C221.3,129.9 222.0,127.7 222.6,127.9C223.2,128.1 224.0,130.3 224.3,130.7M230.0,107.1C230.9,107.4 234.1,108.1 235.4,108.6C236.7,109.2 237.3,110.1 237.7,110.4M229.0,133.2C229.6,134.3 232.0,137.1 232.4,139.6C232.8,142.1 231.7,146.8 231.6,148.3M304.8,97.3L310.0,108.8M307.6,96.1L311.7,106.6M311.0,94.4L313.7,101.6M271.6,121.2C272.2,121.0 274.2,119.7 275.4,119.9C276.7,120.2 278.7,121.3 279.0,122.5C279.3,123.6 278.3,126.2 277.4,126.8C276.5,127.4 274.6,127.1 273.6,126.3C272.5,125.4 271.5,122.4 271.1,121.6M328.4,119.6C327.3,120.6 324.4,123.2 321.5,125.5C318.7,127.7 314.3,131.0 311.2,133.2C308.2,135.3 304.9,137.1 303.2,138.4C301.6,139.7 299.2,139.5 301.4,140.8C303.6,142.1 313.1,145.7 316.5,146.2C319.8,146.6 319.5,145.2 321.5,143.6C323.6,141.9 327.5,137.4 328.7,136.1M353.5,82.8L357.6,89.4M359.6,83.7L363.2,90.4M364.5,83.1L368.8,90.8M66.8,147.6C66.4,149.9 65.5,157.1 64.5,161.5C63.6,166.0 60.1,172.4 60.8,174.3C61.6,176.2 65.5,174.7 68.9,172.8C72.3,171.0 77.4,166.9 81.4,163.3C85.4,159.7 91.9,154.2 92.9,151.3C93.9,148.4 89.2,147.0 87.2,145.8C85.2,144.6 81.8,144.4 80.7,144.1M95.9,117.6C96.7,121.1 98.9,133.1 100.8,138.7C102.7,144.3 104.6,148.6 107.3,151.2C109.9,153.7 114.0,154.7 116.6,154.0C119.2,153.4 121.6,150.3 122.9,147.2C124.1,144.2 124.3,140.4 124.1,135.5C123.8,130.6 121.7,120.8 121.3,117.9M146.6,118.3C147.1,120.6 148.5,127.0 149.5,132.0C150.5,137.0 151.8,143.6 152.7,148.4C153.6,153.2 153.5,159.5 154.9,160.7C156.4,161.9 158.5,158.1 161.3,155.7C164.1,153.2 169.2,148.4 171.7,146.0C174.1,143.7 175.2,142.2 175.9,141.4M165.1,125.5C166.3,127.6 170.8,135.5 172.5,138.2C174.3,140.8 175.1,140.8 175.6,141.4M172.2,118.3C172.7,119.8 173.6,124.2 175.3,127.1C177.0,130.1 180.7,135.4 182.5,136.1C184.3,136.8 186.6,134.0 186.0,131.1C185.4,128.2 180.0,120.8 178.8,118.7M281.4,143.5C281.7,143.0 282.4,141.2 283.3,140.8C284.1,140.4 285.6,140.4 286.4,141.2C287.1,142.1 287.9,144.4 287.8,146.1C287.7,147.8 286.6,150.5 285.7,151.6C284.9,152.7 283.2,152.6 282.6,152.8M269.5,148.5C270.1,148.3 272.0,147.3 273.2,147.4C274.4,147.6 276.3,149.2 276.9,149.5M270.5,154.4C271.1,154.8 272.8,156.8 274.3,156.8C275.8,156.9 278.2,155.3 279.4,154.6C280.6,153.9 281.2,152.8 281.5,152.4M287.7,155.0C288.5,155.8 290.4,158.3 292.2,159.9C293.9,161.5 296.2,163.0 298.2,164.8C300.1,166.5 302.8,169.5 303.7,170.4M294.0,164.4C295.1,165.4 298.7,168.1 300.4,170.2C302.0,172.4 303.5,176.1 304.1,177.2M300.4,171.1C300.9,172.4 302.6,175.9 303.6,178.5C304.7,181.1 306.6,184.6 306.7,186.7C306.8,188.8 305.3,190.6 304.1,191.2C302.9,191.7 300.1,190.1 299.2,189.9M288.1,187.1C287.3,188.3 285.1,191.8 283.6,194.4C282.0,197.0 280.4,199.9 278.8,202.8C277.1,205.8 274.9,209.6 273.6,212.2C272.4,214.7 270.9,216.6 271.1,218.2C271.3,219.8 274.1,221.3 274.7,222.0M311.1,192.0C310.6,193.2 309.3,197.1 308.0,199.4C306.6,201.6 305.2,203.7 303.0,205.7C300.7,207.6 296.1,210.2 294.7,211.1M281.4,210.4C283.2,210.1 288.2,209.1 292.1,208.7C296.0,208.2 300.5,207.9 304.7,207.6C308.9,207.3 314.6,205.9 317.5,206.8C320.3,207.6 320.5,210.3 321.8,212.4C323.0,214.6 324.4,218.5 325.0,219.7M281.9,218.1C284.0,218.0 290.4,217.5 294.6,217.1C298.7,216.8 302.9,216.2 306.7,216.0C310.5,215.8 315.6,215.8 317.4,215.7M274.4,216.6C275.2,217.1 277.5,219.2 279.3,219.6C281.1,219.9 284.4,218.8 285.5,218.7M309.6,179.1C309.5,177.6 308.8,172.8 309.0,170.1C309.1,167.4 309.5,165.0 310.6,162.8C311.7,160.5 313.6,157.8 315.4,156.7C317.3,155.5 319.6,155.3 321.6,155.7C323.5,156.1 326.1,157.8 327.2,159.1C328.4,160.4 328.4,162.6 328.2,163.5C328.1,164.4 327.1,165.1 326.5,164.7C326.0,164.3 325.8,161.9 324.8,160.9C323.9,159.9 322.2,158.8 320.8,158.7C319.3,158.7 317.6,159.5 316.2,160.8C314.9,162.1 313.4,164.4 312.8,166.6C312.2,168.8 312.4,171.3 312.6,174.0C312.9,176.7 314.2,179.8 314.3,182.8C314.4,185.7 313.9,189.4 313.3,191.5C312.7,193.5 311.3,194.4 310.8,194.9M352.1,153.7C351.7,154.9 350.5,158.2 349.6,161.0C348.7,163.9 346.2,169.4 346.7,170.8C347.1,172.2 349.5,170.4 352.1,169.4C354.6,168.5 359.8,166.4 362.0,165.1C364.2,163.7 364.5,163.2 365.2,161.3C366.0,159.4 366.4,155.0 366.6,153.8M375.2,153.3C375.4,154.6 375.5,158.5 376.4,161.3C377.2,164.1 378.6,167.6 380.0,170.0C381.5,172.4 383.0,175.1 385.1,175.7C387.1,176.4 389.8,175.4 392.2,173.7C394.6,172.1 397.6,168.6 399.6,165.8C401.6,163.0 403.1,159.2 403.9,157.1C404.7,155.0 404.2,153.8 404.3,153.2M329.7,200.8C330.3,201.1 332.4,201.5 333.2,202.3C334.0,203.2 334.8,205.0 334.6,205.9C334.5,206.9 333.2,207.6 332.3,207.8C331.5,208.1 329.9,207.4 329.4,207.3M353.3,213.6C353.9,213.4 356.2,211.9 357.4,212.2C358.5,212.5 360.0,214.2 360.1,215.4C360.2,216.7 358.9,219.1 358.0,219.6C357.1,220.1 355.4,219.6 354.5,218.6C353.6,217.5 352.9,214.2 352.6,213.3M365.1,204.0C365.5,203.6 366.3,201.9 367.2,201.5C368.1,201.1 369.9,200.7 370.7,201.5C371.4,202.3 372.2,205.2 371.7,206.4C371.3,207.5 369.3,208.5 368.2,208.6C367.2,208.6 366.1,207.6 365.6,206.7C365.1,205.9 365.3,204.1 365.2,203.6M373.4,194.2C373.1,195.5 371.4,199.7 371.5,202.1C371.7,204.4 373.1,206.4 374.4,208.3C375.7,210.2 377.3,212.5 379.4,213.5C381.5,214.4 384.6,214.3 387.1,214.0C389.6,213.7 392.2,213.3 394.5,211.9C396.8,210.5 399.6,207.5 400.9,205.7C402.2,203.8 401.9,201.5 402.1,200.7M387.9,202.9C388.0,203.6 387.9,206.2 388.5,207.0C389.0,207.8 390.3,208.0 390.9,207.5C391.6,206.9 392.2,204.5 392.4,203.9M376.4,208.3C376.8,208.7 377.8,210.7 378.4,210.8C379.0,210.9 379.4,208.5 380.1,208.8C380.8,209.1 381.9,212.4 382.6,212.6C383.3,212.7 383.6,209.6 384.2,209.8C384.8,210.0 385.8,213.1 386.1,213.8M403.7,213.6C404.2,213.3 405.7,211.9 406.8,212.0C408.0,212.1 409.7,213.0 410.4,214.1C411.0,215.2 411.3,217.3 410.9,218.5C410.4,219.6 409.0,220.8 407.8,220.9C406.6,221.1 404.5,220.4 403.8,219.3C403.0,218.1 403.4,214.9 403.3,214.0M328.6,225.3C329.5,225.8 332.2,228.1 334.0,228.3C335.8,228.6 337.5,226.9 339.4,226.8C341.3,226.7 343.2,228.2 345.3,227.7C347.3,227.3 350.6,224.6 351.7,223.9M347.7,263.0C348.1,262.9 349.4,262.7 350.1,262.7C350.8,262.8 351.9,263.3 352.2,263.4M360.0,265.0C360.9,265.4 363.6,266.9 365.6,267.2C367.7,267.5 370.5,267.6 372.3,267.0C374.1,266.3 375.8,263.9 376.5,263.3M378.0,256.4C379.4,256.1 383.3,254.8 386.1,254.8C388.9,254.7 393.9,255.3 394.9,256.0C395.9,256.7 393.9,258.4 392.0,259.1C390.0,259.7 385.4,260.4 383.1,259.9C380.8,259.4 379.1,256.6 378.3,256.0M379.8,262.0C381.1,262.2 385.1,262.8 387.8,262.9C390.5,263.1 394.8,262.2 396.0,262.9C397.2,263.5 396.3,266.0 394.8,267.0C393.2,267.9 388.9,268.5 386.7,268.5C384.4,268.6 382.4,268.2 381.3,267.2C380.2,266.1 380.2,263.1 380.0,262.3M267.3,99.0C268.0,99.6 269.8,102.4 271.1,102.7C272.4,103.0 274.7,101.0 275.4,100.7M277.8,219.4C279.8,219.7 285.6,220.9 289.9,221.1C294.2,221.3 299.6,220.8 303.7,220.6C307.8,220.5 312.5,220.2 314.3,220.1M272.1,214.1C273.0,216.0 275.3,222.2 277.4,225.3C279.6,228.4 282.1,230.4 284.9,232.7C287.7,235.0 292.8,238.1 294.4,239.1M295.8,209.0C297.3,207.7 302.0,204.0 304.7,201.1C307.4,198.1 310.1,194.1 311.8,191.2C313.5,188.4 314.3,185.2 314.8,183.9M59.3,33.1C59.0,34.2 57.9,37.9 57.3,40.0C56.7,42.1 56.1,44.7 55.9,45.7M61.6,34.1L60.0,39.8M58.5,51.1C58.9,52.1 60.3,55.8 60.5,56.9C60.7,58.0 59.7,57.7 59.6,57.9M56.9,51.3L58.2,55.6"/>
<path style="stroke-width:calc(var(--k,1)*0.92px)" d="M210.6,38.4C210.8,38.9 211.1,40.5 212.0,41.3C212.9,42.0 215.2,42.6 215.9,42.9M354.5,59.7C355.3,59.6 357.4,58.9 359.1,58.9C360.7,59.0 363.6,59.8 364.5,59.9M346.2,61.9C346.6,62.0 347.8,62.6 348.7,62.6C349.5,62.5 350.9,61.7 351.4,61.5M342.6,65.2C343.5,64.9 346.3,63.1 347.8,63.4C349.4,63.7 351.4,66.0 351.7,67.2C352.0,68.3 350.7,70.0 349.4,70.2C348.2,70.4 345.3,69.3 344.2,68.3C343.1,67.4 343.1,65.2 342.9,64.5M345.6,73.6C346.5,74.4 349.1,78.0 351.0,78.6C353.0,79.1 355.1,77.6 357.4,77.0C359.7,76.3 362.8,75.6 364.8,74.5C366.9,73.5 368.9,71.5 369.7,70.9M349.0,77.8C350.0,79.5 352.9,85.3 354.6,87.9C356.2,90.5 358.2,92.4 359.0,93.3M66.9,101.7C68.1,102.1 71.2,103.7 73.8,103.8C76.5,103.8 80.5,102.9 83.0,101.9C85.5,101.0 87.9,98.7 88.8,98.1M380.1,142.8L384.3,138.5M378.2,148.3L388.1,136.8M381.9,151.5L393.2,136.0M386.8,152.4L397.8,134.7M392.9,152.1L401.5,138.1M298.1,184.1L305.0,189.9M300.0,182.5L306.7,188.4M307.3,191.1C306.9,192.4 306.2,196.6 304.9,198.9C303.6,201.2 301.7,202.9 299.6,204.8C297.4,206.8 294.7,209.2 292.1,210.4C289.5,211.7 285.7,211.7 283.9,212.3C282.1,212.9 281.8,213.7 281.4,214.0M338.5,201.2C338.8,201.1 339.7,200.5 340.4,200.6C341.0,200.6 342.1,201.3 342.4,201.4M348.3,203.1C348.7,202.7 350.1,201.1 350.9,201.0C351.6,201.0 352.4,202.6 352.7,202.9M377.0,204.1C377.4,204.0 378.8,203.1 379.6,203.2C380.3,203.4 381.2,204.6 381.5,204.8M355.1,260.2C355.6,260.0 357.1,259.0 357.8,259.2C358.4,259.5 359.1,260.8 358.9,261.7C358.8,262.6 357.7,264.4 357.1,264.6C356.4,264.8 355.6,263.6 355.2,263.0C354.8,262.4 354.7,261.2 354.6,260.8M365.9,250.6C366.2,250.0 366.7,247.6 367.6,247.0C368.5,246.3 370.3,246.4 371.2,246.8C372.1,247.2 373.1,248.5 373.1,249.4C373.0,250.3 371.9,251.9 370.9,252.3C370.0,252.8 368.1,252.5 367.2,252.2C366.3,251.8 365.9,250.7 365.6,250.3M263.7,83.4C265.1,83.3 269.3,82.1 271.9,82.6C274.4,83.0 276.2,84.3 279.1,86.1C282.0,87.9 286.8,91.5 289.2,93.4C291.7,95.3 293.0,96.8 293.7,97.5M286.0,192.2C285.3,193.5 283.5,196.9 282.0,199.6C280.5,202.2 278.2,205.8 276.8,208.1C275.3,210.5 273.9,212.7 273.4,213.6M292.0,205.1C293.5,203.9 298.3,200.4 300.9,198.1C303.4,195.8 305.7,193.8 307.2,191.3C308.7,188.9 309.4,184.6 309.8,183.3"/>
<path style="stroke-width:calc(var(--k,1)*0.96px)" d="M57.9,29.3C57.4,29.7 55.7,31.1 55.0,32.0C54.3,32.9 54.0,34.1 53.8,34.5M68.9,55.9C69.1,56.3 69.8,58.1 69.7,58.6C69.6,59.2 68.7,59.0 68.4,59.1M115.9,34.8C116.9,34.8 119.9,35.2 122.1,35.2C124.4,35.1 128.1,34.4 129.3,34.3M115.9,34.8C116.3,36.0 117.8,40.2 118.6,42.1C119.5,43.9 120.5,45.4 120.9,46.1M151.9,65.9C152.5,67.2 154.5,70.5 155.6,73.4C156.8,76.3 158.3,81.6 158.8,83.2M203.3,54.6L204.6,55.6M351.9,44.6C352.6,44.8 354.8,46.0 356.3,46.1C357.7,46.2 359.9,45.3 360.7,45.2M335.6,83.2L341.8,79.7M73.2,110.2L72.6,114.6"/>
<path style="stroke-width:calc(var(--k,1)*0.99px)" d="M346.1,70.8C347.1,70.3 350.1,68.4 352.2,68.2C354.2,68.0 356.2,69.8 358.5,69.6C360.9,69.4 364.1,68.0 366.2,67.0C368.3,66.1 370.5,64.4 371.3,63.8M67.1,132.0C67.2,133.7 67.7,139.4 68.0,142.6C68.3,145.9 68.6,150.1 68.7,151.6M154.2,135.0C154.5,135.7 155.6,138.8 156.1,139.1C156.6,139.4 156.6,136.6 157.0,137.0C157.5,137.4 158.4,141.2 158.8,141.5C159.2,141.9 159.4,138.6 159.6,139.0C159.9,139.4 161.1,142.5 160.5,143.8C159.9,145.2 156.7,146.4 155.9,146.9M170.6,128.0C171.0,128.5 172.6,130.6 173.2,130.7C173.8,130.8 173.8,128.2 174.2,128.5C174.6,128.7 175.3,132.0 175.7,132.2C176.1,132.3 176.2,129.1 176.7,129.3C177.2,129.5 178.3,132.6 178.6,133.2M222.1,95.5L229.5,102.2M290.6,225.9C291.0,226.5 292.4,229.0 293.0,229.2C293.6,229.4 293.5,226.7 294.1,226.9C294.7,227.1 295.9,230.2 296.6,230.5C297.3,230.8 298.0,229.0 298.3,228.7M198.5,87.9C200.4,88.1 206.2,89.9 210.0,89.5C213.7,89.2 219.4,86.4 221.3,85.8M201.7,68.7C201.4,70.3 200.7,75.2 200.4,78.5C200.1,81.7 200.0,86.6 199.9,88.2"/>
<path style="stroke-width:calc(var(--k,1)*1.06px)" d="M37.1,40.1C37.2,40.2 37.7,41.0 38.0,40.9C38.4,40.8 38.9,39.9 39.0,39.7M329.1,38.3C328.7,38.7 326.9,39.5 326.6,40.4C326.2,41.3 326.7,43.1 327.1,43.9C327.4,44.8 328.4,45.3 328.7,45.5M356.7,60.7C357.1,60.8 358.4,61.5 359.2,61.6C360.1,61.7 361.3,61.3 361.7,61.2M229.0,125.9C229.5,126.7 230.9,129.2 232.2,131.0C233.5,132.8 236.3,134.7 236.6,137.0C236.9,139.3 234.8,142.7 234.0,144.8C233.1,146.9 231.9,148.7 231.5,149.5M357.2,100.9C358.3,101.0 361.4,100.8 363.9,101.6C366.4,102.3 369.7,104.4 372.3,105.3C375.0,106.1 377.7,106.7 379.7,106.7C381.6,106.7 383.3,105.5 384.0,105.3M360.3,116.1C358.6,116.9 353.6,119.2 350.2,121.0C346.8,122.9 343.2,124.9 339.9,127.4C336.5,130.0 331.9,134.6 330.3,136.1M359.9,111.9C359.9,114.1 360.1,121.4 359.9,125.0C359.8,128.6 359.3,132.2 359.1,133.6M284.9,212.9C286.6,212.8 292.5,212.6 295.0,212.2C297.6,211.8 299.2,210.8 300.0,210.5M384.8,203.6C385.6,203.4 388.1,202.2 389.4,202.3C390.6,202.4 391.9,203.9 392.4,204.2M349.2,267.0C349.6,266.6 350.6,264.9 351.5,264.7C352.4,264.5 353.9,265.0 354.5,265.8C355.0,266.6 355.1,268.9 354.7,269.7C354.3,270.6 352.8,271.0 351.9,270.9C351.1,270.8 349.9,269.6 349.4,269.0C348.9,268.3 348.9,267.2 348.8,266.9M219.9,67.3C221.2,68.6 225.7,72.3 227.8,75.1C229.9,77.9 231.8,82.6 232.6,84.1M241.8,101.8L244.1,110.0M244.6,101.6L247.8,111.6M247.3,100.9L250.6,111.4M279.2,68.6C279.5,69.8 280.8,73.0 281.3,75.5C281.9,78.0 282.2,82.3 282.4,83.7M296.6,183.2C297.2,184.0 298.8,187.3 300.5,188.3C302.1,189.2 305.1,189.4 306.5,189.0C307.8,188.6 308.4,186.3 308.8,185.8M298.3,184.4C299.1,184.9 301.8,187.2 303.4,187.4C304.9,187.7 307.0,186.3 307.7,186.0"/>
<path style="stroke-width:calc(var(--k,1)*1.08px)" d="M63.8,35.8C63.5,36.5 62.5,38.7 62.2,40.2C61.8,41.6 61.8,43.8 61.7,44.6M52.1,50.8C52.1,51.4 51.3,53.2 51.6,54.0C52.0,54.7 53.9,55.0 54.4,55.2M72.0,34.5C71.8,35.7 71.1,39.5 70.7,41.4C70.3,43.4 69.9,45.3 69.7,46.1M77.2,37.0C77.6,38.1 79.2,41.4 79.5,43.3C79.8,45.2 79.0,47.5 78.9,48.3M84.0,50.8C84.1,51.5 84.2,54.4 84.5,54.6C84.8,54.9 85.8,52.7 86.0,52.3M59.4,48.3C60.0,48.2 61.8,47.4 62.9,47.3C64.0,47.3 65.4,48.0 65.9,48.1M72.0,47.7C72.7,47.6 75.0,46.8 76.4,46.8C77.7,46.9 79.5,47.9 80.1,48.1M92.0,42.7C92.5,43.6 94.0,46.7 94.5,48.3C95.1,49.9 95.4,51.7 95.5,52.3M86.4,63.4C86.7,64.9 86.9,70.3 88.3,72.2C89.6,74.1 93.5,74.3 94.5,74.7M80.7,72.2C80.6,73.2 80.0,76.6 80.1,78.4C80.2,80.3 81.2,82.4 81.4,83.2M120.6,50.8C120.9,51.8 121.5,55.0 122.1,56.5C122.8,58.0 124.2,59.1 124.7,59.6M146.9,26.8C147.5,26.1 149.8,23.6 150.9,22.6C152.0,21.6 152.8,20.3 153.4,20.7C153.9,21.1 153.9,23.8 154.1,25.1C154.4,26.5 154.6,28.3 154.6,28.9M129.3,50.8C129.7,51.7 131.7,54.4 131.8,55.9C131.9,57.3 130.2,59.0 129.9,59.6M133.1,33.3C133.7,34.5 135.4,38.5 136.8,40.8C138.3,43.1 141.0,46.0 141.8,47.1M156.3,59.0C156.1,59.6 155.8,62.4 155.0,62.8C154.3,63.1 152.4,61.2 151.9,60.9M145.6,64.0C145.4,65.4 145.0,69.0 144.4,72.2C143.7,75.4 142.3,81.4 141.8,83.2M219.0,52.7C218.8,53.2 218.3,55.5 217.8,55.9C217.2,56.2 216.2,54.8 215.9,54.6M188.3,63.4C188.9,63.3 191.0,62.3 192.0,62.8C193.1,63.2 194.1,65.4 194.5,65.9M207.1,65.9C207.5,67.6 208.8,73.0 209.6,75.9C210.4,78.8 211.7,82.0 212.1,83.2M229.3,33.3C228.8,33.9 227.2,35.6 226.5,37.0C225.9,38.5 225.5,41.2 225.3,42.1M229.3,28.0C230.6,27.7 234.3,26.4 236.8,26.4C239.3,26.3 243.1,27.4 244.4,27.6M288.3,39.5C289.0,39.9 291.4,41.0 292.7,41.8C293.9,42.6 295.3,44.1 295.8,44.6M282.0,33.3C282.6,34.1 284.1,37.1 285.8,38.3C287.4,39.4 291.0,39.9 292.0,40.2M262.2,60.6L264.7,61.3M262.5,62.8L265.1,63.4M263.2,64.6L265.1,65.1M288.3,64.6C288.7,66.1 290.2,70.3 290.8,73.4C291.4,76.5 291.8,81.6 292.0,83.2M279.5,72.2C279.8,72.8 281.0,74.5 281.4,75.9C281.8,77.4 281.9,80.1 282.0,81.0M307.1,81.0C307.9,80.4 310.4,78.2 312.1,77.8C313.8,77.4 316.3,78.3 317.1,78.4M336.8,50.8C336.6,52.1 335.4,56.1 335.6,58.4C335.8,60.7 337.7,63.6 338.1,64.6M360.7,50.8C360.9,51.7 362.0,54.6 362.2,55.9C362.3,57.2 361.5,58.2 361.4,58.6M377.0,74.7L379.5,81.0M334.3,71.5L338.8,81.7M332.4,78.4L340.6,74.7M97.7,103.3C97.6,104.1 97.6,106.7 97.1,108.3C96.5,109.9 95.0,112.1 94.5,112.8M105.8,110.2C105.6,111.3 105.6,115.1 104.6,117.1C103.5,119.1 100.4,121.4 99.6,122.2M113.4,119.6C112.9,121.1 112.5,125.8 110.9,128.4C109.2,130.9 104.6,133.7 103.3,134.8M119.1,129.6C118.6,131.1 117.9,135.9 115.9,138.4C113.9,140.9 108.6,143.7 107.1,144.8M122.1,140.9C121.3,142.2 119.0,146.4 117.1,148.4C115.2,150.5 111.9,152.4 110.9,153.2M160.7,83.2L160.2,88.2M172.0,138.4C173.1,137.7 176.9,135.4 178.9,134.0C180.8,132.7 183.0,130.9 183.9,130.3M236.8,112.3C238.1,112.9 241.8,114.7 244.4,115.8C246.9,117.0 250.6,118.5 251.9,119.1M290.8,190.8L292.0,197.1M382.0,176.5C383.3,176.4 387.0,176.5 389.5,175.8C392.0,175.0 395.8,172.6 397.1,172.0M345.6,207.2L348.1,208.4M336.8,254.6C337.0,255.6 337.5,259.0 338.1,260.8C338.7,262.7 340.2,265.0 340.6,265.9M237.0,110.9C238.2,111.5 242.2,113.4 244.5,114.6C246.8,115.9 249.7,117.8 250.8,118.4M136.9,30.8C136.5,32.1 134.4,35.8 134.4,38.3C134.4,40.8 135.7,43.8 136.9,45.9C138.2,48.0 141.1,50.0 142.0,50.9"/>
<path style="stroke-width:calc(var(--k,1)*1.12px)" d="M72.3,109.0C72.1,111.1 71.5,117.1 71.0,121.3C70.4,125.4 69.3,129.9 69.1,134.1C68.9,138.2 69.4,142.9 69.6,146.2C69.9,149.6 70.5,152.8 70.7,154.2M141.1,83.8C140.9,85.0 140.0,88.9 139.8,91.2C139.6,93.4 139.2,96.1 139.7,97.4C140.2,98.7 142.3,98.5 142.8,98.7M157.5,105.7C158.0,107.5 159.5,112.8 160.5,116.1C161.6,119.4 162.4,122.3 163.8,125.5C165.2,128.8 167.9,133.9 168.7,135.6M80.0,146.4C80.6,147.0 83.4,149.2 83.6,150.4C83.7,151.5 81.5,152.7 81.1,153.2M172.0,127.5C172.5,128.0 175.1,129.7 175.4,130.7C175.7,131.8 173.0,133.2 173.5,133.8C174.0,134.5 177.5,134.4 178.4,134.5"/>
<path style="stroke-width:calc(var(--k,1)*1.19px)" d="M360.1,79.9L362.1,87.2M161.1,130.9C161.8,132.5 163.8,138.0 165.0,140.9C166.1,143.9 167.4,147.3 167.9,148.6M68.5,117.7C68.6,120.1 68.9,127.6 68.9,132.3C68.8,137.0 68.5,143.5 68.5,145.7"/>
<path style="stroke-width:calc(var(--k,1)*1.2px)" d="M60.7,34.5C60.5,34.1 60.1,32.8 59.4,32.0C58.7,31.3 57.2,30.2 56.3,30.1C55.3,30.0 54.1,30.8 53.8,31.4C53.5,32.0 54.0,33.1 54.4,33.9C54.8,34.7 56.0,36.0 56.3,36.4M58.2,28.9C59.0,28.7 61.3,27.8 63.2,27.6C65.1,27.5 67.4,28.1 69.5,28.0C71.5,27.9 73.6,27.1 75.7,27.3C77.8,27.4 80.1,28.1 82.0,28.9C83.9,29.7 85.9,31.1 87.0,32.0C88.2,33.0 88.6,34.1 88.9,34.5M72.6,24.5C73.3,24.6 75.2,24.7 76.7,25.4C78.3,26.0 81.1,27.8 82.0,28.3M73.2,24.7C73.5,25.1 74.1,26.1 75.1,26.8C76.1,27.4 78.8,28.5 79.5,28.9M84.5,25.1C84.8,25.6 85.8,27.1 86.4,28.3C87.0,29.4 88.0,31.4 88.3,32.0M84.5,25.1C85.1,25.5 87.3,26.0 88.3,27.3C89.3,28.5 90.0,31.7 90.4,32.6M92.0,34.2C92.7,34.3 95.3,33.9 95.8,34.8C96.3,35.7 95.3,38.8 95.2,39.5M92.7,33.3C93.5,33.4 96.7,33.4 97.7,33.9C98.6,34.4 98.2,36.0 98.3,36.4M60.7,33.9C59.9,34.6 57.1,36.5 55.9,38.3C54.7,40.1 54.0,42.5 53.4,44.6C52.8,46.7 52.3,49.8 52.1,50.8M58.8,34.8C58.4,36.0 57.0,39.6 56.3,42.1C55.6,44.5 54.9,48.3 54.6,49.6M62.2,35.2C61.7,36.5 59.9,40.7 59.2,43.3C58.4,45.9 57.9,49.6 57.7,50.8M55.3,54.6C55.0,55.7 54.0,58.8 53.9,60.9C53.8,63.0 54.2,66.9 54.6,67.2C55.1,67.4 55.9,64.1 56.4,62.4C56.9,60.7 57.2,58.0 57.4,57.1M72.0,34.5C71.4,35.6 69.4,38.9 68.4,40.8C67.5,42.7 66.8,45.2 66.4,46.1M73.5,35.8C73.3,36.8 72.6,40.1 72.7,42.1C72.8,44.0 73.8,46.4 74.0,47.3M77.2,37.0C77.0,38.1 76.1,41.5 76.0,43.3C75.9,45.1 76.5,47.2 76.6,48.0M82.0,38.3C82.2,39.3 82.9,42.5 83.3,44.6C83.6,46.7 83.9,49.8 84.0,50.8M85.3,39.5C85.5,40.6 86.4,43.7 86.5,45.8C86.6,48.0 86.1,51.3 86.0,52.3M66.9,51.6L71.5,51.0M65.4,61.5C66.1,61.7 68.1,62.9 69.5,62.9C70.8,62.9 72.8,61.8 73.5,61.6M73.5,67.2C73.7,67.8 73.7,70.2 74.7,70.9C75.8,71.7 78.9,71.5 79.7,71.7M74.5,69.9C75.0,70.3 76.6,72.1 77.6,72.2C78.7,72.2 80.2,70.6 80.7,70.3M87.3,41.1C87.7,42.1 89.6,45.2 89.8,47.3C90.0,49.4 88.7,52.6 88.5,53.6M94.8,42.8C95.3,43.6 97.2,45.9 97.8,47.3C98.4,48.7 98.3,50.5 98.4,51.1M89.8,53.6C90.6,53.4 93.8,52.1 94.8,52.3C95.8,52.6 96.5,52.8 96.1,55.1C95.6,57.4 93.6,64.5 92.3,65.9C91.0,67.3 88.7,65.4 88.3,63.4C87.9,61.3 89.5,55.2 89.8,53.6M84.6,56.1C84.4,57.7 84.1,62.6 83.5,65.9C82.9,69.2 81.2,73.1 81.0,75.9C80.8,78.8 82.0,81.8 82.2,83.0M96.1,55.1C96.3,56.5 97.6,60.3 97.8,63.4C98.0,66.4 98.5,70.1 97.2,73.4C95.8,76.7 91.0,81.6 89.8,83.2M92.3,65.9C91.7,67.6 89.8,73.0 88.5,75.9C87.3,78.8 85.4,82.0 84.8,83.2M71.0,68.4C70.5,69.0 68.4,69.7 68.4,72.2C68.4,74.6 70.5,81.4 71.0,83.2M74.1,71.2C73.8,72.4 72.3,76.4 72.2,78.4C72.1,80.5 73.3,82.4 73.5,83.2M129.3,33.3C128.5,33.8 125.9,34.7 124.7,36.4C123.4,38.1 122.6,40.9 121.9,43.3C121.2,45.7 121.0,48.5 120.6,50.8C120.3,53.1 120.0,56.1 119.9,57.1M129.3,35.2C128.6,36.1 126.3,38.4 125.3,40.8C124.3,43.2 123.8,46.9 123.4,49.6C123.0,52.3 123.2,55.9 123.2,57.1M129.3,34.5C130.2,33.7 133.0,30.6 134.9,29.5C136.9,28.4 139.0,28.0 141.2,28.0C143.4,28.0 146.0,28.3 148.1,29.3C150.2,30.2 152.3,32.0 153.8,33.9C155.3,35.8 156.5,38.5 157.2,40.8C157.8,43.1 158.0,45.6 157.9,47.7C157.8,49.8 156.9,52.4 156.7,53.4M131.8,35.8C131.6,37.2 130.5,41.6 130.6,44.6C130.7,47.5 131.4,50.8 132.4,53.4C133.5,55.9 135.3,58.1 136.8,59.6C138.4,61.2 141.0,62.2 141.8,62.8M158.4,54.0C158.9,53.8 161.2,52.7 161.3,53.1C161.4,53.5 159.6,55.5 158.8,56.5C157.9,57.5 157.2,59.1 156.3,59.0C155.3,58.9 153.7,56.4 153.1,55.9M142.5,50.8C142.3,51.7 141.1,54.3 141.2,55.9C141.3,57.4 142.8,59.5 143.1,60.3M148.1,63.4C149.2,64.0 152.5,65.5 154.4,67.2C156.3,68.8 158.2,70.7 159.4,73.4C160.7,76.1 161.5,81.6 161.9,83.2M143.1,63.4C142.7,64.6 141.4,68.0 140.6,70.9C139.8,73.8 138.5,79.3 138.1,81.0M178.9,35.8C178.5,36.0 176.7,36.8 176.7,37.3C176.7,37.8 178.5,38.6 178.9,38.9M178.9,42.7C178.5,42.9 176.7,43.7 176.7,44.2C176.7,44.7 178.5,45.6 178.9,45.8M197.1,28.3C196.4,29.5 194.2,33.3 193.3,35.8C192.3,38.3 191.7,42.1 191.4,43.3M199.6,27.0C199.1,28.5 197.4,33.1 197.1,35.8C196.7,38.5 197.6,42.1 197.7,43.3M204.6,25.7C204.3,27.0 202.7,30.9 202.7,33.3C202.7,35.7 204.3,39.0 204.6,40.2M207.1,27.0C207.5,28.3 209.0,32.2 209.6,34.5C210.2,36.8 210.6,39.8 210.9,40.8M212.1,28.3C212.7,29.5 215.0,33.4 215.9,35.8C216.7,38.2 216.9,41.5 217.1,42.7M210.9,40.8C211.2,40.4 212.6,38.0 213.1,38.3C213.6,38.6 213.8,42.0 214.0,42.7M191.4,43.3C191.3,44.4 190.7,47.7 190.8,49.6C190.9,51.5 191.8,53.8 192.0,54.6M217.1,42.7C217.5,43.6 218.8,46.8 219.6,48.3C220.5,49.9 222.3,51.4 222.1,52.1C222.0,52.8 219.5,52.6 219.0,52.7M190.2,54.6C190.7,55.9 191.7,60.3 193.3,62.1C194.9,64.0 197.3,65.5 199.6,65.9C201.9,66.3 204.8,65.7 207.1,64.6C209.4,63.6 211.7,61.5 213.4,59.6C215.0,57.7 216.5,54.4 217.1,53.4M200.2,48.3L203.3,47.3M202.1,56.5C202.7,56.6 204.6,57.6 205.8,57.4C207.1,57.2 209.0,55.6 209.6,55.2M189.5,55.9C189.2,57.1 187.9,60.7 187.6,63.4C187.4,66.1 188.0,69.2 188.3,72.2C188.6,75.1 189.3,79.5 189.5,81.0M192.0,57.1C191.8,58.6 190.8,63.0 190.8,65.9C190.8,68.8 191.8,73.2 192.0,74.7M194.5,65.9C195.0,66.9 197.1,69.9 197.1,72.2C197.1,74.5 195.4,77.9 194.5,79.7C193.7,81.5 192.5,82.6 192.0,83.2M199.6,65.9C199.2,67.2 197.9,70.5 197.7,73.4C197.5,76.3 198.2,81.6 198.3,83.2M229.3,29.5C228.7,30.1 226.8,31.8 225.9,33.3C225.0,34.7 224.3,37.5 224.0,38.3M229.3,50.8C228.9,51.7 227.2,54.0 227.2,55.9C227.2,57.7 228.9,61.1 229.3,62.1M229.3,52.1C230.1,51.6 232.6,49.4 234.3,49.0C236.0,48.5 238.1,48.9 239.3,49.6C240.6,50.3 241.4,52.7 241.8,53.4M229.3,78.4L231.8,83.2M269.7,53.6C269.2,52.1 266.7,47.5 266.4,44.6C266.2,41.6 266.9,38.5 268.2,35.8C269.5,33.1 271.8,30.0 274.5,28.3C277.2,26.5 281.4,25.0 284.5,25.1C287.6,25.2 291.0,27.0 293.3,28.9C295.6,30.8 297.1,33.8 298.3,36.4C299.5,39.0 300.0,43.2 300.3,44.6M266.9,34.5C265.9,33.0 260.8,26.6 260.7,25.1C260.5,23.7 264.1,25.1 265.9,25.7C267.8,26.4 271.0,28.4 272.0,28.9M287.0,22.6C288.1,21.7 291.5,18.5 293.3,17.0C295.1,15.4 297.0,12.6 297.8,13.2C298.6,13.8 298.1,18.2 298.1,20.7C298.1,23.2 297.8,27.0 297.8,28.3M277.0,29.5C276.5,31.0 274.6,35.4 274.0,38.3C273.3,41.2 273.3,45.6 273.2,47.1M279.5,32.0C279.3,33.5 277.8,38.1 278.2,40.8C278.7,43.5 281.4,47.1 282.0,48.3M277.0,37.0C278.2,38.5 282.6,43.5 284.5,45.8C286.4,48.1 287.6,50.0 288.3,50.8M284.5,37.0C284.9,38.1 286.7,41.4 287.0,43.3C287.4,45.2 286.6,47.5 286.5,48.3M294.5,38.3C295.0,39.5 296.2,43.7 297.1,45.8C297.9,47.9 298.5,50.1 299.6,50.8C300.7,51.6 303.2,50.0 303.6,50.3C303.9,50.7 301.9,52.4 301.6,52.8M282.6,54.0C282.8,54.2 283.5,55.3 283.9,55.4C284.3,55.4 284.7,54.1 285.1,54.1C285.6,54.1 285.9,55.4 286.4,55.4C286.8,55.3 287.5,53.9 287.8,53.6M269.5,55.9C269.6,56.6 269.8,60.0 270.2,60.4C270.6,60.8 271.8,58.7 272.1,58.4M282.0,63.4C281.4,64.4 279.1,67.4 278.2,69.7C277.4,72.0 277.2,75.9 277.0,77.2M282.0,63.4C282.4,64.6 284.3,68.4 284.5,70.9C284.7,73.4 283.5,77.2 283.3,78.4M292.0,62.1C292.9,62.8 295.6,64.2 297.1,65.9C298.5,67.6 299.8,69.9 300.8,72.2C301.9,74.5 302.9,78.4 303.3,79.7M277.0,77.2C277.6,77.4 279.7,77.4 280.7,78.4C281.8,79.4 282.8,82.4 283.3,83.2M311.5,37.7C312.2,38.8 314.3,41.7 315.9,44.6C317.4,47.4 319.3,51.1 320.9,54.6C322.5,58.2 324.2,61.9 325.3,65.9C326.4,69.9 327.2,75.6 327.3,78.4C327.4,81.3 326.2,82.4 326.0,83.2M266.9,81.6C267.6,81.5 269.5,80.7 270.7,81.0C272.0,81.2 273.8,82.8 274.5,83.2M335.6,32.0C336.8,31.6 340.2,30.1 343.1,29.5C346.0,28.9 350.4,28.2 353.1,28.3C355.9,28.4 358.4,29.8 359.4,30.1M352.5,24.5C353.5,24.7 356.1,24.7 358.2,25.7C360.2,26.8 363.6,29.9 364.7,30.8M352.5,24.5C353.1,25.0 355.2,26.7 356.3,27.6C357.3,28.6 358.5,29.8 358.9,30.3M335.6,32.0C336.4,32.2 338.9,33.3 340.6,33.3C342.3,33.3 344.8,32.2 345.6,32.0M340.6,33.3C340.0,34.5 337.9,37.9 336.8,40.8C335.8,43.7 334.9,47.5 334.3,50.8C333.7,54.2 332.9,58.2 333.1,60.9C333.3,63.6 335.2,66.1 335.6,67.2M345.6,33.3C345.0,34.9 342.8,40.0 341.8,43.3C340.9,46.7 340.4,50.0 340.0,53.4C339.5,56.7 339.1,60.7 339.3,63.4C339.6,66.1 341.0,68.6 341.3,69.7M349.4,34.5C348.7,36.4 346.4,42.3 345.6,45.8C344.8,49.4 344.6,54.2 344.4,55.9M354.4,35.8C353.8,37.5 351.0,43.1 350.6,45.8C350.2,48.5 351.7,51.1 351.9,52.1M359.4,33.3C359.8,34.5 360.9,38.5 361.9,40.8C363.0,43.1 365.1,46.0 365.7,47.1M358.2,45.8C357.5,46.7 354.7,49.2 354.4,50.8C354.1,52.5 356.1,55.0 356.4,55.9M364.4,44.6C364.8,45.8 366.6,49.8 366.9,52.1C367.3,54.4 366.5,57.3 366.4,58.4M374.0,40.2C374.8,40.4 377.5,40.9 379.0,41.4C380.5,42.0 382.9,42.6 383.0,43.3C383.1,44.0 380.5,45.6 379.5,45.8C378.5,46.0 377.4,44.8 377.0,44.6M374.5,45.8C375.1,46.9 377.1,50.0 378.2,52.1C379.3,54.2 380.5,57.3 381.0,58.4M372.0,48.3C372.6,49.6 374.8,53.4 375.7,55.9C376.7,58.4 377.4,62.1 377.7,63.4M369.5,50.8C370.1,52.3 372.5,57.1 373.2,59.6C374.0,62.1 373.8,64.9 374.0,65.9M374.5,73.4C374.9,74.3 376.3,76.8 377.0,78.4C377.6,80.1 378.2,82.4 378.5,83.2M370.7,75.9C371.1,76.8 372.7,79.7 373.2,81.0C373.8,82.2 373.8,82.8 374.0,83.2M66.4,102.0L66.9,105.8M84.5,115.8C83.9,117.5 81.9,122.9 80.7,125.9C79.6,128.8 78.2,132.1 77.7,133.4M146.9,92.0C148.1,91.8 152.1,91.6 154.4,90.7C156.7,89.9 159.6,87.6 160.7,87.0M145.6,97.0C146.0,98.9 147.4,104.3 148.1,108.3C148.9,112.3 149.8,118.7 150.1,120.8M170.7,124.6L178.2,122.1M202.1,94.5C203.3,94.7 206.7,95.9 209.6,95.7C212.5,95.6 216.4,94.5 219.6,93.9C222.9,93.2 227.7,92.3 229.3,92.0M274.5,89.5C275.3,90.3 278.0,93.5 279.5,94.5C281.0,95.5 282.6,95.1 283.3,95.2M279.5,103.3L284.5,114.6M283.3,102.0L288.3,113.3M286.4,100.8L292.0,110.8M299.6,99.5L301.4,105.8M259.4,124.0C260.5,123.9 263.8,123.2 265.7,123.4C267.6,123.5 269.9,124.4 270.7,124.6M278.2,124.6C279.1,124.7 281.7,125.6 283.3,125.4C284.8,125.1 287.0,123.7 287.8,123.4M247.5,139.7L251.3,143.4M261.9,133.4C263.2,133.1 266.7,131.6 269.5,131.5C272.2,131.4 275.5,132.0 278.2,132.8C281.0,133.5 284.5,135.4 285.8,135.9M244.4,149.7C245.2,149.9 247.9,150.4 249.4,151.0C250.8,151.5 252.5,152.8 253.1,153.2M314.6,133.4L314.6,139.7M317.1,131.5L317.9,140.9M320.3,129.6L320.9,140.9M323.4,128.4L324.2,139.7M356.4,93.2C356.2,93.7 354.8,95.1 355.0,95.7C355.2,96.4 357.2,96.8 357.7,97.0M339.3,116.4C339.7,117.2 340.5,119.7 341.3,120.8C342.2,122.0 343.9,122.9 344.4,123.4M359.4,133.4L360.7,142.2M382.0,112.1C382.4,113.5 384.3,117.9 384.5,120.8C384.7,123.8 383.5,128.2 383.3,129.6M383.3,107.0C384.1,108.1 386.4,111.4 388.3,113.3C390.2,115.2 393.5,117.5 394.5,118.3M383.3,128.4C384.5,128.2 388.3,128.0 390.8,127.1C393.3,126.3 397.1,124.0 398.3,123.4M382.0,137.2C383.7,136.5 389.0,134.5 392.0,133.4C395.1,132.2 398.9,130.8 400.3,130.3M100.1,121.7C101.2,122.3 104.7,125.5 107.1,125.2C109.4,124.9 112.9,120.8 114.1,120.0M101.8,134.0C103.3,134.2 107.6,136.9 110.6,135.7C113.5,134.5 117.8,128.4 119.3,127.0M105.3,144.5C106.8,144.5 111.3,145.6 114.1,144.5C116.8,143.3 120.6,138.6 121.9,137.5M244.9,149.6C245.7,149.8 248.2,150.0 249.3,150.8C250.5,151.7 251.4,154.0 251.8,154.6M246.8,140.8L250.6,143.3M264.4,159.6L268.2,160.9M258.1,154.6C259.2,154.8 262.3,155.0 264.4,155.8C266.5,156.7 269.6,159.0 270.7,159.6M292.0,172.0L297.1,175.8M263.8,175.8C264.1,176.2 265.6,177.8 265.7,178.3C265.8,178.8 264.6,178.9 264.4,179.0M266.9,175.8L268.2,176.5M269.5,180.2L270.7,181.6M275.7,182.7C276.0,182.5 277.1,181.3 277.6,181.4C278.1,181.5 279.0,182.6 279.0,183.3C279.0,184.0 278.1,185.4 277.6,185.6C277.1,185.8 276.0,185.0 275.7,184.6C275.4,184.1 275.7,183.0 275.7,182.7M289.5,190.8C290.8,191.5 294.5,193.8 297.1,194.6C299.6,195.4 303.3,195.7 304.6,195.9M311.5,175.8C311.4,174.5 310.8,170.5 311.1,168.3C311.4,166.1 312.1,164.2 313.1,162.6C314.1,161.0 316.5,159.2 317.1,158.5M377.0,155.7C378.4,156.1 382.8,158.0 385.8,158.2C388.7,158.4 391.8,157.8 394.5,157.0C397.3,156.1 400.8,153.8 402.1,153.2M331.8,189.6C333.1,189.1 336.6,186.9 339.3,186.4C342.1,186.0 345.6,186.1 348.1,187.1C350.6,188.0 352.9,190.0 354.4,192.1C355.9,194.2 356.5,198.4 356.9,199.6M338.1,215.9C339.5,216.8 344.6,220.3 346.9,221.0C349.2,221.6 351.0,219.9 351.9,219.7M336.8,221.0C338.1,220.1 342.3,217.2 344.4,215.9C346.4,214.7 348.5,213.8 349.4,213.4M405.8,204.6L407.8,209.7M404.0,187.7L405.8,185.8M406.5,189.0C406.8,188.6 407.9,187.0 408.3,187.1C408.8,187.2 409.0,189.2 409.1,189.6M311.5,230.7L312.9,246.5M335.6,227.0L336.8,229.5M355.6,231.5C356.3,231.9 358.2,233.8 359.4,234.0C360.6,234.2 362.1,232.8 362.7,232.6M341.8,259.6L343.1,263.4M274.6,88.3C275.9,89.1 279.6,91.2 282.1,93.3C284.6,95.4 288.4,99.6 289.7,100.8M294.4,187.0C293.8,188.4 291.1,193.9 290.7,195.7C290.2,197.6 291.7,197.8 291.9,198.3M296.9,190.7C297.4,191.8 299.7,195.5 299.5,197.0C299.2,198.5 296.3,199.1 295.7,199.5M129.4,34.6C129.1,36.2 127.3,41.5 127.5,44.6C127.7,47.7 129.1,51.1 130.7,53.4C132.2,55.7 135.9,57.6 136.9,58.4M124.4,40.8C124.2,42.5 122.8,47.7 123.1,50.9C123.5,54.0 125.8,58.2 126.3,59.7M119.4,47.1C119.6,48.6 119.8,53.4 120.6,55.9C121.5,58.4 123.8,61.1 124.4,62.2M131.9,62.2C133.0,62.6 136.3,64.7 138.2,64.7C140.1,64.7 142.4,62.6 143.2,62.2M154.5,47.1C155.1,47.7 157.1,50.0 158.3,50.9C159.4,51.7 161.4,51.5 161.4,52.1C161.4,52.8 159.2,53.6 158.3,54.6C157.3,55.7 156.2,57.8 155.8,58.4M66.9,29.5L64.4,34.5M66.9,30.8C67.6,31.4 69.8,33.3 70.7,34.5C71.6,35.8 72.3,37.7 72.6,38.3M79.5,32.0L82.0,37.0"/>
<path style="stroke-width:calc(var(--k,1)*1.25px)" d="M169.7,99.0C169.8,100.2 169.4,104.0 169.9,106.5C170.4,109.0 171.6,111.8 172.7,114.0C173.9,116.3 176.2,119.0 176.9,119.9M287.7,85.9C288.4,86.3 290.6,88.1 292.2,87.9C293.9,87.8 296.8,85.5 297.8,85.1M70.8,148.7C71.4,149.3 74.2,151.5 74.3,152.5C74.3,153.4 70.8,153.5 71.0,154.4C71.2,155.4 75.8,157.3 75.6,158.1C75.5,159.0 71.0,159.2 70.1,159.4M154.8,135.6C155.4,136.4 158.3,139.2 158.4,140.6C158.6,142.0 155.5,143.1 155.9,144.0C156.2,145.0 160.3,145.2 160.4,146.3C160.6,147.4 157.4,149.7 156.8,150.4M290.3,225.4C290.8,226.1 292.3,229.1 292.9,229.3C293.5,229.5 293.5,226.6 294.2,226.9C294.8,227.2 296.3,230.9 296.9,231.1C297.4,231.3 297.4,228.5 297.6,228.0"/>
<path style="stroke-width:calc(var(--k,1)*1.32px)" d="M57.7,54.6C57.9,55.7 58.2,59.0 59.4,60.9C60.6,62.8 62.8,64.7 64.7,65.9C66.6,67.1 68.9,67.8 71.0,67.9C73.0,68.0 75.4,67.6 77.2,66.7C79.1,65.7 80.8,64.1 82.0,62.4C83.2,60.6 84.2,57.2 84.6,56.1M58.9,50.3C60.0,50.1 64.3,48.5 65.7,49.1C67.0,49.7 67.9,53.0 66.9,54.1C66.0,55.3 61.5,56.6 60.2,56.0C58.8,55.4 59.1,51.3 58.9,50.3M71.5,49.7C72.8,49.6 77.9,48.2 79.5,49.1C81.1,49.9 82.0,53.6 80.9,54.7C79.7,55.9 74.3,56.8 72.7,56.0C71.1,55.1 71.7,50.8 71.5,49.7M60.7,51.6C61.1,51.5 62.4,50.7 63.2,50.8C63.9,50.9 64.8,52.0 65.2,52.2M61.3,52.3C61.5,52.6 62.2,53.9 62.7,53.9C63.1,53.9 63.7,52.6 63.9,52.3M129.3,32.0C130.1,31.3 132.4,28.7 134.3,27.6C136.2,26.6 138.3,25.9 140.6,25.7C142.9,25.6 145.7,26.0 148.1,27.0C150.5,28.0 153.2,29.9 155.0,32.0C156.9,34.1 158.3,37.0 159.2,39.5C160.0,42.1 160.3,44.7 160.2,47.1C160.0,49.5 158.7,52.8 158.4,54.0M146.2,49.0C146.5,49.3 147.8,50.0 147.9,50.8C148.0,51.7 147.0,53.5 146.9,54.0M187.3,53.4C187.2,51.9 186.5,47.4 186.8,44.6C187.0,41.7 187.4,39.4 188.9,36.4C190.4,33.4 192.8,28.7 195.8,26.4C198.8,24.0 203.7,22.4 207.1,22.2C210.4,22.0 213.7,23.2 215.9,25.1C218.0,27.1 219.1,30.7 219.9,33.9C220.7,37.1 220.5,42.8 220.6,44.6M194.5,49.0C195.0,48.7 196.3,47.2 197.1,47.3C197.8,47.4 198.6,49.2 198.9,49.6M229.3,32.0C231.0,31.7 236.2,29.9 239.3,30.1C242.5,30.3 245.7,31.5 248.1,33.3C250.5,35.1 252.7,37.9 253.8,40.8C254.9,43.7 255.3,47.8 254.6,50.8C254.0,53.9 252.2,56.8 250.1,59.0C248.1,61.2 243.8,63.2 242.5,64.0M229.3,63.4C229.9,64.9 232.2,68.9 233.1,72.2C233.9,75.5 234.1,81.4 234.3,83.2M272.0,53.4C272.4,54.3 272.8,57.6 274.5,59.0C276.1,60.4 279.3,61.5 282.0,61.6C284.7,61.7 288.2,61.0 290.8,59.6C293.3,58.2 296.2,54.4 297.3,53.4M302.0,63.1C302.3,64.5 302.7,68.9 303.5,71.4C304.4,74.0 306.3,77.1 306.9,78.2M311.5,37.7C311.8,39.4 313.9,45.1 313.6,48.3C313.3,51.6 311.3,54.6 309.9,57.1C308.4,59.6 306.2,61.7 304.8,63.4C303.5,65.1 302.1,66.7 301.6,67.4M299.6,83.2C300.4,82.4 302.7,79.9 304.6,78.4C306.5,77.0 308.8,75.2 310.9,74.7C312.9,74.2 315.6,74.5 317.1,75.3C318.6,76.1 319.4,79.0 319.9,79.7M329.3,36.4C329.9,36.6 332.1,36.5 333.1,37.7C334.0,38.8 335.1,41.4 335.1,43.3C335.1,45.2 334.0,47.7 333.1,49.0C332.1,50.2 329.9,50.5 329.3,50.8M348.1,54.5C348.9,54.3 351.2,53.4 353.1,53.3C355.0,53.2 357.3,53.3 359.4,53.9C361.5,54.5 364.6,56.5 365.6,57.1M350.6,64.6C351.9,64.8 355.6,66.0 358.1,65.8C360.6,65.6 364.4,63.7 365.6,63.3M352.3,78.8L354.9,86.6M375.7,74.6L378.2,83.4M372.0,68.4C373.0,69.0 376.6,70.5 378.2,72.2C379.9,73.8 381.0,76.6 382.0,78.4C383.0,80.3 384.1,82.4 384.5,83.2M72.0,83.2C71.3,84.7 69.1,88.8 68.2,92.0C67.3,95.1 66.7,100.3 66.4,102.0M85.8,83.2C86.1,84.5 87.2,88.4 87.6,90.7C88.1,93.0 88.2,96.0 88.3,97.0M66.9,105.8C68.2,106.0 71.8,107.2 74.5,107.0C77.2,106.8 81.0,105.6 83.3,104.5C85.5,103.5 87.0,101.4 87.8,100.8M79.5,140.9C80.3,141.3 82.4,142.2 84.5,143.4C86.6,144.7 90.4,146.8 92.0,148.4C93.7,150.1 94.1,152.4 94.5,153.2M145.6,83.2C145.5,84.5 144.9,88.8 145.1,90.7C145.3,92.6 146.6,93.9 146.9,94.5M145.6,95.7C147.5,96.0 153.1,96.7 156.9,97.0C160.7,97.3 164.8,98.0 168.2,97.6C171.5,97.2 174.7,96.1 177.0,94.5C179.3,92.9 180.8,90.1 182.0,88.2C183.2,86.3 183.7,84.0 184.0,83.2M150.6,138.4C151.3,137.8 152.9,135.5 154.4,134.6C155.9,133.8 158.6,133.6 159.4,133.4M152.6,148.4C153.6,148.9 155.8,151.2 158.2,151.0C160.5,150.7 164.4,148.7 166.9,147.2C169.5,145.7 172.2,143.0 173.2,142.2M199.6,83.2C199.7,84.2 199.9,87.6 200.3,89.5C200.7,91.4 201.8,93.7 202.1,94.5M214.6,95.7C214.8,97.4 215.5,102.6 215.9,105.8C216.3,108.9 217.1,112.3 217.1,114.6C217.1,116.9 216.7,118.5 215.9,119.6C215.0,120.6 212.7,120.6 212.1,120.8M216.6,96.3C217.5,97.3 219.8,100.4 221.8,102.4C223.9,104.4 227.5,107.3 228.7,108.3M215.9,119.6C216.5,120.4 218.2,123.4 219.6,124.6C221.1,125.9 223.0,126.9 224.7,127.1C226.3,127.3 228.5,126.1 229.3,125.9M229.0,88.3C229.5,89.5 230.9,93.8 232.2,95.9C233.5,97.9 235.4,99.1 236.6,100.6C237.7,102.1 238.6,104.0 239.0,104.7M272.6,121.5C273.1,121.9 275.5,123.4 275.7,124.0C275.9,124.6 273.9,125.5 273.8,125.2C273.7,124.9 274.9,122.6 275.1,122.1M254.4,133.4C254.0,134.9 251.9,139.7 251.9,142.2C251.9,144.7 254.0,147.4 254.4,148.4M279.5,142.2C279.9,143.2 282.0,146.6 282.0,148.4C282.0,150.3 279.9,152.4 279.5,153.2M256.9,138.4C256.7,139.7 255.4,143.6 255.6,145.9C255.9,148.2 257.7,151.2 258.2,152.2M309.6,134.6C311.7,135.7 318.9,141.1 322.1,140.9C325.4,140.7 328.1,134.6 329.3,133.4M359.4,103.9C360.7,104.3 365.1,106.0 366.9,106.5C368.8,107.1 370.1,107.0 370.7,107.0M354.4,135.9C355.4,135.5 358.6,133.6 360.7,133.4C362.8,133.2 365.9,134.4 366.9,134.6M355.6,142.2C357.3,142.4 363.8,141.6 365.7,143.4C367.6,145.3 366.7,151.6 366.9,153.2M289.5,130.7C290.5,131.4 295.1,133.5 295.8,134.5C296.4,135.6 293.7,136.6 293.3,137.0M290.7,143.3C290.5,144.5 290.0,148.7 289.5,150.8C289.0,152.9 288.0,155.0 287.7,155.8M283.2,143.3L285.2,147.1M268.2,143.3C267.9,144.3 266.5,147.7 266.4,149.6C266.3,151.4 267.4,153.7 267.7,154.6M284.5,159.6C284.9,160.7 286.8,163.8 287.0,165.9C287.2,168.0 285.9,171.1 285.7,172.2M285.8,183.3L288.3,187.1M307.1,209.7L309.6,218.4M317.1,208.4L322.1,218.4M329.3,193.4C328.9,194.2 327.3,196.5 327.2,198.4C327.0,200.3 328.2,203.6 328.4,204.6M353.1,160.7L351.4,168.3M355.6,159.5L354.4,167.0M358.2,158.2L357.7,165.7M360.7,157.0L360.7,164.0M341.8,184.6C342.1,185.8 342.5,189.8 343.1,192.1C343.7,194.4 345.2,197.3 345.6,198.4M346.9,187.1C347.3,188.3 348.3,192.3 349.4,194.6C350.4,196.9 352.5,199.8 353.1,200.9M336.8,188.3C336.4,189.6 334.5,193.6 334.3,195.9C334.1,198.2 335.4,201.1 335.6,202.1M343.1,192.1C342.7,192.9 340.8,195.7 340.6,197.1C340.4,198.6 341.6,200.3 341.8,200.9M341.8,212.2C342.3,213.2 344.4,216.6 344.4,218.4C344.4,220.3 342.3,222.4 341.8,223.2M374.5,193.4C375.3,192.7 377.4,190.3 379.5,189.6C381.6,188.9 385.8,189.1 387.0,189.0M373.2,195.9C373.1,197.1 372.2,201.1 372.7,203.4C373.3,205.7 375.8,208.6 376.5,209.7M380.7,190.8C381.2,191.9 383.0,195.2 383.3,197.1C383.5,199.0 382.2,201.3 382.0,202.1M387.0,189.6C387.6,190.4 389.1,193.4 390.8,194.6C392.5,195.9 396.0,196.7 397.1,197.1M384.5,195.9C385.3,196.3 387.9,198.0 389.5,198.4C391.2,198.7 393.7,198.0 394.5,197.9M404.6,203.4C405.2,204.2 407.5,206.7 408.3,208.4C409.2,210.1 409.4,212.6 409.6,213.4M300.8,230.7C301.0,232.2 302.3,237.6 302.1,239.5C301.9,241.4 300.0,241.6 299.6,242.0M366.9,225.7C367.6,226.3 369.0,228.2 370.7,229.5C372.4,230.7 375.9,232.6 377.0,233.2M386.4,230.7C386.5,232.0 386.6,236.1 387.0,238.3C387.5,240.5 388.7,243.0 389.0,243.9M394.5,233.2C394.1,234.3 392.7,237.7 392.0,239.5C391.3,241.3 390.6,243.2 390.3,243.9M398.3,228.2C399.4,228.1 402.5,228.6 404.6,227.7C406.7,226.9 409.8,224.0 410.9,223.2M348.1,247.0C347.5,248.3 345.4,252.3 344.4,254.6C343.3,256.9 342.3,259.8 341.8,260.8M348.1,254.6C347.7,255.4 345.4,258.9 345.6,259.6C345.8,260.3 348.4,258.6 349.4,259.0C350.3,259.3 351.0,261.1 351.4,261.5M366.9,254.6L369.5,260.8M370.7,253.9L373.2,259.6M206.6,116.8C207.6,117.8 210.9,120.1 212.7,122.6C214.4,125.1 215.7,129.1 217.2,131.9C218.6,134.6 220.7,137.9 221.4,139.1"/>
<path style="stroke-width:calc(var(--k,1)*1.44px)" d="M44.6,39.3C44.9,39.2 45.7,38.4 46.2,38.7C46.8,39.0 47.2,40.5 47.9,41.1C48.5,41.6 49.6,41.7 50.0,41.8M88.3,34.8C88.9,34.4 90.6,32.7 92.0,32.3C93.5,31.8 95.8,31.4 97.1,32.0C98.4,32.6 99.9,34.7 99.8,35.8C99.8,36.8 97.6,37.1 96.8,38.3C96.0,39.4 95.1,42.0 94.8,42.7M73.2,52.2C73.7,52.0 75.4,50.8 76.4,50.8C77.3,50.9 78.5,52.2 79.0,52.5M74.5,52.6C74.8,53.0 75.7,54.7 76.2,54.7C76.8,54.8 77.6,53.1 77.9,52.7M90.0,54.6L88.8,63.1M91.5,53.9L90.0,63.9M93.0,53.4L91.3,64.9M94.5,53.4L92.5,65.4M145.0,55.2C145.1,56.2 145.1,59.5 145.6,60.9C146.1,62.2 147.7,63.0 148.1,63.4M184.8,55.2C184.7,53.5 184.0,47.9 184.3,44.6C184.5,41.2 184.7,38.6 186.4,35.2C188.1,31.7 191.1,26.4 194.5,23.9C198.0,21.3 203.3,19.9 207.1,19.7C210.9,19.6 214.6,20.7 217.1,23.0C219.7,25.2 221.4,29.7 222.4,33.3C223.4,36.9 223.3,41.6 223.2,44.6C223.0,47.5 221.8,49.8 221.5,50.8M188.3,28.0C187.8,27.7 186.3,26.2 185.4,26.4C184.4,26.5 182.9,28.0 182.6,28.9C182.4,29.7 183.3,31.2 184.0,31.5C184.7,31.9 186.5,31.1 187.0,31.0M215.9,24.2C216.2,23.9 217.2,22.4 217.6,22.2C218.1,22.1 218.5,23.3 218.6,23.5M192.7,45.8C193.4,45.6 195.8,44.3 197.1,44.6C198.3,44.9 199.8,46.3 200.2,47.7C200.6,49.1 200.4,51.7 199.6,52.7C198.7,53.8 196.4,54.3 195.2,54.0C193.9,53.7 192.5,52.2 192.0,50.8C191.6,49.5 192.6,46.7 192.7,45.8M203.3,45.2C204.6,44.8 208.8,42.8 210.9,42.7C212.9,42.6 215.1,43.3 215.9,44.6C216.6,45.8 216.6,49.0 215.2,50.2C213.9,51.5 209.6,52.1 207.7,52.1C205.8,52.1 204.7,51.4 204.0,50.2C203.2,49.1 203.4,46.0 203.3,45.2M205.8,47.3C206.5,47.0 208.4,45.6 209.6,45.6C210.8,45.5 212.5,46.8 213.1,47.1M207.7,47.7C208.0,48.0 209.0,49.6 209.6,49.6C210.2,49.6 211.2,47.9 211.5,47.6M210.9,62.1C211.9,62.6 215.2,63.2 217.1,64.6C219.0,66.1 220.1,68.4 222.1,70.9C224.2,73.4 228.1,78.2 229.3,79.7M212.1,60.9C213.4,61.7 217.2,63.6 219.6,65.9C222.0,68.2 224.9,72.7 226.5,74.7C228.1,76.7 228.8,77.3 229.3,77.8M267.2,54.9C266.6,53.1 264.2,48.0 263.9,44.6C263.7,41.2 264.1,37.7 265.7,34.5C267.2,31.4 270.1,27.7 273.2,25.7C276.4,23.8 281.0,22.4 284.5,22.6C288.1,22.8 291.8,24.8 294.5,27.0C297.3,29.2 299.4,32.9 300.8,35.8C302.2,38.7 302.8,42.1 302.8,44.6C302.9,47.1 301.4,49.8 301.1,50.8M273.8,50.8C274.4,50.6 276.0,49.6 277.0,49.6C278.0,49.6 279.3,50.6 279.7,50.8M288.3,46.4C288.9,46.2 290.9,45.2 292.0,45.2C293.1,45.2 294.3,46.3 294.8,46.6M286.4,61.5C286.7,61.8 287.5,63.4 288.3,63.5C289.0,63.6 290.6,62.4 291.0,62.1M299.6,67.2C300.0,68.4 301.2,72.4 302.1,74.7C302.9,77.0 304.2,79.9 304.6,81.0M365.7,36.8C366.1,35.8 366.9,32.0 368.2,30.8C369.5,29.5 371.6,29.1 373.2,29.3C374.8,29.5 377.0,30.6 377.7,32.0C378.5,33.4 378.4,36.3 377.7,37.7C377.1,39.0 374.6,39.8 374.0,40.2M353.1,54.6C354.2,54.4 357.3,53.1 359.4,53.4C361.5,53.6 364.8,55.4 365.9,55.9M356.9,70.8L358.1,77.1M363.1,68.3L365.0,74.6M350.6,70.8L351.9,77.1M370.7,79.6L375.7,73.4M369.4,88.4C370.0,88.8 371.7,90.1 373.2,90.9C374.6,91.7 377.4,92.8 378.2,93.2M70.7,83.2C69.9,84.5 67.0,88.4 65.7,90.7C64.4,93.0 63.2,95.3 62.9,97.0C62.6,98.7 63.3,100.3 63.9,100.8C64.6,101.2 66.4,99.7 66.9,99.5M65.2,106.4C64.6,108.0 62.9,112.6 61.9,115.8C61.0,119.1 59.3,122.5 59.4,125.9C59.5,129.2 61.6,132.8 62.7,135.9C63.7,139.0 65.0,141.8 65.7,144.7C66.4,147.6 66.7,151.8 66.9,153.2M88.3,100.8C87.9,102.6 86.8,108.5 85.8,112.1C84.7,115.6 83.1,118.5 82.0,122.1C80.9,125.7 79.3,129.8 79.0,133.4C78.7,136.9 79.7,140.9 80.2,143.4C80.7,145.9 81.7,147.6 82.0,148.4M90.8,96.4C92.2,96.9 96.4,97.7 99.6,99.5C102.7,101.3 106.5,103.9 109.6,107.0C112.7,110.2 116.2,114.4 118.4,118.3C120.6,122.3 122.3,126.7 122.9,130.9C123.5,135.1 123.1,139.7 122.1,143.4C121.2,147.1 118.0,151.6 117.1,153.2M88.3,97.0C88.7,97.8 90.6,100.6 90.8,102.0C91.0,103.5 89.1,103.5 89.5,105.8C89.9,108.1 92.2,112.3 93.3,115.8C94.3,119.4 94.8,123.1 95.8,127.1C96.8,131.1 98.1,135.7 99.6,139.7C101.0,143.6 103.3,148.7 104.6,151.0C105.8,153.2 106.7,152.8 107.1,153.2M157.5,97.6C157.6,99.4 157.8,104.6 158.2,108.3C158.5,112.0 158.9,116.2 159.4,119.6C160.0,122.9 160.6,125.4 161.4,128.4C162.3,131.3 163.3,134.2 164.4,137.2C165.6,140.1 167.6,144.5 168.2,145.9M166.9,98.3C167.2,99.9 167.6,105.4 168.2,108.3C168.8,111.2 169.7,113.5 170.7,115.8C171.8,118.1 173.0,120.2 174.5,122.1C175.9,124.0 177.6,125.5 179.5,127.1C181.4,128.7 184.7,130.8 185.8,131.5M159.4,133.4C160.0,134.9 162.1,139.5 163.2,142.2C164.2,144.9 165.3,148.4 165.7,149.7M168.2,129.6C168.6,130.9 169.9,135.1 170.7,137.2C171.5,139.2 172.8,141.3 173.2,142.2M173.2,142.2C174.3,141.3 177.4,138.9 179.5,137.2C181.6,135.4 184.9,132.4 186.0,131.5M202.1,95.7C202.5,97.4 203.6,102.6 204.6,105.8C205.5,108.9 206.8,112.1 207.8,114.6C208.9,117.1 209.7,119.6 210.9,120.8C212.0,122.1 214.0,121.9 214.6,122.1M210.9,120.8C211.5,121.9 213.2,124.6 214.6,127.1C216.1,129.6 218.0,132.8 219.6,135.9C221.3,139.0 223.2,143.8 224.7,145.9C226.1,148.0 227.8,148.0 228.4,148.4M219.6,133.4C220.3,133.8 221.8,136.3 223.4,135.9C225.0,135.5 228.3,131.7 229.3,130.9M229.3,94.5C229.9,95.7 232.0,99.9 233.1,102.0C234.1,104.1 235.2,106.2 235.6,107.0M239.3,102.0C240.8,101.7 245.3,100.6 248.1,100.1C250.9,99.7 254.3,97.4 256.3,99.5C258.3,101.6 260.5,109.8 260.2,112.7C259.9,115.6 258.3,117.5 254.4,117.1C250.5,116.7 240.2,111.8 236.8,110.2C233.5,108.5 234.7,107.6 234.3,107.0M240.6,102.0L245.6,110.8M243.1,101.8L248.1,112.1M246.2,101.4L251.4,113.3M249.4,100.8L254.4,114.6M265.1,83.2C264.9,84.2 263.6,87.4 263.9,89.5C264.2,91.6 265.6,94.5 266.9,95.7C268.3,97.0 269.5,97.2 272.0,97.0C274.5,96.8 280.3,94.9 282.0,94.5M266.9,95.7C266.9,96.6 266.3,99.4 266.9,100.8C267.6,102.1 269.7,104.0 270.7,104.0C271.8,104.0 272.8,101.3 273.2,100.8M272.6,87.0C274.2,87.6 279.2,89.1 282.0,90.7C284.8,92.4 286.6,95.5 289.5,97.0C292.5,98.5 297.1,99.9 299.6,99.5C302.1,99.1 303.7,95.3 304.6,94.5M274.5,102.0C275.3,103.5 277.6,108.1 279.5,110.8C281.4,113.5 284.1,116.7 285.8,118.3C287.4,120.0 288.9,120.4 289.5,120.8M282.0,95.7C283.0,96.8 286.2,100.1 288.3,102.0C290.4,103.9 293.2,104.9 294.5,107.0C295.9,109.1 296.6,112.3 296.6,114.6C296.6,116.9 294.9,119.8 294.5,120.8M303.3,94.5C304.4,94.3 307.5,94.5 309.6,93.2C311.7,92.0 314.2,88.4 315.9,87.0C317.5,85.5 319.0,84.9 319.6,84.5M300.8,104.5C301.4,105.8 303.1,109.5 304.6,112.1C306.0,114.6 308.2,118.7 309.6,119.6C311.0,120.4 311.8,121.9 312.9,117.1C313.9,112.3 315.4,95.1 315.9,90.7M304.6,83.2C304.4,84.5 303.3,88.6 303.3,90.7C303.3,92.8 304.4,94.9 304.6,95.7M249.4,132.1C250.6,131.5 254.0,129.4 256.9,128.4C259.8,127.3 264.2,126.5 266.9,125.9C269.7,125.2 272.2,124.8 273.2,124.6M279.5,126.5C281.0,127.2 285.3,129.3 288.3,130.9C291.2,132.4 296.4,135.1 297.1,135.9C297.7,136.7 292.9,135.9 292.0,135.9M249.4,132.1C249.6,133.4 250.8,137.4 250.6,139.7C250.4,142.0 249.0,144.1 248.1,145.9C247.3,147.8 246.0,150.1 245.6,151.0M266.9,135.9C266.1,136.9 263.0,139.9 261.9,142.2C260.9,144.5 260.5,147.9 260.7,149.7C260.9,151.5 262.8,152.6 263.2,153.2M270.7,137.2C270.1,138.2 267.4,141.1 266.9,143.4C266.5,145.7 268.0,149.7 268.2,151.0M273.2,135.9C274.3,136.5 278.9,138.0 279.5,139.7C280.1,141.3 277.4,144.9 277.0,145.9M282.0,138.4C282.8,139.0 286.0,140.5 287.0,142.2C288.1,143.8 288.7,146.6 288.3,148.4C287.9,150.3 285.1,152.4 284.5,153.2M292.0,137.2C292.5,138.4 294.3,142.0 294.5,144.7C294.8,147.4 293.5,151.8 293.3,153.2M379.5,83.2L384.5,87.0M361.9,90.7C361.4,91.8 359.8,95.3 358.9,97.0C358.0,98.7 356.8,100.1 356.4,100.8M378.2,88.2C378.9,89.7 381.2,94.3 382.0,97.0C382.8,99.7 383.0,103.3 383.3,104.5M360.0,102.0C361.2,102.2 365.8,102.4 366.9,103.3C368.1,104.1 368.0,106.6 366.9,107.0C365.9,107.5 361.8,106.6 360.7,105.8C359.5,104.9 360.1,102.6 360.0,102.0M356.4,100.8C355.0,101.8 351.0,104.7 348.1,107.0C345.3,109.3 342.5,112.1 339.3,114.6C336.2,117.1 331.0,120.8 329.3,122.1M361.9,108.3C361.6,110.0 360.8,115.0 360.2,118.3C359.5,121.7 359.1,125.4 358.2,128.4C357.2,131.3 355.4,134.0 354.4,135.9C353.3,137.8 352.3,139.0 351.9,139.7M384.5,115.8C383.7,117.5 381.0,122.5 379.5,125.9C378.0,129.2 377.0,132.6 375.7,135.9C374.5,139.2 372.8,143.0 372.0,145.9C371.1,148.8 370.9,152.0 370.7,153.2M351.9,139.7C352.1,141.1 352.7,146.2 353.1,148.4C353.6,150.7 354.2,152.4 354.4,153.2M383.3,104.5C384.3,105.6 387.2,107.9 389.5,110.8C391.8,113.7 395.0,118.3 397.1,122.1C399.1,125.9 401.0,129.8 402.1,133.4C403.1,136.9 403.5,140.1 403.3,143.4C403.1,146.7 401.2,151.6 400.8,153.2M61.6,118.2C61.1,119.7 58.3,123.5 58.9,127.0C59.5,130.5 63.7,135.7 65.1,139.2C66.4,142.7 66.5,146.5 66.8,148.0M82.6,118.2C82.1,120.0 80.2,124.9 79.9,128.7C79.6,132.5 80.7,138.9 80.8,141.0M255.6,143.3C255.4,144.5 253.9,148.3 254.4,150.8C254.8,153.3 256.4,156.1 258.1,158.4C259.8,160.7 262.3,163.2 264.4,164.6C266.5,166.1 268.4,167.0 270.7,167.1C273.0,167.3 275.9,166.6 278.2,165.4C280.5,164.1 282.9,161.2 284.5,159.6C286.1,158.0 287.2,156.5 287.7,155.8M249.3,132.0C249.5,133.5 251.0,137.9 250.6,140.8C250.2,143.7 246.6,148.5 246.8,149.6C247.0,150.6 250.8,146.0 251.8,147.1C252.9,148.1 252.5,153.5 253.1,155.8C253.7,158.1 255.2,160.0 255.6,160.9M287.0,133.3C287.8,134.5 290.7,138.3 292.0,140.8C293.3,143.3 293.5,146.5 294.5,148.3C295.5,150.1 298.0,150.8 297.8,151.4C297.6,152.1 293.8,151.3 293.3,152.1C292.7,152.8 295.1,155.2 294.5,155.8C293.9,156.5 290.3,155.8 289.5,155.8M269.4,137.0C268.6,138.1 265.5,141.0 264.4,143.3C263.3,145.6 262.6,148.5 262.6,150.8C262.6,153.1 264.1,156.1 264.4,157.1M270.7,135.8C271.7,136.0 275.5,136.0 276.9,137.0C278.4,138.1 279.0,141.2 279.5,142.0M261.9,140.8C261.5,142.0 259.6,145.8 259.4,148.3C259.2,150.8 260.4,154.6 260.6,155.8M271.9,155.8C272.5,156.5 274.4,159.6 275.7,159.6C276.9,159.6 278.8,156.5 279.5,155.8M287.6,167.0C287.7,168.3 288.1,171.8 287.8,174.5C287.5,177.2 286.1,181.8 285.8,183.3M289.5,165.7C289.7,167.0 289.9,171.0 290.8,173.3C291.6,175.6 293.1,178.7 294.5,179.5C296.0,180.4 298.5,179.1 299.6,178.3C300.6,177.5 300.6,175.2 300.8,174.5M304.6,177.0C305.4,178.3 308.6,182.1 309.6,184.6C310.6,187.1 310.6,190.8 310.9,192.1M272.0,212.2C272.6,213.2 274.5,216.6 275.7,218.4C277.0,220.3 278.9,222.4 279.5,223.2M329.3,177.0C328.7,176.7 327.0,175.3 325.9,175.2C324.8,175.1 323.0,175.7 322.8,176.4C322.6,177.1 323.6,178.4 324.7,179.5C325.7,180.7 328.5,182.7 329.3,183.3M366.9,153.2C367.2,154.5 368.3,158.4 368.2,160.7C368.1,163.0 366.7,166.0 366.4,167.0M370.7,153.2C370.5,154.2 370.1,157.4 369.5,159.5C368.8,161.6 367.4,164.7 366.9,165.7M348.1,183.3C349.0,182.3 351.3,178.5 353.1,177.0C354.9,175.6 357.7,174.8 358.9,174.8C360.2,174.8 361.0,175.8 360.7,177.0C360.3,178.3 358.4,180.6 356.9,182.1C355.4,183.5 352.7,185.2 351.9,185.8M329.3,178.3C329.9,179.1 332.2,181.8 333.1,183.3C333.9,184.8 334.1,186.4 334.3,187.1M330.6,190.8C331.2,190.0 332.4,187.0 334.3,185.8C336.2,184.7 339.1,183.9 341.8,183.9C344.6,183.9 348.2,184.7 350.6,185.8C353.1,187.0 355.0,188.7 356.4,190.8C357.8,192.9 358.7,195.9 358.9,198.4C359.1,200.9 357.9,204.6 357.7,205.9M333.1,200.9C333.5,202.1 333.9,206.6 335.6,208.4C337.2,210.2 340.6,211.5 343.1,211.7C345.6,211.9 348.4,210.8 350.6,209.7C352.8,208.5 355.4,205.5 356.4,204.6M336.8,212.2C336.4,213.2 334.5,216.6 334.3,218.4C334.1,220.3 335.4,222.4 335.6,223.2M350.6,210.9C351.3,211.8 354.0,213.9 354.4,215.9C354.8,218.0 353.3,222.0 353.1,223.2M372.6,184.6C372.9,185.4 374.6,188.1 374.5,189.6C374.4,191.1 373.1,192.2 372.0,193.4C370.8,194.5 368.4,196.0 367.7,196.5M372.6,184.6C373.7,184.6 377.5,184.0 379.5,184.6C381.5,185.1 383.7,187.2 384.5,187.7M383.9,182.1C384.4,182.8 385.7,185.5 387.0,186.4C388.4,187.4 391.2,187.5 392.0,187.7M392.0,187.7C393.0,187.0 396.6,183.2 397.8,183.3C399.1,183.4 399.1,186.9 399.6,188.3C400.0,189.8 400.2,191.5 400.3,192.1M400.3,192.1C400.9,192.5 403.9,193.8 404.1,194.6C404.3,195.4 401.5,195.9 401.6,197.1C401.7,198.4 404.5,201.1 404.6,202.1C404.7,203.2 402.5,203.2 402.1,203.4M387.0,214.7C386.6,215.5 385.3,218.3 384.5,219.7C383.7,221.1 382.4,222.6 382.0,223.2M394.5,213.4C394.8,214.3 395.8,216.8 395.8,218.4C395.8,220.1 394.8,222.4 394.5,223.2M397.1,212.2C398.1,212.6 401.7,214.5 403.3,214.7C405.0,214.9 406.5,213.6 407.1,213.4M394.5,215.9C395.4,216.4 397.9,217.9 399.6,218.4C401.2,219.0 403.7,219.1 404.6,219.2M266.9,223.2C269.0,224.2 275.3,227.4 279.5,229.5C283.7,231.6 287.4,233.0 292.0,235.7C296.6,238.5 304.6,244.1 307.1,245.8M275.7,223.2C276.4,224.0 277.8,227.0 279.5,228.2C281.2,229.4 284.7,229.9 285.8,230.2M279.5,223.2C281.2,224.0 286.2,226.3 289.5,228.2C292.9,230.1 296.4,231.8 299.6,234.5C302.7,237.2 306.7,245.2 308.3,244.5C310.0,243.9 311.1,233.9 309.6,230.7C308.1,227.6 302.1,227.0 299.6,225.7C297.1,224.5 295.4,223.6 294.5,223.2M322.8,245.2C323.4,245.1 326.2,244.0 326.5,244.5C326.9,245.1 324.2,247.5 324.7,248.3C325.1,249.1 328.5,249.3 329.3,249.5M341.8,230.7C341.8,231.8 340.5,235.1 341.3,237.0C342.2,238.9 345.0,241.0 346.9,242.0C348.7,243.1 351.6,243.9 352.6,243.3C353.7,242.6 353.5,240.1 353.1,238.3C352.8,236.4 351.5,233.4 350.6,232.0C349.8,230.5 348.5,229.9 348.1,229.5M353.1,227.0C354.0,226.5 356.5,224.2 358.2,224.5C359.8,224.7 362.5,227.0 363.2,228.2C363.8,229.5 363.2,231.4 361.9,232.0C360.7,232.5 356.7,231.6 355.6,231.5M366.9,225.7C367.6,225.5 369.5,224.2 370.7,224.5C372.0,224.7 373.2,225.5 374.5,227.0C375.7,228.4 377.6,232.2 378.2,233.2M379.5,223.2C379.7,224.0 379.7,227.0 380.7,228.2C381.8,229.5 383.9,230.5 385.8,230.7C387.6,230.9 390.6,230.7 392.0,229.5C393.5,228.2 394.1,224.2 394.5,223.2M335.6,252.1C336.4,251.3 338.5,248.6 340.6,247.7C342.7,246.7 345.8,246.3 348.1,246.4C350.4,246.5 352.6,247.1 354.4,248.3C356.2,249.4 358.2,252.5 358.9,253.3M334.3,255.8C334.2,256.9 333.6,260.0 333.8,262.1C334.0,264.2 334.4,266.8 335.6,268.4C336.7,270.0 338.7,271.2 340.6,271.6C342.5,272.0 345.8,271.0 346.9,270.9M329.3,251.4C329.8,251.2 331.5,250.0 332.4,250.2C333.4,250.4 335.0,252.0 335.1,252.7C335.2,253.4 333.4,254.3 333.1,254.6M353.8,248.3C354.2,248.0 355.5,246.3 356.3,246.4C357.0,246.5 357.9,248.1 358.2,248.9C358.4,249.8 357.7,251.0 357.7,251.4M358.9,253.3C359.8,253.4 362.7,254.0 364.4,253.9C366.2,253.8 368.6,252.9 369.5,252.7M360.7,258.3C361.7,258.7 364.8,260.2 366.9,260.8C369.0,261.5 371.5,262.3 373.2,262.1C374.9,261.9 376.4,260.0 377.0,259.6M373.2,251.4C373.8,252.4 375.8,255.3 376.5,257.1C377.1,258.9 376.9,261.3 377.0,262.1M220.6,118.4C221.7,119.6 224.6,123.8 226.9,125.9C229.2,128.0 233.2,130.1 234.5,130.9M216.9,120.9C217.3,121.9 218.1,126.3 219.4,127.2C220.6,128.0 223.6,126.1 224.4,125.9M282.1,104.6C283.0,105.8 285.7,109.8 287.1,112.1C288.6,114.4 290.3,117.3 290.9,118.4M281.9,214.6C284.4,214.3 291.9,213.2 296.9,212.7C302.0,212.2 309.5,211.6 312.0,211.4M284.4,224.6C286.1,224.8 291.7,225.4 294.4,225.9C297.2,226.3 299.7,226.9 300.7,227.1M300.7,229.6C300.8,230.9 301.7,235.1 301.5,237.2C301.2,239.2 299.8,241.3 299.5,242.2M309.5,230.9C309.6,232.1 309.7,235.9 310.2,238.4C310.8,240.9 312.2,244.7 312.6,245.9M126.3,55.3C126.7,55.5 128.1,56.5 128.8,56.5C129.5,56.5 130.4,55.5 130.7,55.3M63.2,32.0L60.7,38.3"/>
<path style="stroke-width:calc(var(--k,1)*1.45px)" d="M217.3,126.3C218.0,127.1 219.5,129.6 221.6,130.8C223.6,132.0 228.3,133.2 229.6,133.7M381.6,112.8C380.8,114.0 378.1,117.4 376.4,120.1C374.7,122.8 373.1,126.3 371.6,128.9C370.1,131.6 368.7,133.8 367.7,136.1C366.6,138.4 365.7,141.6 365.3,142.7M300.1,213.2L302.4,220.1M214.3,68.6C215.7,70.2 220.3,74.9 223.0,78.4C225.8,81.9 228.4,86.1 230.7,89.7C233.0,93.3 235.6,97.4 236.9,100.0C238.2,102.7 238.2,104.5 238.5,105.4M219.2,94.8C220.5,96.4 224.1,102.4 226.9,104.4C229.7,106.4 233.8,107.3 235.9,106.8C238.0,106.3 238.9,102.2 239.5,101.2"/>
<path style="stroke-width:calc(var(--k,1)*1.56px)" d="M42.2,32.3C42.0,32.2 41.1,31.5 40.6,31.6C40.1,31.8 39.5,32.5 39.3,33.3C39.2,34.1 39.9,35.5 39.8,36.4C39.8,37.4 39.4,38.4 39.1,38.9C38.8,39.5 38.0,39.7 37.8,39.8M143.4,49.8C143.7,49.2 144.6,46.6 145.6,46.1C146.6,45.6 148.4,45.9 149.1,46.8C149.9,47.8 150.5,50.3 150.1,51.8C149.8,53.4 148.0,55.8 147.1,56.1C146.2,56.4 145.2,54.6 144.6,53.6C144.0,52.6 143.6,50.5 143.4,49.8M214.9,23.5C215.2,23.0 216.3,21.0 217.1,20.7C217.9,20.5 219.4,21.1 219.6,22.0C219.9,22.8 218.8,25.1 218.6,25.7M203.3,61.5C203.9,61.9 205.2,64.0 206.5,64.0C207.7,64.0 210.1,61.9 210.9,61.5M204.6,62.8C205.1,63.1 206.7,64.9 207.7,64.9C208.7,64.9 210.1,63.1 210.6,62.8M229.3,29.5C231.0,29.2 236.0,27.4 239.3,27.6C242.7,27.8 246.6,28.8 249.4,30.8C252.2,32.8 255.0,36.2 256.3,39.5C257.6,42.9 257.8,47.3 257.2,50.8C256.5,54.4 254.5,58.3 252.1,60.9C249.8,63.5 246.1,65.7 243.1,66.5C240.1,67.4 236.6,66.6 234.3,65.9C232.0,65.2 230.1,62.8 229.3,62.1M229.3,49.6C230.1,49.1 232.4,46.9 234.3,46.4C236.2,46.0 239.0,46.1 240.6,47.1C242.2,48.0 243.6,50.4 243.9,52.1C244.1,53.8 242.8,56.2 241.8,57.1C240.9,58.1 238.7,57.7 238.1,57.9M344.4,60.9C345.2,60.7 347.9,59.5 349.4,59.6C350.9,59.7 352.7,61.3 353.4,61.6M371.9,70.8C373.0,71.3 376.3,71.5 378.2,73.4C380.1,75.2 382.2,79.6 383.2,82.1C384.2,84.6 384.2,87.4 384.5,88.4M370.7,79.6C371.7,80.5 374.8,83.6 376.9,84.6C379.0,85.7 382.2,85.7 383.2,85.9M70.7,147.4C71.8,147.0 75.5,144.5 77.0,144.7C78.4,144.8 78.2,148.0 79.5,148.4C80.7,148.9 83.7,147.4 84.5,147.2M141.8,98.3C142.3,99.9 143.3,104.7 144.4,108.3C145.4,111.8 147.3,115.8 148.1,119.6C149.0,123.4 149.0,127.7 149.4,130.9C149.8,134.0 150.1,135.5 150.6,138.4C151.2,141.3 152.2,146.0 152.6,148.4C153.1,150.9 153.1,152.4 153.1,153.2M200.3,89.5C201.7,89.8 205.5,91.3 208.3,91.4C211.1,91.5 214.4,90.7 217.1,90.1C219.8,89.5 223.4,88.0 224.7,87.6M218.4,127.1C218.8,127.6 220.2,129.8 220.9,129.9C221.6,129.9 222.1,127.3 222.8,127.4C223.4,127.4 224.3,129.9 224.7,130.4M229.3,107.0C230.1,107.2 233.1,107.8 234.3,108.3C235.6,108.8 236.4,109.9 236.8,110.2M229.3,133.4C229.9,134.4 232.6,137.2 233.1,139.7C233.5,142.2 232.0,147.0 231.8,148.4M304.6,97.0L309.6,108.3M307.7,95.7L312.1,107.0M310.9,94.5L313.6,102.0M270.7,120.8C271.3,120.6 273.2,119.4 274.5,119.6C275.7,119.8 277.8,121.1 278.2,122.1C278.7,123.1 277.9,125.2 277.0,125.9C276.1,126.5 273.8,126.7 272.7,125.9C271.7,125.0 271.0,121.7 270.7,120.8M329.3,119.6C328.1,120.6 325.0,123.6 322.1,125.9C319.3,128.2 315.2,131.3 312.1,133.4C309.0,135.5 305.0,137.2 303.3,138.4C301.7,139.7 299.8,139.7 302.1,140.9C304.4,142.2 313.8,145.5 317.1,145.9C320.5,146.4 320.1,145.1 322.1,143.4C324.2,141.8 328.1,137.2 329.3,135.9M354.4,83.2L358.2,89.5M359.4,83.2L363.2,90.1M364.4,83.2L368.2,90.7M66.8,148.0C66.4,150.3 65.2,157.6 64.2,162.0C63.2,166.3 59.9,172.5 60.7,174.2C61.4,176.0 65.2,174.2 68.6,172.5C71.9,170.7 76.7,167.2 80.8,163.7C84.9,160.2 92.0,154.4 93.1,151.5C94.1,148.5 89.0,147.4 86.9,146.2C84.9,145.0 81.8,144.7 80.8,144.5M95.7,118.2C96.4,121.7 98.2,133.7 100.1,139.2C101.9,144.7 104.4,148.9 107.1,151.5C109.7,154.0 113.3,154.8 115.8,154.3C118.3,153.7 120.8,151.0 122.1,148.0C123.4,144.9 124.0,140.7 123.9,135.7C123.7,130.7 121.5,121.1 121.1,118.2M146.4,118.2C146.9,120.5 148.0,127.2 149.1,132.2C150.1,137.2 151.7,143.3 152.6,148.0C153.4,152.6 152.8,158.9 154.3,160.2C155.8,161.5 158.4,158.2 161.3,155.8C164.2,153.5 169.5,148.7 171.8,146.2C174.1,143.7 174.7,141.8 175.3,141.0M164.8,125.2C166.0,127.2 170.1,134.8 171.8,137.5C173.6,140.1 174.7,140.4 175.3,141.0M171.8,118.2C172.4,119.7 173.6,124.0 175.3,127.0C177.1,129.9 180.6,135.1 182.3,135.7C184.1,136.3 186.4,133.4 185.8,130.5C185.2,127.5 180.0,120.2 178.8,118.2M280.7,143.3C281.0,142.8 281.6,140.6 282.6,140.2C283.5,139.7 285.5,139.8 286.4,140.8C287.2,141.7 287.8,144.1 287.7,145.8C287.6,147.5 286.6,149.8 285.7,150.8C284.9,151.9 283.1,151.9 282.6,152.1M269.4,148.3C270.0,148.1 271.9,146.8 273.2,147.1C274.4,147.3 276.3,149.1 276.9,149.6M270.7,154.6C271.3,155.0 273.0,157.1 274.4,157.1C275.9,157.1 278.3,155.4 279.5,154.6C280.6,153.7 281.1,152.5 281.5,152.1M287.7,155.8C288.4,156.7 290.2,159.2 292.0,160.9C293.8,162.5 296.4,164.2 298.3,165.9C300.2,167.6 302.5,170.1 303.3,170.9M294.5,164.5C295.6,165.5 299.1,168.7 300.8,170.8C302.5,172.9 304.0,176.0 304.6,177.0M300.8,170.8C301.4,172.0 303.5,175.8 304.6,178.3C305.6,180.8 307.1,183.7 307.1,185.8C307.1,187.9 305.8,190.2 304.6,190.8C303.3,191.5 300.4,189.8 299.6,189.6M288.3,187.1C287.4,188.3 284.9,191.9 283.3,194.6C281.6,197.3 279.9,200.5 278.2,203.4C276.6,206.3 274.5,209.7 273.2,212.2C272.0,214.7 270.5,216.8 270.7,218.4C270.9,220.1 273.8,221.6 274.5,222.2M310.9,192.1C310.4,193.4 309.6,197.3 308.3,199.6C307.1,201.9 305.6,204.0 303.3,205.9C301.0,207.8 296.0,210.1 294.5,210.9M280.7,210.9C282.6,210.6 288.1,209.6 292.0,209.0C296.0,208.5 300.4,208.1 304.6,207.8C308.8,207.5 314.4,206.4 317.1,207.2C319.8,207.9 319.6,210.1 320.9,212.2C322.1,214.3 324.0,218.4 324.7,219.7M282.0,218.4C284.1,218.2 290.4,217.5 294.5,217.2C298.7,216.9 303.3,216.8 307.1,216.6C310.9,216.4 315.5,216.0 317.1,215.9M274.5,215.9C275.3,216.6 277.6,219.3 279.5,219.7C281.4,220.1 284.7,218.7 285.8,218.4M309.6,178.3C309.5,176.8 308.9,172.2 309.1,169.5C309.3,166.8 309.7,164.2 310.9,162.0C312.0,159.8 314.0,157.5 315.9,156.3C317.8,155.2 320.3,154.8 322.1,155.1C324.0,155.4 326.1,156.9 327.2,158.2C328.2,159.6 328.5,162.3 328.4,163.2C328.3,164.2 327.3,164.5 326.7,164.0C326.0,163.5 325.6,161.1 324.7,160.1C323.7,159.1 322.2,158.2 320.9,158.2C319.6,158.2 317.9,158.8 316.6,160.1C315.4,161.4 314.0,163.6 313.4,165.7C312.7,167.9 312.7,170.6 312.9,173.3C313.1,176.0 314.5,179.1 314.6,182.1C314.7,185.0 314.0,188.7 313.4,190.8C312.7,192.9 311.3,194.0 310.9,194.6M351.9,153.2C351.5,154.5 350.2,157.8 349.4,160.7C348.5,163.7 346.4,169.3 346.9,170.8C347.3,172.2 349.4,170.6 351.9,169.5C354.4,168.5 359.6,166.0 361.9,164.5C364.2,163.0 364.8,162.6 365.7,160.7C366.5,158.8 366.7,154.5 366.9,153.2M374.5,153.2C374.7,154.5 374.9,158.0 375.7,160.7C376.6,163.4 378.0,167.1 379.5,169.5C381.0,171.9 382.4,174.7 384.5,175.3C386.6,175.9 389.5,174.9 392.0,173.3C394.5,171.7 397.7,168.5 399.6,165.7C401.4,163.0 402.6,159.1 403.3,157.0C404.1,154.9 404.0,153.8 404.1,153.2M329.3,200.9C329.9,201.1 332.2,201.3 333.1,202.1C333.9,203.0 334.5,204.9 334.3,205.9C334.1,206.9 332.6,208.1 331.8,208.4C331.0,208.7 329.7,208.0 329.3,207.9M353.1,213.4C353.9,213.2 356.5,211.9 357.7,212.2C358.8,212.5 360.1,214.1 360.2,215.3C360.2,216.5 359.1,218.7 358.2,219.2C357.2,219.7 355.2,219.4 354.4,218.4C353.6,217.5 353.3,214.3 353.1,213.4M365.1,203.4C365.4,203.0 366.0,201.2 366.9,200.9C367.9,200.6 370.0,200.7 370.7,201.5C371.5,202.3 371.9,204.7 371.5,205.9C371.0,207.0 369.2,208.3 368.2,208.4C367.2,208.5 366.0,207.4 365.4,206.5C364.9,205.7 365.1,203.9 365.1,203.4M373.2,194.6C373.0,195.9 371.8,199.8 372.0,202.1C372.2,204.4 373.2,206.5 374.5,208.4C375.7,210.3 377.4,212.4 379.5,213.4C381.6,214.5 384.5,214.9 387.0,214.7C389.5,214.5 392.2,213.6 394.5,212.2C396.8,210.7 399.6,207.8 400.8,205.9C402.1,204.0 401.9,201.7 402.1,200.9M387.6,203.4C387.7,204.0 387.7,206.4 388.3,207.2C388.8,207.9 390.2,208.3 390.8,207.9C391.4,207.5 391.8,205.2 392.0,204.6M375.7,208.4C376.1,208.8 377.6,210.9 378.2,210.9C378.9,210.9 378.9,208.2 379.5,208.4C380.1,208.6 381.2,212.0 382.0,212.2C382.8,212.4 383.4,209.5 384.0,209.7C384.6,209.9 385.5,212.8 385.8,213.4M404.0,213.4C404.5,213.1 405.9,211.5 407.1,211.5C408.2,211.5 410.1,212.4 410.9,213.4C411.6,214.5 412.0,216.6 411.6,217.8C411.2,219.0 409.5,220.2 408.3,220.5C407.2,220.7 405.3,220.4 404.6,219.2C403.9,218.0 404.1,214.4 404.0,213.4M329.3,225.7C330.1,226.1 332.6,228.0 334.3,228.2C336.0,228.4 337.5,227.0 339.3,227.0C341.2,227.0 343.5,228.6 345.6,228.2C347.7,227.8 350.8,225.1 351.9,224.5M346.9,263.4C347.3,263.2 348.6,262.7 349.4,262.7C350.1,262.8 351.0,263.5 351.4,263.6M359.4,264.6C360.5,265.0 363.6,266.8 365.7,267.1C367.8,267.4 370.2,267.2 372.0,266.6C373.8,266.0 375.7,263.9 376.5,263.4M378.2,257.1C379.5,256.9 383.0,255.9 385.8,255.8C388.5,255.7 393.5,255.8 394.5,256.4C395.6,257.1 393.9,258.9 392.0,259.6C390.2,260.3 385.6,261.3 383.3,260.8C381.0,260.4 379.1,257.7 378.2,257.1M379.5,262.1C380.7,262.3 384.3,263.1 387.0,263.4C389.7,263.6 394.6,262.7 395.8,263.4C397.0,264.0 395.7,266.2 394.0,267.1C392.4,268.1 388.0,269.1 385.8,269.1C383.5,269.1 381.8,268.3 380.7,267.1C379.7,265.9 379.7,262.9 379.5,262.1M267.1,98.3C267.7,98.9 269.6,101.9 270.8,102.1C272.1,102.3 274.0,100.0 274.6,99.6M278.1,219.6C280.2,219.8 286.3,220.7 290.7,220.8C295.1,220.9 300.5,220.4 304.5,220.2C308.4,220.0 312.8,219.7 314.5,219.6M271.8,213.3C272.7,215.2 274.8,221.5 276.9,224.6C279.0,227.7 281.5,229.8 284.4,232.1C287.3,234.4 292.8,237.4 294.4,238.4M295.7,208.3C297.2,207.0 301.8,203.7 304.5,200.8C307.2,197.8 310.3,193.7 312.0,190.7C313.7,187.8 314.1,184.5 314.5,183.2M59.4,33.3C59.1,34.3 58.1,37.5 57.5,39.5C57.0,41.6 56.5,44.8 56.3,45.8M61.3,33.9L60.0,40.2M58.2,50.8C58.5,51.8 59.9,55.4 60.0,56.5C60.1,57.5 59.0,57.0 58.8,57.1M56.3,51.5L57.5,55.9"/>
<path style="stroke-width:calc(var(--k,1)*1.58px)" d="M298.1,213.6C298.5,214.8 299.9,219.3 300.1,220.8C300.3,222.2 299.4,222.0 299.3,222.2"/>
<path style="stroke-width:calc(var(--k,1)*1.65px)" d="M357.9,78.5C358.3,79.9 359.3,84.5 360.2,86.6C361.2,88.7 363.0,90.5 363.5,91.2M363.5,77.6C363.8,78.9 365.1,83.4 365.8,85.3C366.5,87.2 367.4,88.5 367.7,89.1"/>
<path style="stroke-width:calc(var(--k,1)*1.68px)" d="M210.9,38.3C211.2,38.8 211.9,40.7 212.7,41.4C213.6,42.2 215.4,42.5 215.9,42.7M354.4,59.9C355.2,59.7 357.7,58.5 359.4,58.6C361.1,58.7 363.8,60.1 364.7,60.4M345.6,61.9C346.0,62.0 347.3,62.6 348.1,62.6C349.0,62.7 350.2,62.2 350.6,62.1M343.1,64.6C343.9,64.4 346.6,63.0 348.1,63.3C349.6,63.6 351.6,65.4 351.9,66.5C352.1,67.5 350.6,69.3 349.3,69.6C348.1,69.9 345.4,69.2 344.3,68.3C343.3,67.5 343.3,65.2 343.1,64.6M345.6,73.4C346.4,74.2 348.7,77.7 350.6,78.4C352.5,79.0 354.6,77.7 356.9,77.1C359.2,76.5 362.3,75.7 364.4,74.6C366.5,73.6 368.6,71.5 369.4,70.8M349.3,78.4C350.2,80.0 352.7,85.9 354.4,88.4C356.0,90.9 358.5,92.4 359.4,93.2M66.4,102.0C67.6,102.3 70.6,103.9 73.2,103.9C75.8,103.9 79.5,103.0 82.0,102.0C84.5,101.1 87.2,98.9 88.3,98.3M379.5,142.2L384.5,138.4M378.2,148.4L388.3,137.2M382.0,151.0L393.3,135.9M387.0,152.2L398.3,134.6M393.3,152.2L402.1,138.4M297.7,183.3L304.6,189.6M299.6,182.1L305.8,188.3M307.1,190.8C306.7,192.1 305.8,196.1 304.6,198.4C303.3,200.7 301.7,202.8 299.6,204.6C297.5,206.5 294.8,208.4 292.0,209.7C289.3,210.9 285.1,211.5 283.3,212.2C281.4,212.8 281.2,213.2 280.7,213.4M338.1,202.1C338.4,201.9 339.3,200.8 340.0,200.9C340.6,200.9 341.5,202.1 341.8,202.4M348.1,202.8C348.5,202.6 349.9,201.5 350.6,201.5C351.4,201.5 352.3,202.6 352.6,202.8M377.0,203.4C377.4,203.3 378.7,202.6 379.5,202.8C380.2,203.0 381.2,204.3 381.5,204.6M355.0,260.8C355.4,260.6 356.8,259.4 357.5,259.6C358.3,259.8 359.4,261.3 359.4,262.1C359.4,262.9 358.3,264.4 357.5,264.6C356.8,264.8 355.4,264.0 355.0,263.4C354.6,262.7 355.0,261.3 355.0,260.8M366.3,249.5C366.5,249.0 366.7,247.0 367.6,246.4C368.4,245.8 370.4,245.4 371.3,245.8C372.3,246.2 373.2,248.0 373.2,248.9C373.2,249.9 372.3,251.1 371.3,251.6C370.4,252.0 368.4,251.9 367.6,251.6C366.7,251.2 366.5,249.9 366.3,249.5M264.6,83.3C265.8,83.0 269.6,81.6 272.1,82.0C274.6,82.4 276.7,83.9 279.6,85.8C282.5,87.6 287.2,91.4 289.7,93.3C292.1,95.2 293.5,96.4 294.3,97.1M285.6,192.0C285.0,193.2 283.3,196.8 281.9,199.5C280.4,202.2 278.3,206.0 276.9,208.3C275.4,210.6 273.7,212.5 273.1,213.3M291.9,204.5C293.4,203.5 298.2,200.6 300.7,198.3C303.2,196.0 305.5,193.2 307.0,190.7C308.4,188.2 309.1,184.5 309.5,183.2"/>
<path style="stroke-width:calc(var(--k,1)*1.72px)" d="M161.2,128.8C162.1,130.6 164.8,136.6 166.5,139.6C168.3,142.6 171.0,145.6 171.8,146.8"/>
<path style="stroke-width:calc(var(--k,1)*1.8px)" d="M346.8,70.8C347.9,70.4 351.0,68.4 353.1,68.3C355.2,68.2 357.1,70.4 359.4,70.2C361.7,70.0 364.8,68.0 366.9,67.1C369.0,66.1 371.1,65.0 371.9,64.6M66.9,130.9C67.2,132.8 67.9,138.8 68.2,142.2C68.5,145.5 68.8,149.5 68.9,151.0M154.4,135.9C154.7,136.5 155.8,139.5 156.3,139.7C156.8,139.9 157.1,136.7 157.5,137.2C157.9,137.6 158.4,141.8 158.8,142.2C159.2,142.6 159.7,139.2 160.0,139.7C160.4,140.1 161.3,143.4 160.7,144.7C160.1,145.9 157.1,146.8 156.4,147.2M171.3,128.4C171.6,128.9 172.7,131.4 173.2,131.5C173.7,131.6 174.0,128.8 174.5,129.0C174.9,129.2 175.5,132.6 176.0,132.8C176.5,132.9 177.0,129.7 177.5,129.9C178.0,130.0 178.7,133.0 179.0,133.6M222.1,95.7L229.3,102.0M290.8,225.7C291.2,226.3 292.7,229.3 293.3,229.5C293.9,229.7 293.9,226.8 294.5,227.0C295.2,227.2 296.4,230.5 297.1,230.7C297.7,230.9 298.1,228.6 298.3,228.2M199.3,88.3C201.2,88.5 206.8,89.9 210.6,89.5C214.4,89.1 220.0,86.4 221.9,85.8M201.8,68.2C201.6,69.9 200.9,74.9 200.6,78.2C200.3,81.6 200.1,86.6 199.9,88.3"/>
<path style="stroke-width:calc(var(--k,1)*1.92px)" d="M37.6,39.3C37.7,39.4 38.1,40.1 38.3,40.1C38.5,40.1 38.8,39.4 38.8,39.3M329.3,38.3C328.9,38.6 327.5,39.2 327.2,40.2C326.9,41.1 327.1,43.1 327.4,43.9C327.8,44.8 329.0,45.0 329.3,45.2M356.3,60.4C356.7,60.6 357.9,61.5 358.8,61.6C359.7,61.8 361.2,61.2 361.7,61.1M229.3,125.9C229.9,126.7 231.8,129.0 233.1,130.9C234.3,132.8 236.6,134.9 236.8,137.2C237.0,139.5 235.2,142.6 234.3,144.7C233.5,146.8 232.2,148.9 231.8,149.7M356.4,100.8C357.5,101.0 360.6,101.3 363.2,102.0C365.8,102.8 369.2,104.4 372.0,105.2C374.7,105.9 377.6,106.5 379.5,106.5C381.4,106.5 382.6,105.4 383.3,105.2M359.4,115.8C357.7,116.7 352.7,119.0 349.4,120.8C346.0,122.7 342.7,124.6 339.3,127.1C336.0,129.6 331.0,134.4 329.3,135.9M360.7,112.1C360.7,114.1 360.9,121.1 360.7,124.6C360.5,128.2 359.6,131.9 359.4,133.4M284.5,213.4C286.2,213.2 292.0,212.6 294.5,212.2C297.1,211.8 298.7,211.1 299.6,210.9M385.8,202.8C386.4,202.6 388.3,201.4 389.5,201.5C390.8,201.6 392.7,203.1 393.3,203.4M348.7,267.1C349.2,266.8 350.3,265.3 351.3,265.2C352.2,265.1 353.9,265.7 354.4,266.5C354.9,267.3 354.9,269.4 354.4,270.3C353.9,271.1 352.2,271.7 351.3,271.6C350.3,271.5 349.2,270.4 348.7,269.6C348.3,268.9 348.7,267.5 348.7,267.1M219.4,68.2C220.6,69.5 224.8,73.0 226.9,75.7C229.0,78.4 231.1,83.0 231.9,84.5M242.0,101.4L244.5,109.6M244.5,101.1L247.6,110.9M247.6,100.8L250.8,111.5M278.4,68.2C278.8,69.5 280.2,73.2 280.9,75.7C281.5,78.2 281.9,82.0 282.1,83.3M296.9,183.2C297.6,184.0 299.0,187.2 300.7,188.2C302.4,189.3 305.5,189.9 307.0,189.5C308.4,189.1 309.1,186.3 309.5,185.7M298.2,184.5C299.0,184.9 301.5,186.8 303.2,187.0C304.9,187.2 307.4,185.9 308.2,185.7"/>
<path style="stroke-width:calc(var(--k,1)*2.04px)" d="M72.0,108.3C71.8,110.4 71.2,116.7 70.7,120.8C70.2,125.0 69.2,129.2 68.9,133.4C68.7,137.6 69.2,142.6 69.5,145.9C69.7,149.2 70.1,152.0 70.2,153.2M140.6,83.2C140.4,84.5 139.6,88.4 139.3,90.7C139.0,93.0 138.4,95.7 138.8,97.0C139.3,98.3 141.3,98.0 141.8,98.3M157.5,105.8C158.1,107.5 159.5,112.5 160.7,115.8C161.8,119.2 163.0,122.5 164.4,125.9C165.9,129.2 168.6,134.2 169.5,135.9M79.9,146.2C80.5,146.9 83.3,149.4 83.4,150.6C83.6,151.7 81.2,152.8 80.8,153.2M172.7,127.0C173.3,127.5 175.9,129.4 176.2,130.5C176.5,131.5 174.0,132.5 174.4,133.1C174.9,133.7 178.1,133.8 178.8,134.0"/>
<path style="stroke-width:calc(var(--k,1)*2.16px)" d="M360.0,79.0L362.1,86.5M161.9,130.9C162.5,132.6 164.6,138.0 165.7,140.9C166.7,143.8 167.8,147.2 168.2,148.4M68.6,118.2C68.7,120.5 69.4,127.5 69.4,132.2C69.4,136.9 68.7,143.9 68.6,146.2"/>
<path style="stroke-width:calc(var(--k,1)*2.28px)" d="M169.5,99.5C169.6,100.8 169.7,104.5 170.2,107.0C170.7,109.5 171.6,112.3 172.7,114.6C173.8,116.9 176.3,119.8 177.0,120.8M287.6,86.3C288.4,86.7 290.3,88.3 292.0,88.2C293.7,88.1 296.8,86.1 297.8,85.7M71.2,148.0C71.8,148.7 74.7,151.3 74.7,152.3C74.7,153.3 71.0,153.2 71.2,154.1C71.3,155.0 75.7,156.7 75.6,157.6C75.4,158.5 71.2,159.0 70.3,159.3M154.3,135.7C154.9,136.6 157.7,139.5 157.8,141.0C158.0,142.4 154.9,143.6 155.2,144.5C155.5,145.3 159.4,145.2 159.6,146.2C159.7,147.2 156.6,149.8 156.1,150.6M290.7,225.9C291.1,226.5 292.5,229.4 293.2,229.6C293.8,229.8 293.8,226.8 294.4,227.1C295.1,227.4 296.3,231.3 296.9,231.5C297.6,231.7 298.0,228.9 298.2,228.4"/>
<path style="stroke-width:calc(var(--k,1)*2.4px)" d="M301.1,63.4C301.4,64.9 302.5,69.6 303.3,72.2C304.2,74.7 305.6,77.6 306.1,78.7M353.1,79.6L355.6,87.1M217.1,95.7C218.0,96.8 220.1,99.9 222.1,102.0C224.2,104.1 228.1,107.2 229.3,108.3M229.3,88.2C229.9,89.5 231.8,93.7 233.1,95.7C234.3,97.8 235.8,99.3 236.8,100.8C237.9,102.2 238.9,103.9 239.3,104.5M206.8,115.9C207.9,116.9 211.2,119.6 213.1,122.2C215.0,124.7 216.7,128.3 218.1,130.9C219.6,133.6 221.3,137.0 221.9,138.2"/>
<path style="stroke-width:calc(var(--k,1)*2.64px)" d="M217.1,125.9C217.8,126.7 218.9,129.6 220.9,130.9C222.9,132.1 227.9,133.0 229.3,133.4M382.0,112.1C381.2,113.3 378.7,116.9 377.0,119.6C375.3,122.3 373.4,125.7 372.0,128.4C370.5,131.1 369.2,133.6 368.2,135.9C367.2,138.2 366.1,141.1 365.7,142.2M299.6,213.4L301.6,219.7M214.4,68.2C215.8,69.9 220.4,74.7 223.2,78.2C225.9,81.8 228.4,86.0 230.7,89.5C233.0,93.1 235.7,97.1 237.0,99.6C238.2,102.1 238.0,103.7 238.2,104.6M219.4,95.8C220.6,97.3 224.2,102.7 226.9,104.6C229.6,106.5 233.6,107.5 235.7,107.1C237.8,106.7 238.8,102.9 239.5,102.1"/>
<path style="stroke-width:calc(var(--k,1)*2.88px)" d="M298.2,213.3C298.6,214.6 300.5,219.4 300.7,220.8C300.9,222.3 299.7,221.9 299.5,222.1"/>
<path style="stroke-width:calc(var(--k,1)*3.0px)" d="M356.9,78.4C357.3,79.6 358.3,83.8 359.4,85.9C360.4,88.0 362.5,90.1 363.1,90.9M363.1,78.4C363.6,79.6 364.8,84.0 365.6,85.9C366.5,87.8 367.7,89.0 368.2,89.7"/>
<path style="stroke-width:calc(var(--k,1)*3.12px)" d="M161.3,128.7C162.2,130.5 164.8,136.3 166.6,139.2C168.3,142.1 170.9,145.0 171.8,146.2"/>
<path fill="#9b70e6" fill-opacity="0.38" stroke="none" d="M89.8,53.6C90.6,53.4 93.8,52.1 94.8,52.3C95.8,52.6 96.5,52.8 96.1,55.1C95.6,57.4 93.6,64.5 92.3,65.9C91.0,67.3 88.9,63.8 88.3,63.4Z"/>
<path fill="#9b70e6" fill-opacity="0.47" stroke="none" d="M152.6,134.0C154.0,133.7 158.4,130.2 161.3,132.2C164.2,134.2 170.8,142.7 170.1,146.2C169.3,149.7 159.1,152.0 156.9,153.2Z"/>
<path fill="#9b70e6" fill-opacity="0.53" stroke="none" d="M67.7,147.1C69.6,146.6 76.6,143.4 79.1,144.5C81.5,145.5 83.7,150.4 82.6,153.2C81.4,156.0 74.7,160.1 72.1,161.1C69.4,162.1 67.7,159.6 66.8,159.3ZM171.8,123.5C173.0,122.9 176.6,118.8 178.8,120.0C181.0,121.1 184.5,127.8 184.9,130.5C185.4,133.1 183.2,135.7 181.4,135.7C179.7,135.7 175.6,131.3 174.4,130.5ZM239.5,101.1C241.1,100.9 247.2,98.4 249.5,100.2C251.8,102.0 254.3,110.4 253.3,112.1C252.2,113.8 244.9,110.5 243.2,110.2Z"/>
<path fill="#9b70e6" fill-opacity="0.59" stroke="none" d="M304.3,96.4C305.5,96.0 309.9,92.9 311.5,93.9C313.1,94.8 314.2,99.5 314.0,102.0C313.8,104.5 310.9,107.8 310.2,108.9ZM215.6,127.2C216.9,127.4 221.3,126.6 223.2,128.4C225.0,130.3 227.8,136.6 226.9,138.2C226.1,139.8 219.6,138.2 218.1,138.2Z"/>
<path fill="#9b70e6" fill-opacity="0.65" stroke="none" d="M240.0,102.3C241.5,102.0 247.0,98.7 249.4,100.8C251.8,102.8 255.0,112.8 254.4,114.6C253.8,116.3 247.1,112.0 245.6,111.4Z"/>
<path fill="#9b70e6" fill-opacity="0.71" stroke="none" d="M346.8,62.7C347.6,62.6 350.4,61.7 351.2,62.1C352.1,62.5 352.5,64.6 351.9,65.2C351.2,65.8 348.2,65.7 347.5,65.8ZM297.1,182.3C298.3,182.2 302.9,180.2 304.6,181.4C306.3,182.6 308.0,188.0 307.3,189.6C306.7,191.2 301.9,190.8 300.8,191.1ZM288.3,223.2C289.7,223.2 295.8,222.4 297.1,223.2C298.3,224.0 296.8,227.6 295.8,228.2C294.8,228.8 291.6,227.2 290.8,227.0Z"/>
<path fill="#9b70e6" fill-opacity="0.83" stroke="none" d="M71.3,149.1C72.1,148.9 74.8,147.1 75.7,147.8C76.7,148.5 77.6,152.3 77.0,153.2C76.4,154.1 72.8,153.2 72.0,153.2ZM80.1,149.1C80.8,148.9 83.7,147.1 84.5,147.8C85.3,148.5 85.8,152.3 85.1,153.2C84.5,154.1 81.5,153.2 80.7,153.2ZM354.6,145.9C356.5,145.9 363.8,144.5 365.7,145.7C367.6,146.9 367.8,152.0 365.9,153.2C364.1,154.5 356.5,153.2 354.6,153.2Z"/>
<path fill="#9b70e6" fill-opacity="0.89" stroke="none" d="M351.9,83.2C355.4,83.2 370.1,81.9 373.2,83.2C376.4,84.5 372.8,89.7 370.7,90.7C368.6,91.8 363.2,90.1 360.7,89.5C358.2,88.8 356.5,87.4 355.6,87.0ZM354.4,153.2C356.3,153.2 363.9,152.4 365.7,153.2C367.5,154.0 366.9,157.3 365.2,158.2C363.5,159.2 357.2,158.8 355.6,159.0Z"/>
<path fill="#9b70e6" fill-opacity="0.92" stroke="none" d="M379.5,138.4C381.2,137.8 386.2,135.7 389.5,134.6C392.9,133.6 397.3,131.3 399.6,132.1C401.8,133.0 402.6,136.1 402.8,139.7C403.0,143.2 405.1,151.0 400.8,153.2C396.5,155.5 381.0,154.4 377.0,153.2C373.0,152.0 377.0,147.1 377.0,145.9Z"/>
<path fill="#9b70e6" fill-opacity="0.94" stroke="none" d="M329.3,38.3C329.8,38.4 331.6,38.1 332.3,38.9C333.0,39.8 333.4,42.1 333.3,43.3C333.3,44.5 332.7,45.4 332.1,46.1C331.4,46.7 329.8,46.9 329.3,47.1ZM366.3,64.6C367.0,64.4 369.7,62.9 370.7,63.3C371.6,63.7 372.4,66.3 371.9,67.1C371.4,67.9 368.3,68.1 367.5,68.3ZM324.7,122.1C325.4,121.6 328.5,117.2 329.3,119.0C330.1,120.7 329.9,130.4 329.3,132.8C328.7,135.2 326.5,133.3 325.9,133.4ZM372.0,106.3C372.4,106.3 374.3,106.2 374.7,106.5C375.1,106.9 374.9,108.3 374.5,108.5C374.0,108.8 372.4,108.3 372.0,108.3ZM377.6,105.2C378.1,105.2 380.2,105.0 380.7,105.4C381.3,105.8 381.2,107.4 380.7,107.8C380.2,108.1 378.2,107.6 377.7,107.5ZM329.3,125.2C330.0,126.0 333.6,127.6 333.6,129.9C333.6,132.2 330.0,137.5 329.3,139.0ZM383.5,116.1C384.5,115.8 388.1,114.0 389.5,114.6C390.9,115.2 392.2,117.7 392.0,119.6C391.8,121.5 389.7,124.6 388.3,125.9C386.8,127.1 384.3,126.9 383.5,127.1Z"/>
<path fill="#9b70e6" fill-opacity="1" stroke="none" d="M366.9,37.0C367.2,36.4 367.5,34.0 368.4,33.0C369.4,32.1 371.4,31.4 372.6,31.4C373.8,31.4 375.0,32.2 375.5,33.3C375.9,34.3 375.8,36.7 375.2,37.8C374.6,38.9 373.1,39.5 372.0,39.8C370.8,40.1 368.8,39.4 368.2,39.3ZM377.0,160.7C378.4,161.6 382.8,165.3 385.8,165.7C388.7,166.2 391.7,164.5 394.5,163.2C397.4,162.0 402.0,157.8 402.8,158.2C403.7,158.6 401.4,163.3 399.6,165.7C397.8,168.2 394.5,171.3 392.0,172.8C389.5,174.2 386.6,175.1 384.5,174.5C382.4,174.0 380.3,170.3 379.5,169.5Z"/></g></svg><!--SK1--></div>
<div class="a" id="btool" style="left:247.4px;top:498.6px;width:302.8px;height:30px;background:#232323;">
<div class="a" style="left:240.4px;top:3px;width:1px;height:24px;background:#3a3a3a"></div>
<div class="a" style="left:273.8px;top:3px;width:1px;height:24px;background:#3a3a3a"></div>
<svg style="left:-247.4px;top:-498.6px" width="800" height="558" viewBox="0 0 800 558">
<path d="M269,518.4 C268.6,513.8 265.6,511.6 262,511.6 V509 L256,513.2 L262,517.4 V514.8 C265,514.6 267.2,515.6 269,518.4Z" fill="#777"/>
<path d="M285,518.4 C285.4,513.8 288.4,511.6 292,511.6 V509 L298,513.2 L292,517.4 V514.8 C289,514.6 286.800,515.6 285,518.4Z" fill="#777"/>
<!-- brush/eraser toggle -->
<g><line x1="323.2" y1="505.6" x2="317" y2="510.8" stroke="#2b8fb0" stroke-width="2.6" stroke-linecap="round"/><circle cx="314.8" cy="513.8" r="1.9" fill="#2b8fb0"/><path d="M313.4,514 L312.4,515.8 L314.6,515.6Z" fill="#2b8fb0"/>
<g transform="translate(326.3,519.7) rotate(-42)"><rect x="-3" y="-2.4" width="6" height="4.8" fill="#c4c4c4"/></g>
<path d="M325,509.8 L328.600,511.400 L327.600,514.200 C327.400,512.400 326.400,510.800 325,509.800Z M320.400,521.600 L316.800,520 L317.600,517.200 C317.800,519 318.800,520.600 320.400,521.600Z" fill="#c4c4c4" stroke="#c4c4c4" stroke-width="0.5"/></g>
<!-- eyedropper -->
<g transform="translate(350.4,513.6) rotate(45)" fill="none" stroke="#f2f2f2"><rect x="-1.7" y="-1.8" width="3.4" height="7" rx="0.8" stroke-width="1.1"/><path d="M0,5.200 V7" stroke-width="1.1"/><rect x="-2.9" y="-3.3" width="5.8" height="1.6" fill="#f2f2f2" stroke="none"/><rect x="-1.6" y="-7" width="3.2" height="4" rx="1.2" fill="#f2f2f2" stroke="none"/></g>
<!-- save -->
<g fill="#d8d8d8"><path d="M378.400,506 H381.600 V511 H384.600 L380,516 L375.400,511 H378.400Z"/><rect x="371.6" y="517.400" width="16.800" height="4.600"/><rect x="385" y="519" width="1.800" height="1.400" fill="#232323"/></g>
<!-- flip -->
<g><path d="M401.600,509.400 L407.400,514.200 L401.600,519Z" fill="#e6e6e6"/><path d="M418.200,509.800 L413,514.200 L418.200,518.600Z" fill="none" stroke="#e6e6e6" stroke-width="1"/><line x1="410" y1="508" x2="410" y2="520.400" stroke="#e6e6e6" stroke-width="1" stroke-dasharray="1.4 1.200"/></g>
<!-- rotation reset -->
<g fill="none" stroke="#e6e6e6"><circle cx="438.600" cy="514.600" r="6.600" stroke-width="1.300" stroke-dasharray="1.500 1.400"/><path d="M438.600,508 A6.600,6.600 0 0 1 445.200,514.600" stroke-width="1.300"/><path d="M436,505.600 L439.600,508 L436.400,510.600" stroke-width="1.100"/><line x1="432.400" y1="507.600" x2="446.800" y2="521.800" stroke-width="1.300"/></g>
<!-- clear -->
<g fill="none" stroke="#e6e6e6"><path d="M467.600,510.200 H460.600 V520.200 H473.400 V516.600" stroke-width="1.200"/><g transform="translate(471.800,511.400) rotate(-38)"><rect x="-4.400" y="-2.800" width="8.800" height="5.600" stroke-width="0.900" fill="#e6e6e6"/><rect x="-4.400" y="-2.800" width="2.800" height="5.600" fill="#232323" stroke-width="0.900"/></g></g>
<!-- popup -->
<rect x="498.600" y="508" width="12" height="11.600" rx="1.800" fill="#f0f0f0"/><path d="M502,516.8 C502.4,514.4 503.6,513.2 505.4,512.8 L504.200,511.400 L508.400,511 L508,515.200 L506.600,514 C505,514.400 503.400,515.400 502,516.800Z" fill="#232323"/>
<g fill="#a4a4a4"><rect x="534.0" y="508.0" width="1.4" height="1.4"/><rect x="536.7" y="508.0" width="1.4" height="1.4"/><rect x="539.4" y="508.0" width="1.4" height="1.4"/><rect x="542.1" y="508.0" width="1.4" height="1.4"/><rect x="534.0" y="510.7" width="1.4" height="1.4"/><rect x="536.7" y="510.7" width="1.4" height="1.4"/><rect x="539.4" y="510.7" width="1.4" height="1.4"/><rect x="542.1" y="510.7" width="1.4" height="1.4"/><rect x="534.0" y="513.4" width="1.4" height="1.4"/><rect x="536.7" y="513.4" width="1.4" height="1.4"/><rect x="539.4" y="513.4" width="1.4" height="1.4"/><rect x="542.1" y="513.4" width="1.4" height="1.4"/><rect x="534.0" y="516.1" width="1.4" height="1.4"/><rect x="536.7" y="516.1" width="1.4" height="1.4"/><rect x="539.4" y="516.1" width="1.4" height="1.4"/><rect x="542.1" y="516.1" width="1.4" height="1.4"/><rect x="534.0" y="518.8" width="1.4" height="1.4"/><rect x="536.7" y="518.8" width="1.4" height="1.4"/><rect x="539.4" y="518.8" width="1.4" height="1.4"/><rect x="542.1" y="518.8" width="1.4" height="1.4"/></g>
</svg></div>
<div class="a" id="pill" style="left:303px;top:532px;width:195px;height:12.3px;background:#3c3c3e;border-radius:2px;"><div class="t c" style="left:97.5px;top:7.2px;font-size:7.95px;color:#f0f0f0;">2388*1668px 350dpi 52% 2° ブラシ: 20px 100%</div></div>
<div class="a" id="home" style="left:294.8px;top:548.8px;width:210.4px;height:4.2px;border-radius:2.1px;background:#f2f2f2;"></div>
</body></html>
